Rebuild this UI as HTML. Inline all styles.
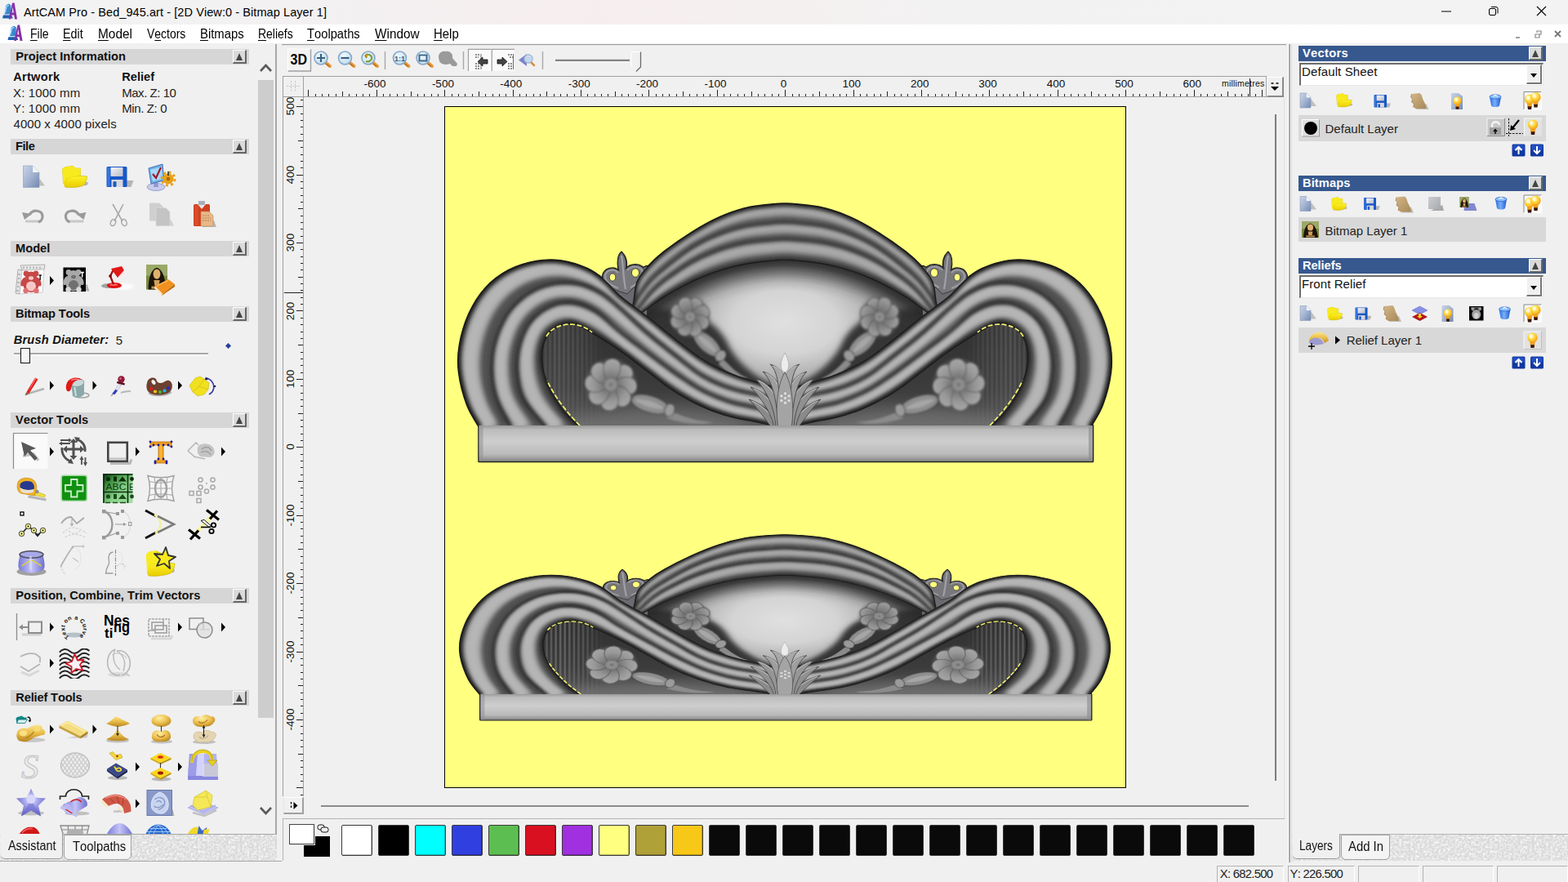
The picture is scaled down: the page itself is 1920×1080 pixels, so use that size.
<!DOCTYPE html>
<html><head><meta charset="utf-8"><title>ArtCAM Pro - Bed_945.art</title>
<style>
*{box-sizing:border-box;margin:0;padding:0}
html,body{width:1920px;height:1080px;overflow:hidden;background:#f0f0f0;font-family:"Liberation Sans",sans-serif;color:#000;font-kerning:none}
.abs{position:absolute}
#title{left:0;top:0;width:1920px;height:30px;background:linear-gradient(90deg,#f3f3f3 0,#f3f1f2 20%,#f6eeee 38%,#f3f2f2 60%,#f3f3f3 100%)}
#title .t{left:29px;top:5px;font-size:15.3px;color:#000;white-space:nowrap;letter-spacing:-0.1px}
#menu{left:0;top:30px;width:1920px;height:23px;background:#fff}
#menu span{position:absolute;top:3px;font-size:15px;white-space:nowrap;color:#000}
#menu u{text-decoration:underline;text-underline-offset:2px;text-decoration-thickness:1px}
.hdr{position:absolute;left:13px;width:292px;height:19px;background:#d6d6d6;font-weight:bold;font-size:14.67px;line-height:19px;padding-left:6px;color:#111;white-space:nowrap}
.hbtn{position:absolute;width:17px;height:17px;background:#dadada;border-top:1px solid #fff;border-left:1px solid #fff;border-right:2px solid #666;border-bottom:2px solid #666}
.hbtn:after{content:"";position:absolute;left:3px;top:3px;border-left:4.5px solid transparent;border-right:4.5px solid transparent;border-bottom:9px solid #444}
.rh{position:absolute;left:1590px;width:303px;height:19px;background:#36588f;color:#fff;font-weight:bold;font-size:14.67px;line-height:19px;padding-left:5px;white-space:nowrap}
.row{position:absolute;left:1590px;width:303px;height:29px;background:#d8d8d8;font-size:15px;color:#222}
.combo{position:absolute;left:1591px;width:299px;height:28px;background:#fff;border-top:2px solid #6d6d6d;border-left:2px solid #6d6d6d;border-bottom:1px solid #e8e8e8;border-right:1px solid #e8e8e8;font-size:15px;color:#111;padding-left:1px;line-height:18px}
.combo i{position:absolute;right:1px;top:0px;width:19px;height:24px;background:#f0f0f0;border-right:2px solid #777;border-bottom:2px solid #777;border-left:1px solid #fff;border-top:1px solid #fff}
.combo i:after{content:"";position:absolute;left:4px;top:10px;border-left:4.5px solid transparent;border-right:4.5px solid transparent;border-top:5px solid #000}
svg{position:absolute;overflow:visible}
.txt{position:absolute;white-space:nowrap}
</style></head>
<body>
<div id="title" class="abs"><div class="txt" style="left:29.0px;top:6.5px;font-size:14.5px;letter-spacing:0.079px;color:#000;">ArtCAM Pro - Bed_945.art - [2D View:0 - Bitmap Layer 1]</div>
<svg style="left:1760px;top:4px" width="150" height="22"><path d="M5 10h12" stroke="#000" stroke-width="1"/><rect x="63.5" y="6.5" width="8" height="8" rx="1.5" fill="none" stroke="#000"/><path d="M66 4.5h6a2 2 0 0 1 2 2v6" fill="none" stroke="#000"/><path d="M122 4l11 11M133 4l-11 11" stroke="#000" stroke-width="1.1"/></svg>
</div>
<div id="menu" class="abs"><span style="left:37.3px;top:2.5px;font-size:15.6px;transform:scaleX(0.9029);transform-origin:0 0"><u>F</u>ile</span><span style="left:77.3px;top:2.5px;font-size:15.6px;transform:scaleX(0.9191);transform-origin:0 0"><u>E</u>dit</span><span style="left:120.3px;top:2.5px;font-size:15.6px;transform:scaleX(0.9886);transform-origin:0 0"><u>M</u>odel</span><span style="left:180px;top:2.5px;font-size:15.6px;transform:scaleX(0.8946);transform-origin:0 0">V<u>e</u>ctors</span><span style="left:245px;top:2.5px;font-size:15.6px;transform:scaleX(0.9531);transform-origin:0 0"><u>B</u>itmaps</span><span style="left:316px;top:2.5px;font-size:15.6px;transform:scaleX(0.8957);transform-origin:0 0"><u>R</u>eliefs</span><span style="left:376px;top:2.5px;font-size:15.6px;transform:scaleX(0.9447);transform-origin:0 0"><u>T</u>oolpaths</span><span style="left:458.7px;top:2.5px;font-size:15.6px;transform:scaleX(0.9843);transform-origin:0 0"><u>W</u>indow</span><span style="left:531.3px;top:2.5px;font-size:15.6px;transform:scaleX(0.9570);transform-origin:0 0"><u>H</u>elp</span><svg style="left:1848px;top:4px" width="70" height="18"><path d="M8 12h5" stroke="#888" stroke-width="1.6"/><path d="M32 8h5v4h-5zM34 6v-2h5v4h-2" fill="none" stroke="#888" stroke-width="1.2"/><path d="M56 4l7 7M63 4l-7 7" stroke="#777" stroke-width="1.8"/></svg></div>
<div class="hdr" style="top:60px;letter-spacing:0.017px;padding-left:6.3px">Project Information</div><div class="hbtn" style="left:285px;top:61px"></div>
<div class="hdr" style="top:170px;letter-spacing:-0.463px;padding-left:6.0px">File</div><div class="hbtn" style="left:285px;top:171px"></div>
<div class="hdr" style="top:295px;letter-spacing:-0.009px;padding-left:6.0px">Model</div><div class="hbtn" style="left:285px;top:296px"></div>
<div class="hdr" style="top:375px;letter-spacing:-0.152px;padding-left:6.0px">Bitmap Tools</div><div class="hbtn" style="left:285px;top:376px"></div>
<div class="hdr" style="top:505px;letter-spacing:0.043px;padding-left:6.0px">Vector Tools</div><div class="hbtn" style="left:285px;top:506px"></div>
<div class="hdr" style="top:720px;letter-spacing:-0.010px;padding-left:6.3px">Position, Combine, Trim Vectors</div><div class="hbtn" style="left:285px;top:721px"></div>
<div class="hdr" style="top:845px;letter-spacing:-0.165px;padding-left:6.3px">Relief Tools</div><div class="hbtn" style="left:285px;top:846px"></div>
<div class="txt" style="left:16.2px;top:86px;font-size:14.67px;letter-spacing:0.244px;color:#111;font-weight:bold;">Artwork</div>
<div class="txt" style="left:149.2px;top:86px;font-size:14.67px;letter-spacing:0.013px;color:#111;font-weight:bold;">Relief</div>
<div class="txt" style="left:16.0px;top:105px;font-size:15px;letter-spacing:0.142px;color:#222;">X: 1000 mm</div>
<div class="txt" style="left:16.0px;top:124px;font-size:15px;letter-spacing:0.142px;color:#222;">Y: 1000 mm</div>
<div class="txt" style="left:16.5px;top:143px;font-size:15px;letter-spacing:0.067px;color:#222;">4000 x 4000 pixels</div>
<div class="txt" style="left:149.2px;top:105px;font-size:15px;letter-spacing:-0.456px;color:#222;">Max. Z: 10</div>
<div class="txt" style="left:149.2px;top:124px;font-size:15px;letter-spacing:-0.373px;color:#222;">Min. Z: 0</div>
<div class="txt" style="left:16.7px;top:407.7px;font-size:14.67px;letter-spacing:0.171px;color:#111;font-weight:bold;font-style:italic;">Brush Diameter:</div>
<div class="txt" style="left:141.7px;top:407.7px;font-size:15px;letter-spacing:-0.344px;color:#222;">5</div>
<div class="abs" style="left:17px;top:432px;width:238px;height:2px;background:#a8a8a8"></div><div class="abs" style="left:17px;top:434px;width:238px;height:2px;background:#fff"></div>
<div class="abs" style="left:25px;top:426px;width:12px;height:19px;background:#f4f4f4;border:1.5px solid #111"></div>
<div class="abs" style="left:277px;top:421px;width:5px;height:5px;background:#2a3f9a;transform:rotate(45deg)"></div>
<div class="abs" style="left:316px;top:98px;width:19px;height:781px;background:#cdcdcd"></div>
<svg style="left:316px;top:74px" width="19" height="16"><path d="M3 13 L9.5 6 L16 13" fill="none" stroke="#5a5a5a" stroke-width="2.6"/></svg>
<svg style="left:316px;top:986px" width="19" height="16"><path d="M3 3 L9.5 10 L16 3" fill="none" stroke="#5a5a5a" stroke-width="2.6"/></svg>
<div class="abs" style="left:337px;top:54px;width:2px;height:968px;background:#a8a8a8"></div>
<div class="abs" style="left:0;top:1022px;width:339px;height:32px;background:#d8d8d8"></div><div class="abs" style="left:0;top:1054px;width:345px;height:1px;background:#a8a8a8"></div><svg style="left:0;top:1022px" width="339" height="32"><filter id="nz" x="0" y="0" width="100%" height="100%"><feTurbulence type="fractalNoise" baseFrequency="0.35" numOctaves="2" seed="3"/><feColorMatrix values="0 0 0 0 1  0 0 0 0 1  0 0 0 0 1  1.6 1.6 0 0 -1.25"/></filter><rect width="339" height="32" filter="url(#nz)" opacity=".8"/></svg>
<div class="abs" style="left:77px;top:1021px;width:262px;height:1px;background:#a8a8a8"></div>
<div class="abs" style="left:1px;top:1021px;width:76px;height:31px;background:#f0f0f0;border-right:1px solid #999;border-bottom:1px solid #999;border-radius:0 0 5px 5px"></div>
<div class="abs" style="left:78px;top:1022px;width:83px;height:31px;background:#f4f4f4;border:1px solid #a0a0a0;border-radius:0 0 6px 6px"></div>
<div class="txt" style="left:10.3px;top:1026.9px;font-size:15.6px;color:#111;transform:scaleX(0.9229);transform-origin:0 0">Assistant</div>
<div class="txt" style="left:88.5px;top:1027.9px;font-size:15.6px;color:#111;transform:scaleX(0.9520);transform-origin:0 0">Toolpaths</div>
<svg style="left:0;top:0" width="1920" height="1080" shape-rendering="crispEdges">
<path d="M345 54.5H1575" stroke="#a0a0a0" stroke-width="1"/><path d="M345 55.5H1575" stroke="#e3e3e3" stroke-width="1"/>
<rect x="346.5" y="93.5" width="1204" height="25" fill="#f0f0f0" stroke="#a0a0a0"/>
<path d="M371.5 93V975M346.5 93V975" stroke="#a0a0a0"/>
<path d="M377.5 110V118M386.5 115V118M394.5 115V118M402.5 115V118M411.5 115V118M419.5 112V118M427.5 115V118M436.5 115V118M444.5 115V118M452.5 115V118M461.5 110V118M469.5 115V118M477.5 115V118M486.5 115V118M494.5 115V118M503.5 112V118M511.5 115V118M519.5 115V118M528.5 115V118M536.5 115V118M544.5 110V118M553.5 115V118M561.5 115V118M569.5 115V118M578.5 115V118M586.5 112V118M594.5 115V118M603.5 115V118M611.5 115V118M619.5 115V118M628.5 110V118M636.5 115V118M644.5 115V118M653.5 115V118M661.5 115V118M669.5 112V118M678.5 115V118M686.5 115V118M694.5 115V118M703.5 115V118M711.5 110V118M719.5 115V118M728.5 115V118M736.5 115V118M744.5 115V118M753.5 112V118M761.5 115V118M769.5 115V118M778.5 115V118M786.5 115V118M794.5 110V118M803.5 115V118M811.5 115V118M819.5 115V118M828.5 115V118M836.5 112V118M844.5 115V118M853.5 115V118M861.5 115V118M869.5 115V118M878.5 110V118M886.5 115V118M894.5 115V118M903.5 115V118M911.5 115V118M920.5 112V118M928.5 115V118M936.5 115V118M945.5 115V118M953.5 115V118M961.5 110V118M970.5 115V118M978.5 115V118M986.5 115V118M995.5 115V118M1003.5 112V118M1011.5 115V118M1020.5 115V118M1028.5 115V118M1036.5 115V118M1045.5 110V118M1053.5 115V118M1061.5 115V118M1070.5 115V118M1078.5 115V118M1086.5 112V118M1095.5 115V118M1103.5 115V118M1111.5 115V118M1120.5 115V118M1128.5 110V118M1136.5 115V118M1145.5 115V118M1153.5 115V118M1161.5 115V118M1170.5 112V118M1178.5 115V118M1186.5 115V118M1195.5 115V118M1203.5 115V118M1211.5 110V118M1220.5 115V118M1228.5 115V118M1236.5 115V118M1245.5 115V118M1253.5 112V118M1261.5 115V118M1270.5 115V118M1278.5 115V118M1286.5 115V118M1295.5 110V118M1303.5 115V118M1311.5 115V118M1320.5 115V118M1328.5 115V118M1336.5 112V118M1345.5 115V118M1353.5 115V118M1362.5 115V118M1370.5 115V118M1378.5 110V118M1387.5 115V118M1395.5 115V118M1403.5 115V118M1412.5 115V118M1420.5 112V118M1428.5 115V118M1437.5 115V118M1445.5 115V118M1453.5 115V118M1462.5 110V118M1470.5 115V118M1478.5 115V118M1487.5 115V118M1495.5 115V118M1503.5 112V118M1512.5 115V118M1520.5 115V118M1528.5 115V118M1537.5 115V118M1545.5 110V118M1530.5 96V118M368 973.5H371M363 964.5H371M368 956.5H371M368 948.5H371M368 939.5H371M368 931.5H371M365 923.5H371M368 914.5H371M368 906.5H371M368 898.5H371M368 889.5H371M363 881.5H371M368 873.5H371M368 864.5H371M368 856.5H371M368 848.5H371M365 839.5H371M368 831.5H371M368 823.5H371M368 814.5H371M368 806.5H371M363 798.5H371M368 789.5H371M368 781.5H371M368 772.5H371M368 764.5H371M365 756.5H371M368 747.5H371M368 739.5H371M368 731.5H371M368 722.5H371M363 714.5H371M368 706.5H371M368 697.5H371M368 689.5H371M368 681.5H371M365 672.5H371M368 664.5H371M368 656.5H371M368 647.5H371M368 639.5H371M363 631.5H371M368 622.5H371M368 614.5H371M368 606.5H371M368 597.5H371M365 589.5H371M368 581.5H371M368 572.5H371M368 564.5H371M368 556.5H371M363 547.5H371M368 539.5H371M368 531.5H371M368 522.5H371M368 514.5H371M365 506.5H371M368 497.5H371M368 489.5H371M368 481.5H371M368 472.5H371M363 464.5H371M368 456.5H371M368 447.5H371M368 439.5H371M368 431.5H371M365 422.5H371M368 414.5H371M368 406.5H371M368 397.5H371M368 389.5H371M363 380.5H371M368 372.5H371M368 364.5H371M368 355.5H371M368 347.5H371M365 339.5H371M368 330.5H371M368 322.5H371M368 314.5H371M368 305.5H371M363 297.5H371M368 289.5H371M368 280.5H371M368 272.5H371M368 264.5H371M365 255.5H371M368 247.5H371M368 239.5H371M368 230.5H371M368 222.5H371M363 214.5H371M368 205.5H371M368 197.5H371M368 189.5H371M368 180.5H371M365 172.5H371M368 164.5H371M368 155.5H371M368 147.5H371M368 139.5H371M363 130.5H371M368 122.5H371M348 358.5H371" stroke="#222" stroke-width="1"/>
</svg>
<div class="txt" style="left:429.0px;top:95px;width:60px;text-align:center;font-size:13.5px;color:#111">-600</div>
<div class="txt" style="left:512.4px;top:95px;width:60px;text-align:center;font-size:13.5px;color:#111">-500</div>
<div class="txt" style="left:595.8px;top:95px;width:60px;text-align:center;font-size:13.5px;color:#111">-400</div>
<div class="txt" style="left:679.2px;top:95px;width:60px;text-align:center;font-size:13.5px;color:#111">-300</div>
<div class="txt" style="left:762.6px;top:95px;width:60px;text-align:center;font-size:13.5px;color:#111">-200</div>
<div class="txt" style="left:846.0px;top:95px;width:60px;text-align:center;font-size:13.5px;color:#111">-100</div>
<div class="txt" style="left:929.4px;top:95px;width:60px;text-align:center;font-size:13.5px;color:#111">0</div>
<div class="txt" style="left:1012.8px;top:95px;width:60px;text-align:center;font-size:13.5px;color:#111">100</div>
<div class="txt" style="left:1096.2px;top:95px;width:60px;text-align:center;font-size:13.5px;color:#111">200</div>
<div class="txt" style="left:1179.6px;top:95px;width:60px;text-align:center;font-size:13.5px;color:#111">300</div>
<div class="txt" style="left:1263.0px;top:95px;width:60px;text-align:center;font-size:13.5px;color:#111">400</div>
<div class="txt" style="left:1346.4px;top:95px;width:60px;text-align:center;font-size:13.5px;color:#111">500</div>
<div class="txt" style="left:1429.8px;top:95px;width:60px;text-align:center;font-size:13.5px;color:#111">600</div>
<div class="txt" style="left:326px;top:872.9px;width:60px;height:16px;line-height:16px;text-align:center;font-size:13.4px;color:#111;transform:rotate(-90deg)">-400</div>
<div class="txt" style="left:326px;top:789.5px;width:60px;height:16px;line-height:16px;text-align:center;font-size:13.4px;color:#111;transform:rotate(-90deg)">-300</div>
<div class="txt" style="left:326px;top:706.1px;width:60px;height:16px;line-height:16px;text-align:center;font-size:13.4px;color:#111;transform:rotate(-90deg)">-200</div>
<div class="txt" style="left:326px;top:622.7px;width:60px;height:16px;line-height:16px;text-align:center;font-size:13.4px;color:#111;transform:rotate(-90deg)">-100</div>
<div class="txt" style="left:326px;top:539.3px;width:60px;height:16px;line-height:16px;text-align:center;font-size:13.4px;color:#111;transform:rotate(-90deg)">0</div>
<div class="txt" style="left:326px;top:455.9px;width:60px;height:16px;line-height:16px;text-align:center;font-size:13.4px;color:#111;transform:rotate(-90deg)">100</div>
<div class="txt" style="left:326px;top:372.5px;width:60px;height:16px;line-height:16px;text-align:center;font-size:13.4px;color:#111;transform:rotate(-90deg)">200</div>
<div class="txt" style="left:326px;top:289.1px;width:60px;height:16px;line-height:16px;text-align:center;font-size:13.4px;color:#111;transform:rotate(-90deg)">300</div>
<div class="txt" style="left:326px;top:205.7px;width:60px;height:16px;line-height:16px;text-align:center;font-size:13.4px;color:#111;transform:rotate(-90deg)">400</div>
<div class="txt" style="left:326px;top:122.3px;width:60px;height:16px;line-height:16px;text-align:center;font-size:13.4px;color:#111;transform:rotate(-90deg)">500</div>
<div class="txt" style="left:1496px;top:96px;font-size:10.5px;color:#111;letter-spacing:0.2px">millimetres</div>
<div class="abs" style="left:1551px;top:94px;width:21px;height:25px;background:#f0f0f0;border-right:2px solid #8a8a8a;border-bottom:2px solid #8a8a8a;border-top:1px solid #fff;border-left:1px solid #fff"></div>
<svg style="left:1551px;top:94px" width="21" height="25"><path d="M5.5 8h3M11.5 8h3" stroke="#000" stroke-width="1.4"/><path d="M5 12h10l-5 5z" fill="#000"/></svg>
<svg style="left:347px;top:94px" width="24" height="24"><path d="M4 11.5h17M9.5 5v13M14.5 5v13" stroke="#c4c4c4" stroke-width="1" stroke-dasharray="2 1.5"/></svg>
<div class="abs" style="left:1561px;top:140px;width:2px;height:816px;background:#7d7d7d"></div>
<div class="abs" style="left:393px;top:986px;width:1136px;height:2px;background:#8a8a8a"></div>
<div class="abs" style="left:346.5px;top:975.5px;width:25.5px;height:21.5px;background:#f0f0f0;border-right:2px solid #a0a0a0;border-bottom:2px solid #a0a0a0;border-top:1px solid #fff;border-left:1px solid #e4e4e4"></div>
<svg style="left:347px;top:976px" width="24" height="21"><path d="M9.5 6v9" stroke="#000" stroke-width="1.3" stroke-dasharray="2.5 2"/><path d="M12.5 6l5 4.5l-5 4.5z" fill="#000"/></svg>
<div class="abs" style="left:346px;top:1002px;width:1227px;height:1px;background:#b4b4b4"></div><div class="abs" style="left:346px;top:1002px;width:1px;height:52px;background:#b4b4b4"></div>
<div class="abs" style="left:1572px;top:118px;width:1px;height:884px;background:#e2e2e2"></div>
<div class="abs" style="left:544px;top:130px;width:835px;height:835px;background:#ffff80;border:1px solid #000"></div>
<svg style="left:0;top:0" width="1920" height="1080" viewBox="0 0 1920 1080"><defs>
<filter id="b1" x="-20%" y="-20%" width="140%" height="140%"><feGaussianBlur stdDeviation="0.8"/></filter>
<filter id="b2" x="-20%" y="-20%" width="140%" height="140%"><feGaussianBlur stdDeviation="2.2"/></filter>
<filter id="b3" x="-20%" y="-20%" width="140%" height="140%"><feGaussianBlur stdDeviation="3"/></filter>
<filter id="b4" x="-20%" y="-20%" width="140%" height="140%"><feGaussianBlur stdDeviation="3.5"/></filter>
<filter id="b5" x="-20%" y="-20%" width="140%" height="140%"><feGaussianBlur stdDeviation="5"/></filter>
<filter id="b6" x="-30%" y="-50%" width="160%" height="200%"><feGaussianBlur stdDeviation="9"/></filter>
<radialGradient id="bowl" gradientUnits="userSpaceOnUse" cx="961" cy="395" r="185" gradientTransform="translate(961 395) scale(1 0.6) translate(-961 -395)">
<stop offset="0" stop-color="#e0e0e0"/><stop offset="0.35" stop-color="#d4d4d4"/><stop offset="0.6" stop-color="#b0b0b0"/><stop offset="0.8" stop-color="#808080"/><stop offset="1" stop-color="#585858"/></radialGradient>
<linearGradient id="lobebg" gradientUnits="userSpaceOnUse" x1="0" y1="400" x2="0" y2="526"><stop offset="0" stop-color="#303030"/><stop offset="0.6" stop-color="#3c3c3c"/><stop offset="1" stop-color="#5a5a5a"/></linearGradient>
<linearGradient id="strfade" gradientUnits="userSpaceOnUse" x1="664" y1="0" x2="738" y2="0"><stop offset="0" stop-color="#6c6c6c" stop-opacity="0.5"/><stop offset="0.25" stop-color="#6c6c6c" stop-opacity="0.8"/><stop offset="0.7" stop-color="#6c6c6c" stop-opacity="0.5"/><stop offset="1" stop-color="#6c6c6c" stop-opacity="0"/></linearGradient>
<linearGradient id="barg" x1="0" y1="0" x2="0" y2="1"><stop offset="0" stop-color="#9a9a9a"/><stop offset="0.12" stop-color="#bcbcbc"/><stop offset="0.45" stop-color="#cecece"/><stop offset="0.8" stop-color="#bababa"/><stop offset="0.93" stop-color="#9a9a9a"/><stop offset="1" stop-color="#7c7c7c"/></linearGradient>
<radialGradient id="pet" gradientUnits="userSpaceOnUse" cx="0" cy="0" r="30"><stop offset="0.2" stop-color="#6e6e6e"/><stop offset="0.7" stop-color="#989898"/><stop offset="1" stop-color="#a4a4a4"/></radialGradient>
</defs><g id="orn"><g fill="#1a1a1a" stroke="#1a1a1a" stroke-width="2.6" stroke-linejoin="round"><path d="M587.0 523.0C584.5 518.4 576.2 506.8 572.0 495.5C567.8 484.2 563.5 467.8 562.0 455.5C560.5 443.2 560.9 433.9 563.0 422.0C565.1 410.1 569.2 395.9 574.4 384.4C579.6 372.9 586.3 361.9 594.4 353.0C602.5 344.1 612.6 336.5 623.0 331.0C633.4 325.5 645.9 321.9 656.7 320.0C667.5 318.1 677.4 318.0 687.8 319.5C698.2 321.0 710.3 325.1 719.0 329.0C727.7 332.9 733.2 337.3 740.0 343.0C746.8 348.7 751.2 355.5 760.0 363.0C768.8 370.5 781.9 379.3 793.0 388.0C804.1 396.7 815.5 406.3 826.7 415.0C837.9 423.7 849.0 433.1 860.0 440.0C871.0 446.9 881.9 452.0 893.0 456.7C904.1 461.4 914.9 464.4 926.7 468.0C938.5 471.6 957.8 476.3 964.0 478.0L964.0 525.0C957.8 523.6 938.5 519.2 926.7 516.7C914.9 514.2 904.1 513.1 893.0 510.0C881.9 506.9 871.0 503.0 860.0 498.0C849.0 493.0 837.9 487.2 826.7 480.0C815.5 472.8 804.1 463.3 793.0 455.0C781.9 446.7 771.7 438.1 760.0 430.0C748.3 421.9 732.8 412.4 723.0 406.7C713.2 401.0 707.7 397.1 701.0 396.0C694.3 394.9 688.3 397.2 683.0 400.0C677.7 402.8 672.2 406.7 669.0 413.0C665.8 419.3 663.3 428.5 663.5 437.8C663.7 447.1 665.9 458.6 670.0 469.0C674.1 479.4 681.3 491.0 688.0 500.0C694.7 509.0 706.3 519.2 710.0 523.0Z"/><path d="M1335.0 523.0C1337.5 518.4 1345.8 506.8 1350.0 495.5C1354.2 484.2 1358.5 467.8 1360.0 455.5C1361.5 443.2 1361.1 433.9 1359.0 422.0C1356.9 410.1 1352.8 395.9 1347.6 384.4C1342.4 372.9 1335.7 361.9 1327.6 353.0C1319.5 344.1 1309.4 336.5 1299.0 331.0C1288.6 325.5 1276.1 321.9 1265.3 320.0C1254.5 318.1 1244.6 318.0 1234.2 319.5C1223.8 321.0 1211.7 325.1 1203.0 329.0C1194.3 332.9 1188.8 337.3 1182.0 343.0C1175.2 348.7 1170.8 355.5 1162.0 363.0C1153.2 370.5 1140.1 379.3 1129.0 388.0C1117.9 396.7 1106.5 406.3 1095.3 415.0C1084.1 423.7 1073.0 433.1 1062.0 440.0C1051.0 446.9 1040.1 452.0 1029.0 456.7C1017.9 461.4 1007.1 464.4 995.3 468.0C983.5 471.6 964.2 476.3 958.0 478.0L958.0 525.0C964.2 523.6 983.5 519.2 995.3 516.7C1007.1 514.2 1017.9 513.1 1029.0 510.0C1040.1 506.9 1051.0 503.0 1062.0 498.0C1073.0 493.0 1084.1 487.2 1095.3 480.0C1106.5 472.8 1117.9 463.3 1129.0 455.0C1140.1 446.7 1150.3 438.1 1162.0 430.0C1173.7 421.9 1189.2 412.4 1199.0 406.7C1208.8 401.0 1214.3 397.1 1221.0 396.0C1227.7 394.9 1233.7 397.2 1239.0 400.0C1244.3 402.8 1249.8 406.7 1253.0 413.0C1256.2 419.3 1258.7 428.5 1258.5 437.8C1258.3 447.1 1256.1 458.6 1252.0 469.0C1247.9 479.4 1240.7 491.0 1234.0 500.0C1227.3 509.0 1215.7 519.2 1212.0 523.0Z"/><path d="M772.2 389.7C772.9 386.1 774.7 375.4 776.0 368.0C777.3 360.6 777.1 351.9 780.0 345.0C782.9 338.1 787.8 332.8 793.3 326.7C798.8 320.6 804.4 315.2 813.3 308.3C822.2 301.4 835.6 291.9 846.7 285.0C857.8 278.1 868.9 271.7 880.0 266.7C891.1 261.7 902.2 257.7 913.3 255.0C924.4 252.3 938.8 251.2 946.7 250.3C954.7 249.4 956.2 249.6 961.0 249.6C965.8 249.6 967.3 249.4 975.3 250.3C983.2 251.2 997.6 252.3 1008.7 255.0C1019.8 257.7 1030.9 261.7 1042.0 266.7C1053.1 271.7 1064.2 278.1 1075.3 285.0C1086.4 291.9 1099.8 301.4 1108.7 308.3C1117.6 315.2 1123.2 320.6 1128.7 326.7C1134.2 332.8 1139.1 338.1 1142.0 345.0C1144.9 351.9 1144.7 360.6 1146.0 368.0C1147.3 375.4 1149.1 386.1 1149.8 389.7L1149.9 392.8C1146.9 390.7 1138.9 384.9 1132.0 380.0C1125.1 375.1 1118.2 369.1 1108.7 363.3C1099.2 357.5 1086.4 350.3 1075.3 345.0C1064.2 339.7 1053.0 335.3 1042.0 331.7C1031.0 328.1 1020.1 325.4 1009.0 323.3C997.9 321.2 983.3 319.8 975.3 319.0C967.3 318.2 965.8 318.4 961.0 318.4C956.2 318.4 954.7 318.2 946.7 319.0C938.7 319.8 924.1 321.2 913.0 323.3C901.9 325.4 891.0 328.1 880.0 331.7C869.0 335.3 857.8 339.7 846.7 345.0C835.6 350.3 822.8 357.5 813.3 363.3C803.8 369.1 796.9 375.1 790.0 380.0C783.1 384.9 775.1 390.7 772.1 392.8Z"/><path d="M772.1 392.8C775.1 390.7 783.1 384.9 790.0 380.0C796.9 375.1 803.8 369.1 813.3 363.3C822.8 357.5 835.6 350.3 846.7 345.0C857.8 339.7 869.0 335.3 880.0 331.7C891.0 328.1 901.9 325.4 913.0 323.3C924.1 321.2 938.7 319.8 946.7 319.0C954.7 318.2 956.2 318.4 961.0 318.4C965.8 318.4 967.3 318.2 975.3 319.0C983.3 319.8 997.9 321.2 1009.0 323.3C1020.1 325.4 1031.0 328.1 1042.0 331.7C1053.0 335.3 1064.2 339.7 1075.3 345.0C1086.4 350.3 1099.2 357.5 1108.7 363.3C1118.2 369.1 1125.1 375.1 1132.0 380.0C1138.9 384.9 1146.9 390.7 1149.9 392.8L1131 400L1131 520L791 520L791 400Z"/><path d="M710.0 523.0C706.3 519.2 694.7 509.0 688.0 500.0C681.3 491.0 674.1 479.4 670.0 469.0C665.9 458.6 663.7 447.1 663.5 437.8C663.3 428.5 665.8 419.3 669.0 413.0C672.2 406.7 677.7 402.8 683.0 400.0C688.3 397.2 694.3 394.9 701.0 396.0C707.7 397.1 713.2 401.0 723.0 406.7C732.8 412.4 748.3 421.9 760.0 430.0C771.7 438.1 781.9 446.7 793.0 455.0C804.1 463.3 815.5 472.8 826.7 480.0C837.9 487.2 849.0 493.0 860.0 498.0C871.0 503.0 881.9 506.9 893.0 510.0C904.1 513.1 914.9 514.2 926.7 516.7C938.5 519.2 957.8 523.6 964.0 525.0L966 526L710 526Z"/><path d="M1212.0 523.0C1215.7 519.2 1227.3 509.0 1234.0 500.0C1240.7 491.0 1247.9 479.4 1252.0 469.0C1256.1 458.6 1258.3 447.1 1258.5 437.8C1258.7 428.5 1256.2 419.3 1253.0 413.0C1249.8 406.7 1244.3 402.8 1239.0 400.0C1233.7 397.2 1227.7 394.9 1221.0 396.0C1214.3 397.1 1208.8 401.0 1199.0 406.7C1189.2 412.4 1173.7 421.9 1162.0 430.0C1150.3 438.1 1140.1 446.7 1129.0 455.0C1117.9 463.3 1106.5 472.8 1095.3 480.0C1084.1 487.2 1073.0 493.0 1062.0 498.0C1051.0 503.0 1040.1 506.9 1029.0 510.0C1017.9 513.1 1007.1 514.2 995.3 516.7C983.5 519.2 964.2 523.6 958.0 525.0L956 526L1212 526Z"/><path d="M586.5 521H1338V565H586.5Z"/><path d="M761 309C766 314 768 322 766 330C772 322 786 322 790 332C792 342 784 350 776 352L768 360L756 356C748 352 738 348 738 338C740 328 752 326 758 332C756 322 756 314 761 309Z"/><path d="M1161 309C1156 314 1154 322 1156 330C1150 322 1136 322 1132 332C1130 342 1138 350 1146 352L1154 360L1166 356C1174 352 1184 348 1184 338C1182 328 1170 326 1164 332C1166 322 1166 314 1161 309Z"/><path d="M738 350L792 326L792 394Z"/><path d="M1184 350L1130 326L1130 394Z"/></g><clipPath id="cc"><path d="M772.1 392.8C775.1 390.7 783.1 384.9 790.0 380.0C796.9 375.1 803.8 369.1 813.3 363.3C822.8 357.5 835.6 350.3 846.7 345.0C857.8 339.7 869.0 335.3 880.0 331.7C891.0 328.1 901.9 325.4 913.0 323.3C924.1 321.2 938.7 319.8 946.7 319.0C954.7 318.2 956.2 318.4 961.0 318.4C965.8 318.4 967.3 318.2 975.3 319.0C983.3 319.8 997.9 321.2 1009.0 323.3C1020.1 325.4 1031.0 328.1 1042.0 331.7C1053.0 335.3 1064.2 339.7 1075.3 345.0C1086.4 350.3 1099.2 357.5 1108.7 363.3C1118.2 369.1 1125.1 375.1 1132.0 380.0C1138.9 384.9 1146.9 390.7 1149.9 392.8L1131 400L1131 520L791 520L791 400Z"/></clipPath><path d="M772.1 392.8C775.1 390.7 783.1 384.9 790.0 380.0C796.9 375.1 803.8 369.1 813.3 363.3C822.8 357.5 835.6 350.3 846.7 345.0C857.8 339.7 869.0 335.3 880.0 331.7C891.0 328.1 901.9 325.4 913.0 323.3C924.1 321.2 938.7 319.8 946.7 319.0C954.7 318.2 956.2 318.4 961.0 318.4C965.8 318.4 967.3 318.2 975.3 319.0C983.3 319.8 997.9 321.2 1009.0 323.3C1020.1 325.4 1031.0 328.1 1042.0 331.7C1053.0 335.3 1064.2 339.7 1075.3 345.0C1086.4 350.3 1099.2 357.5 1108.7 363.3C1118.2 369.1 1125.1 375.1 1132.0 380.0C1138.9 384.9 1146.9 390.7 1149.9 392.8L1131 400L1131 520L791 520L791 400Z" fill="#3a3a3a"/><g clip-path="url(#cc)"><rect x="780" y="300" width="362" height="230" fill="url(#bowl)"/><g transform="translate(961.0 0) scale(1 1) translate(-961.0 0)"><path d="M770 378C830 374 872 384 890 418C902 446 930 466 961 478L961 530L770 530Z" fill="#343434" filter="url(#b4)"/></g><g transform="translate(961.0 0) scale(-1 1) translate(-961.0 0)"><path d="M770 378C830 374 872 384 890 418C902 446 930 466 961 478L961 530L770 530Z" fill="#343434" filter="url(#b4)"/></g><path d="M772.1 392.8C775.1 390.7 783.1 384.9 790.0 380.0C796.9 375.1 803.8 369.1 813.3 363.3C822.8 357.5 835.6 350.3 846.7 345.0C857.8 339.7 869.0 335.3 880.0 331.7C891.0 328.1 901.9 325.4 913.0 323.3C924.1 321.2 938.7 319.8 946.7 319.0C954.7 318.2 956.2 318.4 961.0 318.4C965.8 318.4 967.3 318.2 975.3 319.0C983.3 319.8 997.9 321.2 1009.0 323.3C1020.1 325.4 1031.0 328.1 1042.0 331.7C1053.0 335.3 1064.2 339.7 1075.3 345.0C1086.4 350.3 1099.2 357.5 1108.7 363.3C1118.2 369.1 1125.1 375.1 1132.0 380.0C1138.9 384.9 1146.9 390.7 1149.9 392.8" fill="none" stroke="#2a2a2a" stroke-width="34" opacity="0.8" filter="url(#b6)"/><path d="M772.1 392.8C775.1 390.7 783.1 384.9 790.0 380.0C796.9 375.1 803.8 369.1 813.3 363.3C822.8 357.5 835.6 350.3 846.7 345.0C857.8 339.7 869.0 335.3 880.0 331.7C891.0 328.1 901.9 325.4 913.0 323.3C924.1 321.2 938.7 319.8 946.7 319.0C954.7 318.2 956.2 318.4 961.0 318.4C965.8 318.4 967.3 318.2 975.3 319.0C983.3 319.8 997.9 321.2 1009.0 323.3C1020.1 325.4 1031.0 328.1 1042.0 331.7C1053.0 335.3 1064.2 339.7 1075.3 345.0C1086.4 350.3 1099.2 357.5 1108.7 363.3C1118.2 369.1 1125.1 375.1 1132.0 380.0C1138.9 384.9 1146.9 390.7 1149.9 392.8" fill="none" stroke="#2a2a2a" stroke-width="10" opacity="0.7" filter="url(#b3)"/><g transform="translate(961.0 0) scale(1 1) translate(-961.0 0)"><path d="M884 438C894 448 902 458 916 463C904 464 892 458 880 446Z" fill="#8a8a8a" filter="url(#b1)"/><g transform="translate(866 421) rotate(42)" filter="url(#b1)"><ellipse rx="21" ry="9.5" fill="#8e8e8e" stroke="#444" stroke-width="1"/><path d="M-18 0C-6 -5 6 -5 16 0C6 5 -6 5 -18 0Z" fill="#a6a6a6"/><ellipse cx="22" cy="0" rx="6" ry="7.5" fill="#9a9a9a" stroke="#444" stroke-width="1"/></g><g transform="translate(845 388) rotate(-15)" filter="url(#b1)"><circle r="23.5" fill="#5c5c5c" filter="url(#b2)"/><g transform="rotate(0.0)"><path d="M0 0C-2.4 -14.4 6.0 -24.5 14.9 -19.7C24.0 -13.2 16.8 -2.4 0 0Z" fill="url(#pet)" stroke="#5e5e5e" stroke-width="1.1"/></g><g transform="rotate(45.0)"><path d="M0 0C-2.4 -14.4 6.0 -24.5 14.9 -19.7C24.0 -13.2 16.8 -2.4 0 0Z" fill="url(#pet)" stroke="#5e5e5e" stroke-width="1.1"/></g><g transform="rotate(90.0)"><path d="M0 0C-2.4 -14.4 6.0 -24.5 14.9 -19.7C24.0 -13.2 16.8 -2.4 0 0Z" fill="url(#pet)" stroke="#5e5e5e" stroke-width="1.1"/></g><g transform="rotate(135.0)"><path d="M0 0C-2.4 -14.4 6.0 -24.5 14.9 -19.7C24.0 -13.2 16.8 -2.4 0 0Z" fill="url(#pet)" stroke="#5e5e5e" stroke-width="1.1"/></g><g transform="rotate(180.0)"><path d="M0 0C-2.4 -14.4 6.0 -24.5 14.9 -19.7C24.0 -13.2 16.8 -2.4 0 0Z" fill="url(#pet)" stroke="#5e5e5e" stroke-width="1.1"/></g><g transform="rotate(225.0)"><path d="M0 0C-2.4 -14.4 6.0 -24.5 14.9 -19.7C24.0 -13.2 16.8 -2.4 0 0Z" fill="url(#pet)" stroke="#5e5e5e" stroke-width="1.1"/></g><g transform="rotate(270.0)"><path d="M0 0C-2.4 -14.4 6.0 -24.5 14.9 -19.7C24.0 -13.2 16.8 -2.4 0 0Z" fill="url(#pet)" stroke="#5e5e5e" stroke-width="1.1"/></g><g transform="rotate(315.0)"><path d="M0 0C-2.4 -14.4 6.0 -24.5 14.9 -19.7C24.0 -13.2 16.8 -2.4 0 0Z" fill="url(#pet)" stroke="#5e5e5e" stroke-width="1.1"/></g><circle r="6.5" fill="#8a8a8a" stroke="#6a6a6a" stroke-width="1"/><circle r="2.9" fill="#7a7a7a" stroke="#9c9c9c" stroke-width="1"/></g></g><g transform="translate(961.0 0) scale(-1 1) translate(-961.0 0)"><path d="M884 438C894 448 902 458 916 463C904 464 892 458 880 446Z" fill="#8a8a8a" filter="url(#b1)"/><g transform="translate(866 421) rotate(42)" filter="url(#b1)"><ellipse rx="21" ry="9.5" fill="#8e8e8e" stroke="#444" stroke-width="1"/><path d="M-18 0C-6 -5 6 -5 16 0C6 5 -6 5 -18 0Z" fill="#a6a6a6"/><ellipse cx="22" cy="0" rx="6" ry="7.5" fill="#9a9a9a" stroke="#444" stroke-width="1"/></g><g transform="translate(845 388) rotate(-15)" filter="url(#b1)"><circle r="23.5" fill="#5c5c5c" filter="url(#b2)"/><g transform="rotate(0.0)"><path d="M0 0C-2.4 -14.4 6.0 -24.5 14.9 -19.7C24.0 -13.2 16.8 -2.4 0 0Z" fill="url(#pet)" stroke="#5e5e5e" stroke-width="1.1"/></g><g transform="rotate(45.0)"><path d="M0 0C-2.4 -14.4 6.0 -24.5 14.9 -19.7C24.0 -13.2 16.8 -2.4 0 0Z" fill="url(#pet)" stroke="#5e5e5e" stroke-width="1.1"/></g><g transform="rotate(90.0)"><path d="M0 0C-2.4 -14.4 6.0 -24.5 14.9 -19.7C24.0 -13.2 16.8 -2.4 0 0Z" fill="url(#pet)" stroke="#5e5e5e" stroke-width="1.1"/></g><g transform="rotate(135.0)"><path d="M0 0C-2.4 -14.4 6.0 -24.5 14.9 -19.7C24.0 -13.2 16.8 -2.4 0 0Z" fill="url(#pet)" stroke="#5e5e5e" stroke-width="1.1"/></g><g transform="rotate(180.0)"><path d="M0 0C-2.4 -14.4 6.0 -24.5 14.9 -19.7C24.0 -13.2 16.8 -2.4 0 0Z" fill="url(#pet)" stroke="#5e5e5e" stroke-width="1.1"/></g><g transform="rotate(225.0)"><path d="M0 0C-2.4 -14.4 6.0 -24.5 14.9 -19.7C24.0 -13.2 16.8 -2.4 0 0Z" fill="url(#pet)" stroke="#5e5e5e" stroke-width="1.1"/></g><g transform="rotate(270.0)"><path d="M0 0C-2.4 -14.4 6.0 -24.5 14.9 -19.7C24.0 -13.2 16.8 -2.4 0 0Z" fill="url(#pet)" stroke="#5e5e5e" stroke-width="1.1"/></g><g transform="rotate(315.0)"><path d="M0 0C-2.4 -14.4 6.0 -24.5 14.9 -19.7C24.0 -13.2 16.8 -2.4 0 0Z" fill="url(#pet)" stroke="#5e5e5e" stroke-width="1.1"/></g><circle r="6.5" fill="#8a8a8a" stroke="#6a6a6a" stroke-width="1"/><circle r="2.9" fill="#7a7a7a" stroke="#9c9c9c" stroke-width="1"/></g></g></g><g transform="translate(961.0 0) scale(1 1) translate(-961.0 0)"><path d="M738 350L792 326L792 394Z" fill="#6a6a70"/><path d="M761 309C766 314 768 322 766 330C772 322 786 322 790 332C792 342 784 350 776 352L768 360L756 356C748 352 738 348 738 338C740 328 752 326 758 332C756 322 756 314 761 309Z" fill="#77777c" stroke="#3a3a3a" stroke-width="1"/><path d="M761 313C763 322 763 340 766 354" stroke="#a0a0a6" stroke-width="2.2" fill="none"/><path d="M757 334C752 328 742 330 741 338C741 346 750 350 757 353" stroke="#9c9ca2" stroke-width="2" fill="none"/><path d="M768 331C774 324 786 326 787 334C788 342 780 348 772 352" stroke="#9c9ca2" stroke-width="2" fill="none"/><ellipse cx="750" cy="339.5" rx="3.8" ry="4.6" fill="#ffff80" stroke="#333" stroke-width="0.8"/><ellipse cx="778" cy="334" rx="4.6" ry="5.2" fill="#ffff80" stroke="#333" stroke-width="0.8"/></g><g transform="translate(961.0 0) scale(-1 1) translate(-961.0 0)"><path d="M738 350L792 326L792 394Z" fill="#6a6a70"/><path d="M761 309C766 314 768 322 766 330C772 322 786 322 790 332C792 342 784 350 776 352L768 360L756 356C748 352 738 348 738 338C740 328 752 326 758 332C756 322 756 314 761 309Z" fill="#77777c" stroke="#3a3a3a" stroke-width="1"/><path d="M761 313C763 322 763 340 766 354" stroke="#a0a0a6" stroke-width="2.2" fill="none"/><path d="M757 334C752 328 742 330 741 338C741 346 750 350 757 353" stroke="#9c9ca2" stroke-width="2" fill="none"/><path d="M768 331C774 324 786 326 787 334C788 342 780 348 772 352" stroke="#9c9ca2" stroke-width="2" fill="none"/><ellipse cx="750" cy="339.5" rx="3.8" ry="4.6" fill="#ffff80" stroke="#333" stroke-width="0.8"/><ellipse cx="778" cy="334" rx="4.6" ry="5.2" fill="#ffff80" stroke="#333" stroke-width="0.8"/></g><clipPath id="arc"><path d="M772.2 389.7L773.5 382.3L774.8 375.0L776.1 367.6L777.0 360.2L777.9 352.8L779.8 345.6L783.2 339.0L787.7 333.0L792.7 327.4L797.8 322.0L803.1 316.8L808.8 311.9L814.6 307.3L820.6 302.8L826.7 298.4L832.8 294.1L839.0 290.0L845.2 285.9L851.6 282.0L858.0 278.2L864.5 274.5L871.1 271.0L877.8 267.7L884.6 264.7L891.5 261.9L898.6 259.3L905.7 257.1L912.9 255.1L920.2 253.6L927.6 252.4L935.0 251.5L942.4 250.8L949.8 250.0L957.3 249.6L964.7 249.6L972.2 250.0L979.6 250.8L987.0 251.5L994.4 252.4L1001.8 253.6L1009.1 255.1L1016.3 257.1L1023.4 259.3L1030.5 261.9L1037.4 264.7L1044.2 267.7L1050.9 271.0L1057.5 274.5L1064.0 278.2L1070.4 282.0L1076.8 285.9L1083.0 290.0L1089.2 294.1L1095.3 298.4L1101.4 302.8L1107.4 307.3L1113.2 311.9L1118.9 316.8L1124.2 322.0L1129.3 327.4L1134.3 333.0L1138.8 339.0L1142.2 345.6L1144.1 352.8L1145.0 360.2L1145.9 367.6L1147.2 375.0L1148.5 382.3L1149.8 389.7L1149.9 392.8L1145.0 389.3L1140.1 385.8L1135.2 382.3L1130.4 378.8L1125.6 375.2L1120.8 371.6L1115.9 368.1L1111.0 364.7L1105.9 361.6L1100.7 358.5L1095.5 355.5L1090.2 352.6L1084.9 349.8L1079.6 347.1L1074.2 344.5L1068.7 342.0L1063.2 339.6L1057.6 337.3L1052.0 335.2L1046.4 333.2L1040.7 331.3L1035.0 329.5L1029.2 327.9L1023.4 326.4L1017.5 325.0L1011.7 323.8L1005.8 322.7L999.8 321.8L993.9 321.0L987.9 320.3L981.9 319.7L976.0 319.1L970.0 318.5L964.0 318.4L958.0 318.4L952.0 318.5L946.0 319.1L940.1 319.7L934.1 320.3L928.1 321.0L922.2 321.8L916.2 322.7L910.3 323.8L904.5 325.0L898.6 326.4L892.8 327.9L887.0 329.5L881.3 331.3L875.6 333.2L870.0 335.2L864.4 337.3L858.8 339.6L853.3 342.0L847.8 344.5L842.4 347.1L837.1 349.8L831.8 352.6L826.5 355.5L821.3 358.5L816.1 361.6L811.0 364.7L806.1 368.1L801.2 371.6L796.4 375.2L791.6 378.8L786.8 382.3L781.9 385.8L777.0 389.3L772.1 392.8Z"/></clipPath><path d="M772.2 389.7L773.5 382.3L774.8 375.0L776.1 367.6L777.0 360.2L777.9 352.8L779.8 345.6L783.2 339.0L787.7 333.0L792.7 327.4L797.8 322.0L803.1 316.8L808.8 311.9L814.6 307.3L820.6 302.8L826.7 298.4L832.8 294.1L839.0 290.0L845.2 285.9L851.6 282.0L858.0 278.2L864.5 274.5L871.1 271.0L877.8 267.7L884.6 264.7L891.5 261.9L898.6 259.3L905.7 257.1L912.9 255.1L920.2 253.6L927.6 252.4L935.0 251.5L942.4 250.8L949.8 250.0L957.3 249.6L964.7 249.6L972.2 250.0L979.6 250.8L987.0 251.5L994.4 252.4L1001.8 253.6L1009.1 255.1L1016.3 257.1L1023.4 259.3L1030.5 261.9L1037.4 264.7L1044.2 267.7L1050.9 271.0L1057.5 274.5L1064.0 278.2L1070.4 282.0L1076.8 285.9L1083.0 290.0L1089.2 294.1L1095.3 298.4L1101.4 302.8L1107.4 307.3L1113.2 311.9L1118.9 316.8L1124.2 322.0L1129.3 327.4L1134.3 333.0L1138.8 339.0L1142.2 345.6L1144.1 352.8L1145.0 360.2L1145.9 367.6L1147.2 375.0L1148.5 382.3L1149.8 389.7L1149.9 392.8L1145.0 389.3L1140.1 385.8L1135.2 382.3L1130.4 378.8L1125.6 375.2L1120.8 371.6L1115.9 368.1L1111.0 364.7L1105.9 361.6L1100.7 358.5L1095.5 355.5L1090.2 352.6L1084.9 349.8L1079.6 347.1L1074.2 344.5L1068.7 342.0L1063.2 339.6L1057.6 337.3L1052.0 335.2L1046.4 333.2L1040.7 331.3L1035.0 329.5L1029.2 327.9L1023.4 326.4L1017.5 325.0L1011.7 323.8L1005.8 322.7L999.8 321.8L993.9 321.0L987.9 320.3L981.9 319.7L976.0 319.1L970.0 318.5L964.0 318.4L958.0 318.4L952.0 318.5L946.0 319.1L940.1 319.7L934.1 320.3L928.1 321.0L922.2 321.8L916.2 322.7L910.3 323.8L904.5 325.0L898.6 326.4L892.8 327.9L887.0 329.5L881.3 331.3L875.6 333.2L870.0 335.2L864.4 337.3L858.8 339.6L853.3 342.0L847.8 344.5L842.4 347.1L837.1 349.8L831.8 352.6L826.5 355.5L821.3 358.5L816.1 361.6L811.0 364.7L806.1 368.1L801.2 371.6L796.4 375.2L791.6 378.8L786.8 382.3L781.9 385.8L777.0 389.3L772.1 392.8Z" fill="#8c8c8c"/><g clip-path="url(#arc)"><path d="M767.8 383.9L771.3 378.1L774.9 372.3L778.5 366.6L781.9 360.8L785.3 354.9L788.9 349.1L793.1 343.7L797.8 338.6L802.7 333.8L807.9 329.3L813.2 324.9L818.5 320.5L823.9 316.2L829.4 312.0L835.0 307.9L840.6 304.0L846.4 300.2L852.3 296.7L858.4 293.4L864.5 290.2L870.7 287.2L877.0 284.4L883.4 281.8L889.9 279.4L896.4 277.3L903.0 275.3L909.7 273.6L916.4 272.2L923.2 271.0L930.1 270.2L936.9 269.4L943.8 268.8L950.7 268.1L957.6 267.8L964.4 267.8L971.3 268.1L978.2 268.8L985.1 269.4L991.9 270.2L998.8 271.0L1005.6 272.2L1012.3 273.6L1019.0 275.3L1025.6 277.3L1032.1 279.4L1038.6 281.8L1045.0 284.4L1051.3 287.2L1057.5 290.2L1063.6 293.4L1069.7 296.7L1075.6 300.2L1081.4 304.0L1087.0 307.9L1092.6 312.0L1098.1 316.2L1103.5 320.5L1108.8 324.9L1114.1 329.3L1119.3 333.8L1124.2 338.6L1128.9 343.7L1133.1 349.1L1136.7 354.9L1140.1 360.8L1143.5 366.6L1147.1 372.3L1150.7 378.1L1154.2 383.9" fill="none" stroke="#3a3a3a" stroke-width="6.3" opacity="0.75" filter="url(#b3)"/><path d="M770.3 387.1L772.6 380.5L774.8 373.8L777.1 367.2L779.1 360.4L781.1 353.7L783.8 347.1L787.6 341.0L792.1 335.5L797.1 330.2L802.2 325.2L807.6 320.3L813.1 315.7L818.7 311.2L824.5 306.8L830.3 302.6L836.2 298.5L842.2 294.5L848.4 290.7L854.6 287.0L860.8 283.5L867.2 280.1L873.7 276.9L880.3 273.9L886.9 271.2L893.7 268.6L900.5 266.4L907.4 264.3L914.4 262.6L921.5 261.2L928.7 260.2L935.8 259.4L943.0 258.7L950.2 257.9L957.4 257.6L964.6 257.6L971.8 257.9L979.0 258.7L986.2 259.4L993.3 260.2L1000.5 261.2L1007.6 262.6L1014.6 264.3L1021.5 266.4L1028.3 268.6L1035.1 271.2L1041.7 273.9L1048.3 276.9L1054.8 280.1L1061.2 283.5L1067.4 287.0L1073.6 290.7L1079.8 294.5L1085.8 298.5L1091.7 302.6L1097.5 306.8L1103.3 311.2L1108.9 315.7L1114.4 320.3L1119.8 325.2L1124.9 330.2L1129.9 335.5L1134.4 341.0L1138.2 347.1L1140.9 353.7L1142.9 360.4L1144.9 367.2L1147.2 373.8L1149.4 380.5L1151.7 387.1" fill="none" stroke="#acacac" stroke-width="7.9" filter="url(#b3)"/><path d="M770.5 388.8L774.5 383.7L778.5 378.6L782.6 373.5L786.5 368.4L790.4 363.1L794.5 358.1L798.9 353.3L803.5 348.7L808.4 344.4L813.6 340.4L818.8 336.5L824.0 332.7L829.3 328.9L834.7 325.3L840.1 321.7L845.7 318.3L851.4 315.1L857.1 312.1L863.0 309.3L869.0 306.7L875.0 304.3L881.1 302.0L887.3 299.9L893.5 298.0L899.8 296.3L906.1 294.8L912.5 293.5L918.9 292.4L925.3 291.5L931.8 290.9L938.3 290.3L944.8 289.7L951.2 289.2L957.7 288.9L964.3 288.9L970.8 289.2L977.2 289.7L983.7 290.3L990.2 290.9L996.7 291.5L1003.1 292.4L1009.5 293.5L1015.9 294.8L1022.2 296.3L1028.5 298.0L1034.7 299.9L1040.9 302.0L1047.0 304.3L1053.0 306.7L1059.0 309.3L1064.9 312.1L1070.6 315.1L1076.3 318.3L1081.9 321.7L1087.3 325.3L1092.7 328.9L1098.0 332.7L1103.2 336.5L1108.4 340.4L1113.6 344.4L1118.5 348.7L1123.1 353.3L1127.5 358.1L1131.6 363.1L1135.5 368.4L1139.4 373.5L1143.5 378.6L1147.5 383.7L1151.5 388.8" fill="none" stroke="#3a3a3a" stroke-width="6.2" opacity="0.75" filter="url(#b3)"/><path d="M768.4 385.3L772.5 380.0L776.5 374.8L780.6 369.5L784.6 364.2L788.5 358.8L792.5 353.5L796.9 348.5L801.5 343.7L806.5 339.3L811.6 335.1L816.9 331.0L822.1 326.9L827.5 322.9L832.8 319.0L838.3 315.1L843.8 311.5L849.5 308.0L855.3 304.8L861.2 301.8L867.3 298.9L873.4 296.3L879.5 293.8L885.8 291.5L892.1 289.4L898.5 287.5L904.9 285.8L911.4 284.4L917.9 283.1L924.5 282.2L931.1 281.4L937.8 280.8L944.4 280.2L951.0 279.6L957.7 279.3L964.3 279.3L971.0 279.6L977.6 280.2L984.2 280.8L990.9 281.4L997.5 282.2L1004.1 283.1L1010.6 284.4L1017.1 285.8L1023.5 287.5L1029.9 289.4L1036.2 291.5L1042.5 293.8L1048.6 296.3L1054.7 298.9L1060.8 301.8L1066.7 304.8L1072.5 308.0L1078.2 311.5L1083.7 315.1L1089.2 319.0L1094.5 322.9L1099.9 326.9L1105.1 331.0L1110.4 335.1L1115.5 339.3L1120.5 343.7L1125.1 348.5L1129.5 353.5L1133.5 358.8L1137.4 364.2L1141.4 369.5L1145.5 374.8L1149.5 380.0L1153.6 385.3" fill="none" stroke="#acacac" stroke-width="7.8" filter="url(#b3)"/><path d="M772.0 392.3L776.7 388.6L781.4 384.8L786.1 381.0L790.8 377.2L795.5 373.4L800.1 369.5L804.9 365.8L809.8 362.2L814.9 358.8L820.1 355.6L825.3 352.5L830.5 349.4L835.8 346.5L841.2 343.6L846.6 340.8L852.0 338.2L857.6 335.7L863.2 333.3L868.8 331.1L874.5 329.0L880.3 327.0L886.1 325.1L891.9 323.4L897.8 321.9L903.7 320.5L909.7 319.2L915.6 318.1L921.6 317.2L927.7 316.4L933.7 315.7L939.8 315.1L945.8 314.5L951.9 313.9L958.0 313.7L964.0 313.7L970.1 313.9L976.2 314.5L982.2 315.1L988.3 315.7L994.3 316.4L1000.4 317.2L1006.4 318.1L1012.3 319.2L1018.3 320.5L1024.2 321.9L1030.1 323.4L1035.9 325.1L1041.7 327.0L1047.5 329.0L1053.2 331.1L1058.8 333.3L1064.4 335.7L1070.0 338.2L1075.4 340.8L1080.8 343.6L1086.2 346.5L1091.5 349.4L1096.7 352.5L1101.9 355.6L1107.1 358.8L1112.2 362.2L1117.1 365.8L1121.9 369.5L1126.5 373.4L1131.2 377.2L1135.9 381.0L1140.6 384.8L1145.3 388.6L1150.0 392.3" fill="none" stroke="#3a3a3a" stroke-width="7.9" opacity="0.75" filter="url(#b3)"/><path d="M771.6 391.1L775.9 386.6L780.2 382.2L784.6 377.7L788.9 373.2L793.1 368.6L797.4 364.1L802.0 359.8L806.7 355.7L811.7 351.9L816.8 348.3L822.0 344.8L827.3 341.3L832.6 338.0L838.0 334.7L843.4 331.5L848.9 328.5L854.5 325.7L860.2 323.0L866.0 320.5L871.8 318.2L877.7 316.0L883.6 314.0L889.6 312.1L895.7 310.4L901.8 308.8L907.9 307.5L914.1 306.3L920.3 305.3L926.5 304.5L932.8 303.8L939.0 303.2L945.3 302.7L951.6 302.1L957.9 301.9L964.1 301.9L970.4 302.1L976.7 302.7L983.0 303.2L989.2 303.8L995.5 304.5L1001.7 305.3L1007.9 306.3L1014.1 307.5L1020.2 308.8L1026.3 310.4L1032.4 312.1L1038.4 314.0L1044.3 316.0L1050.2 318.2L1056.0 320.5L1061.8 323.0L1067.5 325.7L1073.1 328.5L1078.6 331.5L1084.0 334.7L1089.4 338.0L1094.7 341.3L1100.0 344.8L1105.2 348.3L1110.3 351.9L1115.3 355.7L1120.0 359.8L1124.6 364.1L1128.9 368.6L1133.1 373.2L1137.4 377.7L1141.8 382.2L1146.1 386.6L1150.4 391.1" fill="none" stroke="#acacac" stroke-width="9.9" filter="url(#b3)"/><path d="M772.2 389.7L773.5 382.3L774.8 375.0L776.1 367.6L777.0 360.2L777.9 352.8L779.8 345.6L783.2 339.0L787.7 333.0L792.7 327.4L797.8 322.0L803.1 316.8L808.8 311.9L814.6 307.3L820.6 302.8L826.7 298.4L832.8 294.1L839.0 290.0L845.2 285.9L851.6 282.0L858.0 278.2L864.5 274.5L871.1 271.0L877.8 267.7L884.6 264.7L891.5 261.9L898.6 259.3L905.7 257.1L912.9 255.1L920.2 253.6L927.6 252.4L935.0 251.5L942.4 250.8L949.8 250.0L957.3 249.6L964.7 249.6L972.2 250.0L979.6 250.8L987.0 251.5L994.4 252.4L1001.8 253.6L1009.1 255.1L1016.3 257.1L1023.4 259.3L1030.5 261.9L1037.4 264.7L1044.2 267.7L1050.9 271.0L1057.5 274.5L1064.0 278.2L1070.4 282.0L1076.8 285.9L1083.0 290.0L1089.2 294.1L1095.3 298.4L1101.4 302.8L1107.4 307.3L1113.2 311.9L1118.9 316.8L1124.2 322.0L1129.3 327.4L1134.3 333.0L1138.8 339.0L1142.2 345.6L1144.1 352.8L1145.0 360.2L1145.9 367.6L1147.2 375.0L1148.5 382.3L1149.8 389.7" fill="none" stroke="#2a2a2a" stroke-width="6.4" filter="url(#b2)"/><path d="M766.8 382.6L770.9 377.2L774.9 371.8L779.0 366.3L783.0 360.9L786.9 355.3L790.9 349.9L795.3 344.7L800.0 339.8L804.9 335.2L810.1 330.9L815.4 326.6L820.7 322.4L826.0 318.2L831.4 314.1L836.8 310.0L842.3 306.1L848.0 302.5L853.9 299.1L859.8 295.8L865.9 292.8L872.1 290.0L878.3 287.4L884.6 284.9L891.0 282.7L897.5 280.6L904.0 278.8L910.6 277.2L917.2 275.9L923.9 274.9L930.6 274.1L937.4 273.4L944.1 272.8L950.9 272.1L957.6 271.8L964.4 271.8L971.1 272.1L977.9 272.8L984.6 273.4L991.4 274.1L998.1 274.9L1004.8 275.9L1011.4 277.2L1018.0 278.8L1024.5 280.6L1031.0 282.7L1037.4 284.9L1043.7 287.4L1049.9 290.0L1056.1 292.8L1062.2 295.8L1068.1 299.1L1074.0 302.5L1079.7 306.1L1085.2 310.0L1090.6 314.1L1096.0 318.2L1101.3 322.4L1106.6 326.6L1111.9 330.9L1117.1 335.2L1122.0 339.8L1126.7 344.7L1131.1 349.9L1135.1 355.3L1139.0 360.9L1143.0 366.3L1147.1 371.8L1151.1 377.2L1155.2 382.6" fill="none" stroke="#2a2a2a" stroke-width="4.0" filter="url(#b2)"/><path d="M771.3 390.2L775.3 385.1L779.3 380.1L783.3 375.1L787.3 370.0L791.2 364.9L795.3 359.9L799.7 355.2L804.3 350.7L809.2 346.5L814.3 342.5L819.5 338.7L824.8 335.0L830.1 331.3L835.4 327.7L840.9 324.2L846.4 321.0L852.1 317.9L857.9 315.0L863.7 312.3L869.7 309.8L875.7 307.4L881.7 305.2L887.8 303.2L894.0 301.4L900.3 299.7L906.6 298.3L912.9 297.0L919.2 296.0L925.6 295.2L932.1 294.5L938.5 294.0L944.9 293.5L951.3 292.9L957.8 292.6L964.2 292.6L970.7 292.9L977.1 293.5L983.5 294.0L989.9 294.5L996.4 295.2L1002.8 296.0L1009.1 297.0L1015.4 298.3L1021.7 299.7L1028.0 301.4L1034.2 303.2L1040.3 305.2L1046.3 307.4L1052.3 309.8L1058.3 312.3L1064.1 315.0L1069.9 317.9L1075.6 321.0L1081.1 324.2L1086.6 327.7L1091.9 331.3L1097.2 335.0L1102.5 338.7L1107.7 342.5L1112.8 346.5L1117.7 350.7L1122.3 355.2L1126.7 359.9L1130.8 364.9L1134.7 370.0L1138.7 375.1L1142.7 380.1L1146.7 385.1L1150.7 390.2" fill="none" stroke="#2a2a2a" stroke-width="4.0" filter="url(#b2)"/><path d="M772.1 392.8L777.0 389.3L781.9 385.8L786.8 382.3L791.6 378.8L796.4 375.2L801.2 371.6L806.1 368.1L811.0 364.7L816.1 361.6L821.3 358.5L826.5 355.5L831.8 352.6L837.1 349.8L842.4 347.1L847.8 344.5L853.3 342.0L858.8 339.6L864.4 337.3L870.0 335.2L875.6 333.2L881.3 331.3L887.0 329.5L892.8 327.9L898.6 326.4L904.5 325.0L910.3 323.8L916.2 322.7L922.2 321.8L928.1 321.0L934.1 320.3L940.1 319.7L946.0 319.1L952.0 318.5L958.0 318.4L964.0 318.4L970.0 318.5L976.0 319.1L981.9 319.7L987.9 320.3L993.9 321.0L999.8 321.8L1005.8 322.7L1011.7 323.8L1017.5 325.0L1023.4 326.4L1029.2 327.9L1035.0 329.5L1040.7 331.3L1046.4 333.2L1052.0 335.2L1057.6 337.3L1063.2 339.6L1068.7 342.0L1074.2 344.5L1079.6 347.1L1084.9 349.8L1090.2 352.6L1095.5 355.5L1100.7 358.5L1105.9 361.6L1111.0 364.7L1115.9 368.1L1120.8 371.6L1125.6 375.2L1130.4 378.8L1135.2 382.3L1140.1 385.8L1145.0 389.3L1149.9 392.8" fill="none" stroke="#2a2a2a" stroke-width="6.4" filter="url(#b2)"/></g><path d="M772.2 389.7L773.5 382.3L774.8 375.0L776.1 367.6L777.0 360.2L777.9 352.8L779.8 345.6L783.2 339.0L787.7 333.0L792.7 327.4L797.8 322.0L803.1 316.8L808.8 311.9L814.6 307.3L820.6 302.8L826.7 298.4L832.8 294.1L839.0 290.0L845.2 285.9L851.6 282.0L858.0 278.2L864.5 274.5L871.1 271.0L877.8 267.7L884.6 264.7L891.5 261.9L898.6 259.3L905.7 257.1L912.9 255.1L920.2 253.6L927.6 252.4L935.0 251.5L942.4 250.8L949.8 250.0L957.3 249.6L964.7 249.6L972.2 250.0L979.6 250.8L987.0 251.5L994.4 252.4L1001.8 253.6L1009.1 255.1L1016.3 257.1L1023.4 259.3L1030.5 261.9L1037.4 264.7L1044.2 267.7L1050.9 271.0L1057.5 274.5L1064.0 278.2L1070.4 282.0L1076.8 285.9L1083.0 290.0L1089.2 294.1L1095.3 298.4L1101.4 302.8L1107.4 307.3L1113.2 311.9L1118.9 316.8L1124.2 322.0L1129.3 327.4L1134.3 333.0L1138.8 339.0L1142.2 345.6L1144.1 352.8L1145.0 360.2L1145.9 367.6L1147.2 375.0L1148.5 382.3L1149.8 389.7" fill="none" stroke="#1c1c1c" stroke-width="1.4"/><path d="M772.1 392.8L777.0 389.3L781.9 385.8L786.8 382.3L791.6 378.8L796.4 375.2L801.2 371.6L806.1 368.1L811.0 364.7L816.1 361.6L821.3 358.5L826.5 355.5L831.8 352.6L837.1 349.8L842.4 347.1L847.8 344.5L853.3 342.0L858.8 339.6L864.4 337.3L870.0 335.2L875.6 333.2L881.3 331.3L887.0 329.5L892.8 327.9L898.6 326.4L904.5 325.0L910.3 323.8L916.2 322.7L922.2 321.8L928.1 321.0L934.1 320.3L940.1 319.7L946.0 319.1L952.0 318.5L958.0 318.4L964.0 318.4L970.0 318.5L976.0 319.1L981.9 319.7L987.9 320.3L993.9 321.0L999.8 321.8L1005.8 322.7L1011.7 323.8L1017.5 325.0L1023.4 326.4L1029.2 327.9L1035.0 329.5L1040.7 331.3L1046.4 333.2L1052.0 335.2L1057.6 337.3L1063.2 339.6L1068.7 342.0L1074.2 344.5L1079.6 347.1L1084.9 349.8L1090.2 352.6L1095.5 355.5L1100.7 358.5L1105.9 361.6L1111.0 364.7L1115.9 368.1L1120.8 371.6L1125.6 375.2L1130.4 378.8L1135.2 382.3L1140.1 385.8L1145.0 389.3L1149.9 392.8" fill="none" stroke="#1c1c1c" stroke-width="1.4"/><g transform="translate(961.0 0) scale(1 1) translate(-961.0 0)"><path d="M710.0 523.0C706.3 519.2 694.7 509.0 688.0 500.0C681.3 491.0 674.1 479.4 670.0 469.0C665.9 458.6 663.7 447.1 663.5 437.8C663.3 428.5 665.8 419.3 669.0 413.0C672.2 406.7 677.7 402.8 683.0 400.0C688.3 397.2 694.3 394.9 701.0 396.0C707.7 397.1 713.2 401.0 723.0 406.7C732.8 412.4 748.3 421.9 760.0 430.0C771.7 438.1 781.9 446.7 793.0 455.0C804.1 463.3 815.5 472.8 826.7 480.0C837.9 487.2 849.0 493.0 860.0 498.0C871.0 503.0 881.9 506.9 893.0 510.0C904.1 513.1 914.9 514.2 926.7 516.7C938.5 519.2 957.8 523.6 964.0 525.0L966 526L710 526Z" fill="url(#lobebg)"/><clipPath id="lcL"><path d="M710.0 523.0C706.3 519.2 694.7 509.0 688.0 500.0C681.3 491.0 674.1 479.4 670.0 469.0C665.9 458.6 663.7 447.1 663.5 437.8C663.3 428.5 665.8 419.3 669.0 413.0C672.2 406.7 677.7 402.8 683.0 400.0C688.3 397.2 694.3 394.9 701.0 396.0C707.7 397.1 713.2 401.0 723.0 406.7C732.8 412.4 748.3 421.9 760.0 430.0C771.7 438.1 781.9 446.7 793.0 455.0C804.1 463.3 815.5 472.8 826.7 480.0C837.9 487.2 849.0 493.0 860.0 498.0C871.0 503.0 881.9 506.9 893.0 510.0C904.1 513.1 914.9 514.2 926.7 516.7C938.5 519.2 957.8 523.6 964.0 525.0L966 526L710 526Z"/></clipPath><g clip-path="url(#lcL)"><path d="M668.0 390V526M673.6 390V526M679.2 390V526M684.8 390V526M690.4 390V526M696.0 390V526M701.6 390V526M707.2 390V526M712.8 390V526M718.4 390V526M724.0 390V526M729.6 390V526M735.2 390V526" stroke="url(#strfade)" stroke-width="2.6" fill="none" filter="url(#b1)"/><ellipse cx="800" cy="530" rx="120" ry="30" fill="#808080" opacity="0.55" filter="url(#b6)"/><path d="M820 503C836 510 852 516 874 517C856 521 836 519 816 512Z" fill="#8a8a8a" filter="url(#b1)"/><g transform="translate(796 495) rotate(17)" filter="url(#b1)"><ellipse rx="24" ry="10" fill="#8e8e8e" stroke="#444" stroke-width="1"/><path d="M-20 0C-8 -5 8 -5 18 0C8 5 -8 5 -20 0Z" fill="#a6a6a6"/><ellipse cx="25" cy="0" rx="6" ry="8" fill="#9a9a9a" stroke="#444" stroke-width="1"/></g><g transform="translate(748 471) rotate(10)" filter="url(#b1)"><circle r="30.4" fill="#5c5c5c" filter="url(#b2)"/><g transform="rotate(0.0)"><path d="M0 0C-3.1 -18.6 7.8 -31.6 19.2 -25.4C31.0 -17.1 21.7 -3.1 0 0Z" fill="url(#pet)" stroke="#5e5e5e" stroke-width="1.1"/></g><g transform="rotate(45.0)"><path d="M0 0C-3.1 -18.6 7.8 -31.6 19.2 -25.4C31.0 -17.1 21.7 -3.1 0 0Z" fill="url(#pet)" stroke="#5e5e5e" stroke-width="1.1"/></g><g transform="rotate(90.0)"><path d="M0 0C-3.1 -18.6 7.8 -31.6 19.2 -25.4C31.0 -17.1 21.7 -3.1 0 0Z" fill="url(#pet)" stroke="#5e5e5e" stroke-width="1.1"/></g><g transform="rotate(135.0)"><path d="M0 0C-3.1 -18.6 7.8 -31.6 19.2 -25.4C31.0 -17.1 21.7 -3.1 0 0Z" fill="url(#pet)" stroke="#5e5e5e" stroke-width="1.1"/></g><g transform="rotate(180.0)"><path d="M0 0C-3.1 -18.6 7.8 -31.6 19.2 -25.4C31.0 -17.1 21.7 -3.1 0 0Z" fill="url(#pet)" stroke="#5e5e5e" stroke-width="1.1"/></g><g transform="rotate(225.0)"><path d="M0 0C-3.1 -18.6 7.8 -31.6 19.2 -25.4C31.0 -17.1 21.7 -3.1 0 0Z" fill="url(#pet)" stroke="#5e5e5e" stroke-width="1.1"/></g><g transform="rotate(270.0)"><path d="M0 0C-3.1 -18.6 7.8 -31.6 19.2 -25.4C31.0 -17.1 21.7 -3.1 0 0Z" fill="url(#pet)" stroke="#5e5e5e" stroke-width="1.1"/></g><g transform="rotate(315.0)"><path d="M0 0C-3.1 -18.6 7.8 -31.6 19.2 -25.4C31.0 -17.1 21.7 -3.1 0 0Z" fill="url(#pet)" stroke="#5e5e5e" stroke-width="1.1"/></g><circle r="8.4" fill="#8a8a8a" stroke="#6a6a6a" stroke-width="1"/><circle r="3.7" fill="#7a7a7a" stroke="#9c9c9c" stroke-width="1"/></g></g><clipPath id="rbLc"><path d="M587.0 523.0L582.4 515.5L577.9 507.9L573.9 500.0L570.7 491.7L568.0 483.3L565.7 474.8L563.8 466.2L562.3 457.4L561.4 448.7L561.1 439.8L561.7 431.0L563.0 422.2L564.7 413.6L566.9 405.0L569.6 396.6L572.7 388.3L576.4 380.3L580.5 372.5L585.1 364.9L590.3 357.8L596.1 351.1L602.6 345.1L609.5 339.5L616.8 334.6L624.5 330.3L632.6 326.7L640.9 323.8L649.4 321.5L658.1 319.8L666.9 318.7L675.7 318.5L684.5 319.1L693.3 320.5L701.8 322.7L710.2 325.4L718.4 328.7L726.3 332.8L733.6 337.8L740.4 343.4L746.7 349.5L752.7 356.1L759.1 362.2L765.9 367.8L773.0 373.1L780.1 378.3L787.2 383.6L794.2 389.0L801.2 394.5L808.0 400.0L814.9 405.6L821.8 411.1L828.7 416.6L835.7 422.1L842.6 427.5L849.7 432.9L856.9 438.0L864.4 442.7L872.1 447.0L880.0 450.9L888.1 454.6L896.2 458.0L904.5 461.1L912.9 463.8L921.4 466.4L929.8 468.9L938.3 471.3L946.9 473.6L955.4 475.8L964.0 478.0L964.0 525.0L957.5 523.5L951.0 522.1L944.4 520.6L937.9 519.1L931.4 517.7L924.9 516.3L918.3 515.1L911.7 514.0L905.1 512.8L898.6 511.4L892.1 509.7L885.7 507.8L879.4 505.7L873.1 503.5L866.9 501.0L860.8 498.3L854.7 495.5L848.7 492.6L842.8 489.5L837.0 486.2L831.2 482.8L825.6 479.2L820.0 475.5L814.6 471.6L809.3 467.5L804.0 463.5L798.7 459.4L793.4 455.3L788.1 451.3L782.8 447.2L777.6 443.1L772.3 439.0L766.9 435.0L761.5 431.1L756.0 427.3L750.4 423.6L744.8 420.0L739.1 416.4L733.5 412.9L727.7 409.5L722.0 406.1L716.2 402.7L710.4 399.4L704.3 396.8L697.7 395.7L691.1 396.6L684.9 399.0L679.1 402.3L673.8 406.5L669.7 411.7L666.9 417.8L665.0 424.2L663.8 430.7L663.5 437.4L663.9 444.1L664.8 450.7L666.2 457.2L668.1 463.6L670.4 469.9L673.1 476.0L676.2 481.9L679.6 487.7L683.3 493.3L687.1 498.8L691.2 504.0L695.7 509.0L700.4 513.7L705.2 518.3L710.0 523.0Z"/></clipPath><path d="M587.0 523.0L582.4 515.5L577.9 507.9L573.9 500.0L570.7 491.7L568.0 483.3L565.7 474.8L563.8 466.2L562.3 457.4L561.4 448.7L561.1 439.8L561.7 431.0L563.0 422.2L564.7 413.6L566.9 405.0L569.6 396.6L572.7 388.3L576.4 380.3L580.5 372.5L585.1 364.9L590.3 357.8L596.1 351.1L602.6 345.1L609.5 339.5L616.8 334.6L624.5 330.3L632.6 326.7L640.9 323.8L649.4 321.5L658.1 319.8L666.9 318.7L675.7 318.5L684.5 319.1L693.3 320.5L701.8 322.7L710.2 325.4L718.4 328.7L726.3 332.8L733.6 337.8L740.4 343.4L746.7 349.5L752.7 356.1L759.1 362.2L765.9 367.8L773.0 373.1L780.1 378.3L787.2 383.6L794.2 389.0L801.2 394.5L808.0 400.0L814.9 405.6L821.8 411.1L828.7 416.6L835.7 422.1L842.6 427.5L849.7 432.9L856.9 438.0L864.4 442.7L872.1 447.0L880.0 450.9L888.1 454.6L896.2 458.0L904.5 461.1L912.9 463.8L921.4 466.4L929.8 468.9L938.3 471.3L946.9 473.6L955.4 475.8L964.0 478.0L964.0 525.0L957.5 523.5L951.0 522.1L944.4 520.6L937.9 519.1L931.4 517.7L924.9 516.3L918.3 515.1L911.7 514.0L905.1 512.8L898.6 511.4L892.1 509.7L885.7 507.8L879.4 505.7L873.1 503.5L866.9 501.0L860.8 498.3L854.7 495.5L848.7 492.6L842.8 489.5L837.0 486.2L831.2 482.8L825.6 479.2L820.0 475.5L814.6 471.6L809.3 467.5L804.0 463.5L798.7 459.4L793.4 455.3L788.1 451.3L782.8 447.2L777.6 443.1L772.3 439.0L766.9 435.0L761.5 431.1L756.0 427.3L750.4 423.6L744.8 420.0L739.1 416.4L733.5 412.9L727.7 409.5L722.0 406.1L716.2 402.7L710.4 399.4L704.3 396.8L697.7 395.7L691.1 396.6L684.9 399.0L679.1 402.3L673.8 406.5L669.7 411.7L666.9 417.8L665.0 424.2L663.8 430.7L663.5 437.4L663.9 444.1L664.8 450.7L666.2 457.2L668.1 463.6L670.4 469.9L673.1 476.0L676.2 481.9L679.6 487.7L683.3 493.3L687.1 498.8L691.2 504.0L695.7 509.0L700.4 513.7L705.2 518.3L710.0 523.0Z" fill="#929292"/><g clip-path="url(#rbLc)"><path d="M618.6 523.0L614.6 516.0L610.6 508.9L606.7 501.8L603.3 494.5L600.4 486.9L598.2 479.1L596.5 471.2L595.4 463.2L594.7 455.1L594.6 447.0L594.9 439.0L595.8 430.9L597.2 422.9L599.2 415.1L601.7 407.4L604.6 399.8L607.9 392.5L611.8 385.4L616.2 378.6L621.2 372.2L626.8 366.4L632.8 361.0L639.3 356.1L646.2 351.9L653.5 348.4L661.0 345.5L668.8 343.4L676.8 341.9L684.8 341.1L692.9 341.0L700.9 341.8L708.8 343.4L716.5 345.9L724.0 349.0L731.2 352.6L738.1 356.8L744.6 361.6L750.7 366.8L756.9 372.1L762.9 377.6L768.7 383.1L774.6 388.7L780.6 394.1L786.7 399.4L792.9 404.6L799.2 409.7L805.6 414.7L811.9 419.8L818.3 424.8L824.6 429.8L831.0 434.8L837.3 439.8L843.7 444.8L850.1 449.7L856.8 454.3L863.7 458.5L870.9 462.3L878.2 465.7L885.6 468.9L893.2 471.7L900.9 474.1L908.8 476.1L916.6 478.0L924.5 479.7L932.4 481.6L940.3 483.4L948.2 485.2L956.1 486.9L964.0 488.7" fill="none" stroke="#3a3a3a" stroke-width="14.0" opacity="0.75" filter="url(#b3)"/><path d="M600.9 523.0L596.5 515.7L592.2 508.3L588.3 500.8L585.0 492.9L582.3 484.9L580.0 476.7L578.1 468.4L576.8 460.0L576.0 451.5L575.8 443.0L576.3 434.5L577.4 426.1L579.0 417.7L581.1 409.5L583.7 401.3L586.7 393.4L590.2 385.6L594.2 378.1L598.8 370.9L603.9 364.1L609.6 357.8L615.8 352.1L622.6 346.8L629.7 342.2L637.2 338.2L645.1 335.0L653.2 332.4L661.4 330.5L669.8 329.1L678.3 328.5L686.8 328.7L695.2 329.8L703.5 331.6L711.6 334.2L719.4 337.3L727.1 341.1L734.3 345.4L741.1 350.5L747.6 356.0L753.8 361.8L759.7 367.9L765.9 373.8L772.4 379.3L779.0 384.6L785.7 389.9L792.5 395.0L799.2 400.3L805.9 405.6L812.5 410.9L819.2 416.2L825.8 421.5L832.5 426.8L839.2 432.1L845.9 437.3L852.8 442.3L859.9 447.0L867.2 451.3L874.8 455.2L882.5 458.8L890.3 462.1L898.3 465.1L906.4 467.7L914.5 470.0L922.7 472.3L931.0 474.5L939.2 476.6L947.5 478.7L955.7 480.7L964.0 482.7" fill="none" stroke="#b6b6b6" stroke-width="17.5" filter="url(#b3)"/><path d="M660.4 523.0L655.7 517.2L651.1 511.5L646.5 505.7L642.1 499.7L638.0 493.6L634.4 487.1L631.8 480.2L629.8 473.1L628.6 465.8L627.8 458.4L627.3 451.0L627.3 443.6L627.9 436.2L629.0 428.8L630.7 421.6L632.9 414.5L635.5 407.6L638.7 400.9L642.5 394.5L647.0 388.6L652.2 383.3L657.9 378.6L664.1 374.5L670.7 371.1L677.6 368.4L684.8 366.6L692.2 366.0L699.5 366.4L706.8 367.6L713.9 369.6L720.7 372.3L727.3 375.6L733.5 379.6L739.4 384.1L745.1 388.8L750.7 393.6L756.4 398.4L762.1 403.1L768.0 407.7L773.8 412.3L779.6 416.9L785.5 421.4L791.4 426.0L797.2 430.5L803.1 435.1L808.9 439.6L814.9 444.1L820.8 448.5L826.9 452.8L832.9 457.1L839.0 461.4L845.2 465.5L851.4 469.6L857.8 473.4L864.3 476.9L871.0 480.1L877.8 483.0L884.7 485.7L891.7 488.2L898.8 490.4L906.0 492.1L913.3 493.6L920.5 495.2L927.8 496.8L935.0 498.4L942.3 500.1L949.5 501.7L956.8 503.3L964.0 504.9" fill="none" stroke="#3a3a3a" stroke-width="12.0" opacity="0.75" filter="url(#b3)"/><path d="M640.8 523.0L636.6 516.6L632.4 510.2L628.2 503.7L624.3 497.1L620.9 490.3L618.1 483.2L616.0 475.8L614.6 468.2L613.7 460.6L613.3 452.9L613.2 445.2L613.7 437.5L614.7 429.9L616.3 422.4L618.4 415.0L620.9 407.7L623.9 400.6L627.4 393.8L631.5 387.2L636.3 381.2L641.7 375.7L647.6 370.7L653.9 366.2L660.6 362.4L667.6 359.4L675.0 357.1L682.5 355.7L690.1 355.2L697.8 355.4L705.3 356.3L712.7 358.0L720.0 360.6L726.9 363.8L733.5 367.6L739.9 371.8L746.1 376.4L752.0 381.3L757.9 386.3L763.8 391.3L769.6 396.3L775.5 401.3L781.3 406.3L787.1 411.3L793.0 416.3L799.0 421.2L805.0 426.0L811.0 430.8L817.1 435.5L823.3 440.1L829.5 444.7L835.6 449.4L841.8 454.0L848.0 458.5L854.4 462.8L861.0 466.8L867.7 470.5L874.7 473.8L881.8 476.8L889.0 479.6L896.3 482.0L903.7 484.0L911.3 485.7L918.8 487.3L926.3 488.9L933.9 490.6L941.4 492.2L948.9 493.9L956.5 495.5L964.0 497.1" fill="none" stroke="#b6b6b6" stroke-width="15.0" filter="url(#b3)"/><path d="M702.4 523.0L697.7 518.2L692.8 513.4L688.1 508.5L683.6 503.4L679.4 498.1L675.6 492.4L672.1 486.6L669.0 480.7L666.2 474.5L663.7 468.2L661.7 461.8L660.2 455.2L659.1 448.5L658.5 441.8L658.5 435.0L659.1 428.3L660.5 421.7L662.6 415.2L665.6 409.1L669.8 403.8L675.0 399.4L680.8 395.9L687.0 393.2L693.5 391.9L700.2 392.3L706.5 394.2L712.6 396.8L718.6 399.7L724.6 402.8L730.5 406.1L736.4 409.5L742.2 413.1L747.8 416.8L753.4 420.7L758.9 424.6L764.3 428.7L769.7 432.9L775.1 437.0L780.4 441.2L785.8 445.4L791.2 449.5L796.6 453.6L802.0 457.7L807.4 461.9L812.8 466.0L818.3 470.0L823.9 473.9L829.6 477.6L835.4 481.1L841.3 484.5L847.2 487.8L853.2 490.9L859.3 493.9L865.5 496.8L871.8 499.4L878.1 501.8L884.5 504.0L891.0 506.1L897.5 507.9L904.2 509.3L910.8 510.6L917.5 511.8L924.2 513.1L930.8 514.5L937.5 516.0L944.1 517.5L950.7 518.9L957.4 520.4L964.0 521.9" fill="none" stroke="#3a3a3a" stroke-width="12.7" opacity="0.75" filter="url(#b3)"/><path d="M683.1 523.0L678.3 517.8L673.5 512.6L668.8 507.3L664.2 501.9L659.9 496.3L656.1 490.3L652.9 484.0L650.4 477.5L648.3 470.7L646.8 463.9L645.5 457.0L644.8 450.0L644.5 443.0L644.8 436.0L645.6 429.0L647.0 422.1L649.0 415.3L651.7 408.7L655.0 402.5L659.3 396.9L664.5 392.1L670.2 387.9L676.4 384.5L682.9 382.1L689.7 380.9L696.5 380.8L703.2 381.8L709.9 383.5L716.6 385.8L723.1 388.5L729.4 391.7L735.5 395.4L741.3 399.4L746.8 403.8L752.3 408.3L757.7 412.8L763.2 417.3L768.8 421.7L774.4 426.0L780.0 430.3L785.6 434.6L791.3 438.9L797.0 443.1L802.6 447.4L808.3 451.7L813.9 455.9L819.7 460.1L825.5 464.1L831.4 468.0L837.4 471.9L843.4 475.6L849.4 479.2L855.6 482.7L861.9 485.9L868.3 489.0L874.8 491.7L881.4 494.3L888.1 496.6L894.9 498.7L901.7 500.6L908.6 502.0L915.6 503.3L922.5 504.8L929.4 506.3L936.4 507.9L943.3 509.4L950.2 511.0L957.1 512.6L964.0 514.1" fill="none" stroke="#b6b6b6" stroke-width="15.8" filter="url(#b3)"/><path d="M587.0 523.0L582.4 515.5L577.9 507.9L573.9 500.0L570.7 491.7L568.0 483.3L565.7 474.8L563.8 466.2L562.3 457.4L561.4 448.7L561.1 439.8L561.7 431.0L563.0 422.2L564.7 413.6L566.9 405.0L569.6 396.6L572.7 388.3L576.4 380.3L580.5 372.5L585.1 364.9L590.3 357.8L596.1 351.1L602.6 345.1L609.5 339.5L616.8 334.6L624.5 330.3L632.6 326.7L640.9 323.8L649.4 321.5L658.1 319.8L666.9 318.7L675.7 318.5L684.5 319.1L693.3 320.5L701.8 322.7L710.2 325.4L718.4 328.7L726.3 332.8L733.6 337.8L740.4 343.4L746.7 349.5L752.7 356.1L759.1 362.2L765.9 367.8L773.0 373.1L780.1 378.3L787.2 383.6L794.2 389.0L801.2 394.5L808.0 400.0L814.9 405.6L821.8 411.1L828.7 416.6L835.7 422.1L842.6 427.5L849.7 432.9L856.9 438.0L864.4 442.7L872.1 447.0L880.0 450.9L888.1 454.6L896.2 458.0L904.5 461.1L912.9 463.8L921.4 466.4L929.8 468.9L938.3 471.3L946.9 473.6L955.4 475.8L964.0 478.0" fill="none" stroke="#222222" stroke-width="7.2" filter="url(#b2)"/><path d="M625.5 523.0L621.6 516.1L617.7 509.2L614.0 502.2L610.5 495.1L607.6 487.7L605.3 480.1L603.7 472.3L602.6 464.5L602.0 456.6L601.9 448.6L602.2 440.7L603.0 432.8L604.3 425.0L606.3 417.3L608.7 409.8L611.6 402.4L614.9 395.2L618.6 388.2L623.0 381.6L628.0 375.4L633.5 369.7L639.5 364.5L645.8 359.8L652.6 355.7L659.8 352.3L667.3 349.7L675.0 347.7L682.8 346.4L690.7 345.8L698.6 345.9L706.5 346.9L714.2 348.8L721.6 351.4L728.9 354.7L735.8 358.5L742.4 362.9L748.6 367.9L754.5 373.2L760.5 378.4L766.4 383.7L772.2 389.1L778.0 394.5L783.9 399.9L789.7 405.2L795.8 410.3L801.9 415.4L808.0 420.4L814.3 425.3L820.5 430.2L826.8 435.1L833.0 440.0L839.2 444.9L845.4 449.8L851.8 454.6L858.4 459.0L865.2 463.0L872.3 466.6L879.5 469.9L886.9 472.8L894.4 475.4L902.0 477.7L909.7 479.5L917.5 481.1L925.2 482.7L933.0 484.4L940.7 486.1L948.5 487.7L956.2 489.4L964.0 491.0" fill="none" stroke="#222222" stroke-width="4.5" filter="url(#b2)"/><path d="M668.0 523.0L663.2 517.5L658.4 512.0L653.6 506.4L649.0 500.8L644.6 494.9L640.8 488.7L637.9 481.9L635.8 475.0L634.4 467.8L633.5 460.5L632.8 453.2L632.7 445.9L633.1 438.6L634.0 431.4L635.5 424.2L637.6 417.2L640.1 410.3L643.1 403.7L646.7 397.3L651.2 391.5L656.3 386.3L662.0 381.7L668.1 377.7L674.6 374.5L681.5 371.9L688.6 370.4L695.9 370.0L703.2 370.8L710.3 372.4L717.2 374.8L723.9 377.9L730.2 381.5L736.1 385.8L741.7 390.5L747.1 395.4L752.5 400.4L758.1 405.1L763.8 409.7L769.6 414.1L775.4 418.6L781.3 422.9L787.1 427.3L793.0 431.7L798.8 436.1L804.7 440.5L810.5 444.9L816.4 449.3L822.3 453.6L828.3 457.8L834.3 461.9L840.4 466.0L846.5 470.0L852.7 473.9L859.1 477.5L865.6 480.8L872.2 483.8L879.0 486.6L885.8 489.2L892.7 491.6L899.8 493.7L906.9 495.3L914.1 496.7L921.2 498.3L928.3 499.9L935.5 501.5L942.6 503.1L949.7 504.8L956.9 506.4L964.0 508.0" fill="none" stroke="#222222" stroke-width="4.5" filter="url(#b2)"/><path d="M710.0 523.0L705.2 518.3L700.4 513.7L695.7 509.0L691.2 504.0L687.1 498.8L683.3 493.3L679.6 487.7L676.2 481.9L673.1 476.0L670.4 469.9L668.1 463.6L666.2 457.2L664.8 450.7L663.9 444.1L663.5 437.4L663.8 430.7L665.0 424.2L666.9 417.8L669.7 411.7L673.8 406.5L679.1 402.3L684.9 399.0L691.1 396.6L697.7 395.7L704.3 396.8L710.4 399.4L716.2 402.7L722.0 406.1L727.7 409.5L733.5 412.9L739.1 416.4L744.8 420.0L750.4 423.6L756.0 427.3L761.5 431.1L766.9 435.0L772.3 439.0L777.6 443.1L782.8 447.2L788.1 451.3L793.4 455.3L798.7 459.4L804.0 463.5L809.3 467.5L814.6 471.6L820.0 475.5L825.6 479.2L831.2 482.8L837.0 486.2L842.8 489.5L848.7 492.6L854.7 495.5L860.8 498.3L866.9 501.0L873.1 503.5L879.4 505.7L885.7 507.8L892.1 509.7L898.6 511.4L905.1 512.8L911.7 514.0L918.3 515.1L924.9 516.3L931.4 517.7L937.9 519.1L944.4 520.6L951.0 522.1L957.5 523.5L964.0 525.0" fill="none" stroke="#222222" stroke-width="7.2" filter="url(#b2)"/></g><path d="M587.0 523.0L582.4 515.5L577.9 507.9L573.9 500.0L570.7 491.7L568.0 483.3L565.7 474.8L563.8 466.2L562.3 457.4L561.4 448.7L561.1 439.8L561.7 431.0L563.0 422.2L564.7 413.6L566.9 405.0L569.6 396.6L572.7 388.3L576.4 380.3L580.5 372.5L585.1 364.9L590.3 357.8L596.1 351.1L602.6 345.1L609.5 339.5L616.8 334.6L624.5 330.3L632.6 326.7L640.9 323.8L649.4 321.5L658.1 319.8L666.9 318.7L675.7 318.5L684.5 319.1L693.3 320.5L701.8 322.7L710.2 325.4L718.4 328.7L726.3 332.8L733.6 337.8L740.4 343.4L746.7 349.5L752.7 356.1L759.1 362.2L765.9 367.8L773.0 373.1L780.1 378.3L787.2 383.6L794.2 389.0L801.2 394.5L808.0 400.0L814.9 405.6L821.8 411.1L828.7 416.6L835.7 422.1L842.6 427.5L849.7 432.9L856.9 438.0L864.4 442.7L872.1 447.0L880.0 450.9L888.1 454.6L896.2 458.0L904.5 461.1L912.9 463.8L921.4 466.4L929.8 468.9L938.3 471.3L946.9 473.6L955.4 475.8L964.0 478.0" fill="none" stroke="#1c1c1c" stroke-width="1.4"/><path d="M710.0 523.0L705.2 518.3L700.4 513.7L695.7 509.0L691.2 504.0L687.1 498.8L683.3 493.3L679.6 487.7L676.2 481.9L673.1 476.0L670.4 469.9L668.1 463.6L666.2 457.2L664.8 450.7L663.9 444.1L663.5 437.4L663.8 430.7L665.0 424.2L666.9 417.8L669.7 411.7L673.8 406.5L679.1 402.3L684.9 399.0L691.1 396.6L697.7 395.7L704.3 396.8L710.4 399.4L716.2 402.7L722.0 406.1L727.7 409.5L733.5 412.9L739.1 416.4L744.8 420.0L750.4 423.6L756.0 427.3L761.5 431.1L766.9 435.0L772.3 439.0L777.6 443.1L782.8 447.2L788.1 451.3L793.4 455.3L798.7 459.4L804.0 463.5L809.3 467.5L814.6 471.6L820.0 475.5L825.6 479.2L831.2 482.8L837.0 486.2L842.8 489.5L848.7 492.6L854.7 495.5L860.8 498.3L866.9 501.0L873.1 503.5L879.4 505.7L885.7 507.8L892.1 509.7L898.6 511.4L905.1 512.8L911.7 514.0L918.3 515.1L924.9 516.3L931.4 517.7L937.9 519.1L944.4 520.6L951.0 522.1L957.5 523.5L964.0 525.0" fill="none" stroke="#1c1c1c" stroke-width="1.4"/><path d="M710 521C695 506 679 486 670 466M669 412C675 401 688 397 700 397C712 398 719 402 725 407" fill="none" stroke="#f4f470" stroke-width="1.7" stroke-dasharray="6 2.5"/></g><g transform="translate(961.0 0) scale(-1 1) translate(-961.0 0)"><path d="M710.0 523.0C706.3 519.2 694.7 509.0 688.0 500.0C681.3 491.0 674.1 479.4 670.0 469.0C665.9 458.6 663.7 447.1 663.5 437.8C663.3 428.5 665.8 419.3 669.0 413.0C672.2 406.7 677.7 402.8 683.0 400.0C688.3 397.2 694.3 394.9 701.0 396.0C707.7 397.1 713.2 401.0 723.0 406.7C732.8 412.4 748.3 421.9 760.0 430.0C771.7 438.1 781.9 446.7 793.0 455.0C804.1 463.3 815.5 472.8 826.7 480.0C837.9 487.2 849.0 493.0 860.0 498.0C871.0 503.0 881.9 506.9 893.0 510.0C904.1 513.1 914.9 514.2 926.7 516.7C938.5 519.2 957.8 523.6 964.0 525.0L966 526L710 526Z" fill="url(#lobebg)"/><clipPath id="lcR"><path d="M710.0 523.0C706.3 519.2 694.7 509.0 688.0 500.0C681.3 491.0 674.1 479.4 670.0 469.0C665.9 458.6 663.7 447.1 663.5 437.8C663.3 428.5 665.8 419.3 669.0 413.0C672.2 406.7 677.7 402.8 683.0 400.0C688.3 397.2 694.3 394.9 701.0 396.0C707.7 397.1 713.2 401.0 723.0 406.7C732.8 412.4 748.3 421.9 760.0 430.0C771.7 438.1 781.9 446.7 793.0 455.0C804.1 463.3 815.5 472.8 826.7 480.0C837.9 487.2 849.0 493.0 860.0 498.0C871.0 503.0 881.9 506.9 893.0 510.0C904.1 513.1 914.9 514.2 926.7 516.7C938.5 519.2 957.8 523.6 964.0 525.0L966 526L710 526Z"/></clipPath><g clip-path="url(#lcR)"><path d="M668.0 390V526M673.6 390V526M679.2 390V526M684.8 390V526M690.4 390V526M696.0 390V526M701.6 390V526M707.2 390V526M712.8 390V526M718.4 390V526M724.0 390V526M729.6 390V526M735.2 390V526" stroke="url(#strfade)" stroke-width="2.6" fill="none" filter="url(#b1)"/><ellipse cx="800" cy="530" rx="120" ry="30" fill="#808080" opacity="0.55" filter="url(#b6)"/><path d="M820 503C836 510 852 516 874 517C856 521 836 519 816 512Z" fill="#8a8a8a" filter="url(#b1)"/><g transform="translate(796 495) rotate(17)" filter="url(#b1)"><ellipse rx="24" ry="10" fill="#8e8e8e" stroke="#444" stroke-width="1"/><path d="M-20 0C-8 -5 8 -5 18 0C8 5 -8 5 -20 0Z" fill="#a6a6a6"/><ellipse cx="25" cy="0" rx="6" ry="8" fill="#9a9a9a" stroke="#444" stroke-width="1"/></g><g transform="translate(748 471) rotate(10)" filter="url(#b1)"><circle r="30.4" fill="#5c5c5c" filter="url(#b2)"/><g transform="rotate(0.0)"><path d="M0 0C-3.1 -18.6 7.8 -31.6 19.2 -25.4C31.0 -17.1 21.7 -3.1 0 0Z" fill="url(#pet)" stroke="#5e5e5e" stroke-width="1.1"/></g><g transform="rotate(45.0)"><path d="M0 0C-3.1 -18.6 7.8 -31.6 19.2 -25.4C31.0 -17.1 21.7 -3.1 0 0Z" fill="url(#pet)" stroke="#5e5e5e" stroke-width="1.1"/></g><g transform="rotate(90.0)"><path d="M0 0C-3.1 -18.6 7.8 -31.6 19.2 -25.4C31.0 -17.1 21.7 -3.1 0 0Z" fill="url(#pet)" stroke="#5e5e5e" stroke-width="1.1"/></g><g transform="rotate(135.0)"><path d="M0 0C-3.1 -18.6 7.8 -31.6 19.2 -25.4C31.0 -17.1 21.7 -3.1 0 0Z" fill="url(#pet)" stroke="#5e5e5e" stroke-width="1.1"/></g><g transform="rotate(180.0)"><path d="M0 0C-3.1 -18.6 7.8 -31.6 19.2 -25.4C31.0 -17.1 21.7 -3.1 0 0Z" fill="url(#pet)" stroke="#5e5e5e" stroke-width="1.1"/></g><g transform="rotate(225.0)"><path d="M0 0C-3.1 -18.6 7.8 -31.6 19.2 -25.4C31.0 -17.1 21.7 -3.1 0 0Z" fill="url(#pet)" stroke="#5e5e5e" stroke-width="1.1"/></g><g transform="rotate(270.0)"><path d="M0 0C-3.1 -18.6 7.8 -31.6 19.2 -25.4C31.0 -17.1 21.7 -3.1 0 0Z" fill="url(#pet)" stroke="#5e5e5e" stroke-width="1.1"/></g><g transform="rotate(315.0)"><path d="M0 0C-3.1 -18.6 7.8 -31.6 19.2 -25.4C31.0 -17.1 21.7 -3.1 0 0Z" fill="url(#pet)" stroke="#5e5e5e" stroke-width="1.1"/></g><circle r="8.4" fill="#8a8a8a" stroke="#6a6a6a" stroke-width="1"/><circle r="3.7" fill="#7a7a7a" stroke="#9c9c9c" stroke-width="1"/></g></g><clipPath id="rbRc"><path d="M587.0 523.0L582.4 515.5L577.9 507.9L573.9 500.0L570.7 491.7L568.0 483.3L565.7 474.8L563.8 466.2L562.3 457.4L561.4 448.7L561.1 439.8L561.7 431.0L563.0 422.2L564.7 413.6L566.9 405.0L569.6 396.6L572.7 388.3L576.4 380.3L580.5 372.5L585.1 364.9L590.3 357.8L596.1 351.1L602.6 345.1L609.5 339.5L616.8 334.6L624.5 330.3L632.6 326.7L640.9 323.8L649.4 321.5L658.1 319.8L666.9 318.7L675.7 318.5L684.5 319.1L693.3 320.5L701.8 322.7L710.2 325.4L718.4 328.7L726.3 332.8L733.6 337.8L740.4 343.4L746.7 349.5L752.7 356.1L759.1 362.2L765.9 367.8L773.0 373.1L780.1 378.3L787.2 383.6L794.2 389.0L801.2 394.5L808.0 400.0L814.9 405.6L821.8 411.1L828.7 416.6L835.7 422.1L842.6 427.5L849.7 432.9L856.9 438.0L864.4 442.7L872.1 447.0L880.0 450.9L888.1 454.6L896.2 458.0L904.5 461.1L912.9 463.8L921.4 466.4L929.8 468.9L938.3 471.3L946.9 473.6L955.4 475.8L964.0 478.0L964.0 525.0L957.5 523.5L951.0 522.1L944.4 520.6L937.9 519.1L931.4 517.7L924.9 516.3L918.3 515.1L911.7 514.0L905.1 512.8L898.6 511.4L892.1 509.7L885.7 507.8L879.4 505.7L873.1 503.5L866.9 501.0L860.8 498.3L854.7 495.5L848.7 492.6L842.8 489.5L837.0 486.2L831.2 482.8L825.6 479.2L820.0 475.5L814.6 471.6L809.3 467.5L804.0 463.5L798.7 459.4L793.4 455.3L788.1 451.3L782.8 447.2L777.6 443.1L772.3 439.0L766.9 435.0L761.5 431.1L756.0 427.3L750.4 423.6L744.8 420.0L739.1 416.4L733.5 412.9L727.7 409.5L722.0 406.1L716.2 402.7L710.4 399.4L704.3 396.8L697.7 395.7L691.1 396.6L684.9 399.0L679.1 402.3L673.8 406.5L669.7 411.7L666.9 417.8L665.0 424.2L663.8 430.7L663.5 437.4L663.9 444.1L664.8 450.7L666.2 457.2L668.1 463.6L670.4 469.9L673.1 476.0L676.2 481.9L679.6 487.7L683.3 493.3L687.1 498.8L691.2 504.0L695.7 509.0L700.4 513.7L705.2 518.3L710.0 523.0Z"/></clipPath><path d="M587.0 523.0L582.4 515.5L577.9 507.9L573.9 500.0L570.7 491.7L568.0 483.3L565.7 474.8L563.8 466.2L562.3 457.4L561.4 448.7L561.1 439.8L561.7 431.0L563.0 422.2L564.7 413.6L566.9 405.0L569.6 396.6L572.7 388.3L576.4 380.3L580.5 372.5L585.1 364.9L590.3 357.8L596.1 351.1L602.6 345.1L609.5 339.5L616.8 334.6L624.5 330.3L632.6 326.7L640.9 323.8L649.4 321.5L658.1 319.8L666.9 318.7L675.7 318.5L684.5 319.1L693.3 320.5L701.8 322.7L710.2 325.4L718.4 328.7L726.3 332.8L733.6 337.8L740.4 343.4L746.7 349.5L752.7 356.1L759.1 362.2L765.9 367.8L773.0 373.1L780.1 378.3L787.2 383.6L794.2 389.0L801.2 394.5L808.0 400.0L814.9 405.6L821.8 411.1L828.7 416.6L835.7 422.1L842.6 427.5L849.7 432.9L856.9 438.0L864.4 442.7L872.1 447.0L880.0 450.9L888.1 454.6L896.2 458.0L904.5 461.1L912.9 463.8L921.4 466.4L929.8 468.9L938.3 471.3L946.9 473.6L955.4 475.8L964.0 478.0L964.0 525.0L957.5 523.5L951.0 522.1L944.4 520.6L937.9 519.1L931.4 517.7L924.9 516.3L918.3 515.1L911.7 514.0L905.1 512.8L898.6 511.4L892.1 509.7L885.7 507.8L879.4 505.7L873.1 503.5L866.9 501.0L860.8 498.3L854.7 495.5L848.7 492.6L842.8 489.5L837.0 486.2L831.2 482.8L825.6 479.2L820.0 475.5L814.6 471.6L809.3 467.5L804.0 463.5L798.7 459.4L793.4 455.3L788.1 451.3L782.8 447.2L777.6 443.1L772.3 439.0L766.9 435.0L761.5 431.1L756.0 427.3L750.4 423.6L744.8 420.0L739.1 416.4L733.5 412.9L727.7 409.5L722.0 406.1L716.2 402.7L710.4 399.4L704.3 396.8L697.7 395.7L691.1 396.6L684.9 399.0L679.1 402.3L673.8 406.5L669.7 411.7L666.9 417.8L665.0 424.2L663.8 430.7L663.5 437.4L663.9 444.1L664.8 450.7L666.2 457.2L668.1 463.6L670.4 469.9L673.1 476.0L676.2 481.9L679.6 487.7L683.3 493.3L687.1 498.8L691.2 504.0L695.7 509.0L700.4 513.7L705.2 518.3L710.0 523.0Z" fill="#929292"/><g clip-path="url(#rbRc)"><path d="M618.6 523.0L614.6 516.0L610.6 508.9L606.7 501.8L603.3 494.5L600.4 486.9L598.2 479.1L596.5 471.2L595.4 463.2L594.7 455.1L594.6 447.0L594.9 439.0L595.8 430.9L597.2 422.9L599.2 415.1L601.7 407.4L604.6 399.8L607.9 392.5L611.8 385.4L616.2 378.6L621.2 372.2L626.8 366.4L632.8 361.0L639.3 356.1L646.2 351.9L653.5 348.4L661.0 345.5L668.8 343.4L676.8 341.9L684.8 341.1L692.9 341.0L700.9 341.8L708.8 343.4L716.5 345.9L724.0 349.0L731.2 352.6L738.1 356.8L744.6 361.6L750.7 366.8L756.9 372.1L762.9 377.6L768.7 383.1L774.6 388.7L780.6 394.1L786.7 399.4L792.9 404.6L799.2 409.7L805.6 414.7L811.9 419.8L818.3 424.8L824.6 429.8L831.0 434.8L837.3 439.8L843.7 444.8L850.1 449.7L856.8 454.3L863.7 458.5L870.9 462.3L878.2 465.7L885.6 468.9L893.2 471.7L900.9 474.1L908.8 476.1L916.6 478.0L924.5 479.7L932.4 481.6L940.3 483.4L948.2 485.2L956.1 486.9L964.0 488.7" fill="none" stroke="#3a3a3a" stroke-width="14.0" opacity="0.75" filter="url(#b3)"/><path d="M600.9 523.0L596.5 515.7L592.2 508.3L588.3 500.8L585.0 492.9L582.3 484.9L580.0 476.7L578.1 468.4L576.8 460.0L576.0 451.5L575.8 443.0L576.3 434.5L577.4 426.1L579.0 417.7L581.1 409.5L583.7 401.3L586.7 393.4L590.2 385.6L594.2 378.1L598.8 370.9L603.9 364.1L609.6 357.8L615.8 352.1L622.6 346.8L629.7 342.2L637.2 338.2L645.1 335.0L653.2 332.4L661.4 330.5L669.8 329.1L678.3 328.5L686.8 328.7L695.2 329.8L703.5 331.6L711.6 334.2L719.4 337.3L727.1 341.1L734.3 345.4L741.1 350.5L747.6 356.0L753.8 361.8L759.7 367.9L765.9 373.8L772.4 379.3L779.0 384.6L785.7 389.9L792.5 395.0L799.2 400.3L805.9 405.6L812.5 410.9L819.2 416.2L825.8 421.5L832.5 426.8L839.2 432.1L845.9 437.3L852.8 442.3L859.9 447.0L867.2 451.3L874.8 455.2L882.5 458.8L890.3 462.1L898.3 465.1L906.4 467.7L914.5 470.0L922.7 472.3L931.0 474.5L939.2 476.6L947.5 478.7L955.7 480.7L964.0 482.7" fill="none" stroke="#b6b6b6" stroke-width="17.5" filter="url(#b3)"/><path d="M660.4 523.0L655.7 517.2L651.1 511.5L646.5 505.7L642.1 499.7L638.0 493.6L634.4 487.1L631.8 480.2L629.8 473.1L628.6 465.8L627.8 458.4L627.3 451.0L627.3 443.6L627.9 436.2L629.0 428.8L630.7 421.6L632.9 414.5L635.5 407.6L638.7 400.9L642.5 394.5L647.0 388.6L652.2 383.3L657.9 378.6L664.1 374.5L670.7 371.1L677.6 368.4L684.8 366.6L692.2 366.0L699.5 366.4L706.8 367.6L713.9 369.6L720.7 372.3L727.3 375.6L733.5 379.6L739.4 384.1L745.1 388.8L750.7 393.6L756.4 398.4L762.1 403.1L768.0 407.7L773.8 412.3L779.6 416.9L785.5 421.4L791.4 426.0L797.2 430.5L803.1 435.1L808.9 439.6L814.9 444.1L820.8 448.5L826.9 452.8L832.9 457.1L839.0 461.4L845.2 465.5L851.4 469.6L857.8 473.4L864.3 476.9L871.0 480.1L877.8 483.0L884.7 485.7L891.7 488.2L898.8 490.4L906.0 492.1L913.3 493.6L920.5 495.2L927.8 496.8L935.0 498.4L942.3 500.1L949.5 501.7L956.8 503.3L964.0 504.9" fill="none" stroke="#3a3a3a" stroke-width="12.0" opacity="0.75" filter="url(#b3)"/><path d="M640.8 523.0L636.6 516.6L632.4 510.2L628.2 503.7L624.3 497.1L620.9 490.3L618.1 483.2L616.0 475.8L614.6 468.2L613.7 460.6L613.3 452.9L613.2 445.2L613.7 437.5L614.7 429.9L616.3 422.4L618.4 415.0L620.9 407.7L623.9 400.6L627.4 393.8L631.5 387.2L636.3 381.2L641.7 375.7L647.6 370.7L653.9 366.2L660.6 362.4L667.6 359.4L675.0 357.1L682.5 355.7L690.1 355.2L697.8 355.4L705.3 356.3L712.7 358.0L720.0 360.6L726.9 363.8L733.5 367.6L739.9 371.8L746.1 376.4L752.0 381.3L757.9 386.3L763.8 391.3L769.6 396.3L775.5 401.3L781.3 406.3L787.1 411.3L793.0 416.3L799.0 421.2L805.0 426.0L811.0 430.8L817.1 435.5L823.3 440.1L829.5 444.7L835.6 449.4L841.8 454.0L848.0 458.5L854.4 462.8L861.0 466.8L867.7 470.5L874.7 473.8L881.8 476.8L889.0 479.6L896.3 482.0L903.7 484.0L911.3 485.7L918.8 487.3L926.3 488.9L933.9 490.6L941.4 492.2L948.9 493.9L956.5 495.5L964.0 497.1" fill="none" stroke="#b6b6b6" stroke-width="15.0" filter="url(#b3)"/><path d="M702.4 523.0L697.7 518.2L692.8 513.4L688.1 508.5L683.6 503.4L679.4 498.1L675.6 492.4L672.1 486.6L669.0 480.7L666.2 474.5L663.7 468.2L661.7 461.8L660.2 455.2L659.1 448.5L658.5 441.8L658.5 435.0L659.1 428.3L660.5 421.7L662.6 415.2L665.6 409.1L669.8 403.8L675.0 399.4L680.8 395.9L687.0 393.2L693.5 391.9L700.2 392.3L706.5 394.2L712.6 396.8L718.6 399.7L724.6 402.8L730.5 406.1L736.4 409.5L742.2 413.1L747.8 416.8L753.4 420.7L758.9 424.6L764.3 428.7L769.7 432.9L775.1 437.0L780.4 441.2L785.8 445.4L791.2 449.5L796.6 453.6L802.0 457.7L807.4 461.9L812.8 466.0L818.3 470.0L823.9 473.9L829.6 477.6L835.4 481.1L841.3 484.5L847.2 487.8L853.2 490.9L859.3 493.9L865.5 496.8L871.8 499.4L878.1 501.8L884.5 504.0L891.0 506.1L897.5 507.9L904.2 509.3L910.8 510.6L917.5 511.8L924.2 513.1L930.8 514.5L937.5 516.0L944.1 517.5L950.7 518.9L957.4 520.4L964.0 521.9" fill="none" stroke="#3a3a3a" stroke-width="12.7" opacity="0.75" filter="url(#b3)"/><path d="M683.1 523.0L678.3 517.8L673.5 512.6L668.8 507.3L664.2 501.9L659.9 496.3L656.1 490.3L652.9 484.0L650.4 477.5L648.3 470.7L646.8 463.9L645.5 457.0L644.8 450.0L644.5 443.0L644.8 436.0L645.6 429.0L647.0 422.1L649.0 415.3L651.7 408.7L655.0 402.5L659.3 396.9L664.5 392.1L670.2 387.9L676.4 384.5L682.9 382.1L689.7 380.9L696.5 380.8L703.2 381.8L709.9 383.5L716.6 385.8L723.1 388.5L729.4 391.7L735.5 395.4L741.3 399.4L746.8 403.8L752.3 408.3L757.7 412.8L763.2 417.3L768.8 421.7L774.4 426.0L780.0 430.3L785.6 434.6L791.3 438.9L797.0 443.1L802.6 447.4L808.3 451.7L813.9 455.9L819.7 460.1L825.5 464.1L831.4 468.0L837.4 471.9L843.4 475.6L849.4 479.2L855.6 482.7L861.9 485.9L868.3 489.0L874.8 491.7L881.4 494.3L888.1 496.6L894.9 498.7L901.7 500.6L908.6 502.0L915.6 503.3L922.5 504.8L929.4 506.3L936.4 507.9L943.3 509.4L950.2 511.0L957.1 512.6L964.0 514.1" fill="none" stroke="#b6b6b6" stroke-width="15.8" filter="url(#b3)"/><path d="M587.0 523.0L582.4 515.5L577.9 507.9L573.9 500.0L570.7 491.7L568.0 483.3L565.7 474.8L563.8 466.2L562.3 457.4L561.4 448.7L561.1 439.8L561.7 431.0L563.0 422.2L564.7 413.6L566.9 405.0L569.6 396.6L572.7 388.3L576.4 380.3L580.5 372.5L585.1 364.9L590.3 357.8L596.1 351.1L602.6 345.1L609.5 339.5L616.8 334.6L624.5 330.3L632.6 326.7L640.9 323.8L649.4 321.5L658.1 319.8L666.9 318.7L675.7 318.5L684.5 319.1L693.3 320.5L701.8 322.7L710.2 325.4L718.4 328.7L726.3 332.8L733.6 337.8L740.4 343.4L746.7 349.5L752.7 356.1L759.1 362.2L765.9 367.8L773.0 373.1L780.1 378.3L787.2 383.6L794.2 389.0L801.2 394.5L808.0 400.0L814.9 405.6L821.8 411.1L828.7 416.6L835.7 422.1L842.6 427.5L849.7 432.9L856.9 438.0L864.4 442.7L872.1 447.0L880.0 450.9L888.1 454.6L896.2 458.0L904.5 461.1L912.9 463.8L921.4 466.4L929.8 468.9L938.3 471.3L946.9 473.6L955.4 475.8L964.0 478.0" fill="none" stroke="#222222" stroke-width="7.2" filter="url(#b2)"/><path d="M625.5 523.0L621.6 516.1L617.7 509.2L614.0 502.2L610.5 495.1L607.6 487.7L605.3 480.1L603.7 472.3L602.6 464.5L602.0 456.6L601.9 448.6L602.2 440.7L603.0 432.8L604.3 425.0L606.3 417.3L608.7 409.8L611.6 402.4L614.9 395.2L618.6 388.2L623.0 381.6L628.0 375.4L633.5 369.7L639.5 364.5L645.8 359.8L652.6 355.7L659.8 352.3L667.3 349.7L675.0 347.7L682.8 346.4L690.7 345.8L698.6 345.9L706.5 346.9L714.2 348.8L721.6 351.4L728.9 354.7L735.8 358.5L742.4 362.9L748.6 367.9L754.5 373.2L760.5 378.4L766.4 383.7L772.2 389.1L778.0 394.5L783.9 399.9L789.7 405.2L795.8 410.3L801.9 415.4L808.0 420.4L814.3 425.3L820.5 430.2L826.8 435.1L833.0 440.0L839.2 444.9L845.4 449.8L851.8 454.6L858.4 459.0L865.2 463.0L872.3 466.6L879.5 469.9L886.9 472.8L894.4 475.4L902.0 477.7L909.7 479.5L917.5 481.1L925.2 482.7L933.0 484.4L940.7 486.1L948.5 487.7L956.2 489.4L964.0 491.0" fill="none" stroke="#222222" stroke-width="4.5" filter="url(#b2)"/><path d="M668.0 523.0L663.2 517.5L658.4 512.0L653.6 506.4L649.0 500.8L644.6 494.9L640.8 488.7L637.9 481.9L635.8 475.0L634.4 467.8L633.5 460.5L632.8 453.2L632.7 445.9L633.1 438.6L634.0 431.4L635.5 424.2L637.6 417.2L640.1 410.3L643.1 403.7L646.7 397.3L651.2 391.5L656.3 386.3L662.0 381.7L668.1 377.7L674.6 374.5L681.5 371.9L688.6 370.4L695.9 370.0L703.2 370.8L710.3 372.4L717.2 374.8L723.9 377.9L730.2 381.5L736.1 385.8L741.7 390.5L747.1 395.4L752.5 400.4L758.1 405.1L763.8 409.7L769.6 414.1L775.4 418.6L781.3 422.9L787.1 427.3L793.0 431.7L798.8 436.1L804.7 440.5L810.5 444.9L816.4 449.3L822.3 453.6L828.3 457.8L834.3 461.9L840.4 466.0L846.5 470.0L852.7 473.9L859.1 477.5L865.6 480.8L872.2 483.8L879.0 486.6L885.8 489.2L892.7 491.6L899.8 493.7L906.9 495.3L914.1 496.7L921.2 498.3L928.3 499.9L935.5 501.5L942.6 503.1L949.7 504.8L956.9 506.4L964.0 508.0" fill="none" stroke="#222222" stroke-width="4.5" filter="url(#b2)"/><path d="M710.0 523.0L705.2 518.3L700.4 513.7L695.7 509.0L691.2 504.0L687.1 498.8L683.3 493.3L679.6 487.7L676.2 481.9L673.1 476.0L670.4 469.9L668.1 463.6L666.2 457.2L664.8 450.7L663.9 444.1L663.5 437.4L663.8 430.7L665.0 424.2L666.9 417.8L669.7 411.7L673.8 406.5L679.1 402.3L684.9 399.0L691.1 396.6L697.7 395.7L704.3 396.8L710.4 399.4L716.2 402.7L722.0 406.1L727.7 409.5L733.5 412.9L739.1 416.4L744.8 420.0L750.4 423.6L756.0 427.3L761.5 431.1L766.9 435.0L772.3 439.0L777.6 443.1L782.8 447.2L788.1 451.3L793.4 455.3L798.7 459.4L804.0 463.5L809.3 467.5L814.6 471.6L820.0 475.5L825.6 479.2L831.2 482.8L837.0 486.2L842.8 489.5L848.7 492.6L854.7 495.5L860.8 498.3L866.9 501.0L873.1 503.5L879.4 505.7L885.7 507.8L892.1 509.7L898.6 511.4L905.1 512.8L911.7 514.0L918.3 515.1L924.9 516.3L931.4 517.7L937.9 519.1L944.4 520.6L951.0 522.1L957.5 523.5L964.0 525.0" fill="none" stroke="#222222" stroke-width="7.2" filter="url(#b2)"/></g><path d="M587.0 523.0L582.4 515.5L577.9 507.9L573.9 500.0L570.7 491.7L568.0 483.3L565.7 474.8L563.8 466.2L562.3 457.4L561.4 448.7L561.1 439.8L561.7 431.0L563.0 422.2L564.7 413.6L566.9 405.0L569.6 396.6L572.7 388.3L576.4 380.3L580.5 372.5L585.1 364.9L590.3 357.8L596.1 351.1L602.6 345.1L609.5 339.5L616.8 334.6L624.5 330.3L632.6 326.7L640.9 323.8L649.4 321.5L658.1 319.8L666.9 318.7L675.7 318.5L684.5 319.1L693.3 320.5L701.8 322.7L710.2 325.4L718.4 328.7L726.3 332.8L733.6 337.8L740.4 343.4L746.7 349.5L752.7 356.1L759.1 362.2L765.9 367.8L773.0 373.1L780.1 378.3L787.2 383.6L794.2 389.0L801.2 394.5L808.0 400.0L814.9 405.6L821.8 411.1L828.7 416.6L835.7 422.1L842.6 427.5L849.7 432.9L856.9 438.0L864.4 442.7L872.1 447.0L880.0 450.9L888.1 454.6L896.2 458.0L904.5 461.1L912.9 463.8L921.4 466.4L929.8 468.9L938.3 471.3L946.9 473.6L955.4 475.8L964.0 478.0" fill="none" stroke="#1c1c1c" stroke-width="1.4"/><path d="M710.0 523.0L705.2 518.3L700.4 513.7L695.7 509.0L691.2 504.0L687.1 498.8L683.3 493.3L679.6 487.7L676.2 481.9L673.1 476.0L670.4 469.9L668.1 463.6L666.2 457.2L664.8 450.7L663.9 444.1L663.5 437.4L663.8 430.7L665.0 424.2L666.9 417.8L669.7 411.7L673.8 406.5L679.1 402.3L684.9 399.0L691.1 396.6L697.7 395.7L704.3 396.8L710.4 399.4L716.2 402.7L722.0 406.1L727.7 409.5L733.5 412.9L739.1 416.4L744.8 420.0L750.4 423.6L756.0 427.3L761.5 431.1L766.9 435.0L772.3 439.0L777.6 443.1L782.8 447.2L788.1 451.3L793.4 455.3L798.7 459.4L804.0 463.5L809.3 467.5L814.6 471.6L820.0 475.5L825.6 479.2L831.2 482.8L837.0 486.2L842.8 489.5L848.7 492.6L854.7 495.5L860.8 498.3L866.9 501.0L873.1 503.5L879.4 505.7L885.7 507.8L892.1 509.7L898.6 511.4L905.1 512.8L911.7 514.0L918.3 515.1L924.9 516.3L931.4 517.7L937.9 519.1L944.4 520.6L951.0 522.1L957.5 523.5L964.0 525.0" fill="none" stroke="#1c1c1c" stroke-width="1.4"/><path d="M710 521C695 506 679 486 670 466M669 412C675 401 688 397 700 397C712 398 719 402 725 407" fill="none" stroke="#f4f470" stroke-width="1.7" stroke-dasharray="6 2.5"/></g><g transform="translate(961.0 0) scale(1 1) translate(-961.0 0)"><path d="M956.0 524C954.0 519 939 495 917 489C929 501 944.0 523 945.0 524Z" fill="#8a8a8a" stroke="#444" stroke-width="0.9"/><path d="M954.0 518C953.0 519 937 497 921 491" fill="none" stroke="#c4c4c4" stroke-width="1.3" opacity=".8"/><path d="M958.5 524C956.5 504 941 480 919 474C931 486 946.5 508 947.5 524Z" fill="#909090" stroke="#444" stroke-width="0.9"/><path d="M956.5 518C955.5 504 939 482 923 476" fill="none" stroke="#c4c4c4" stroke-width="1.3" opacity=".8"/><path d="M961.0 524C959.0 494 947 470 925 464C937 476 949.0 498 950.0 524Z" fill="#969696" stroke="#444" stroke-width="0.9"/><path d="M959.0 518C958.0 494 945 472 929 466" fill="none" stroke="#c4c4c4" stroke-width="1.3" opacity=".8"/><path d="M963.5 524C961.5 485 956 461 934 455C946 467 951.5 489 952.5 524Z" fill="#9e9e9e" stroke="#444" stroke-width="0.9"/><path d="M961.5 518C960.5 485 954 463 938 457" fill="none" stroke="#c4c4c4" stroke-width="1.3" opacity=".8"/><path d="M966.0 524C964.0 476 965 452 943 446C955 458 954.0 480 955.0 524Z" fill="#a6a6a6" stroke="#444" stroke-width="0.9"/><path d="M964.0 518C963.0 476 963 454 947 448" fill="none" stroke="#c4c4c4" stroke-width="1.3" opacity=".8"/></g><g transform="translate(961.0 0) scale(-1 1) translate(-961.0 0)"><path d="M956.0 524C954.0 519 939 495 917 489C929 501 944.0 523 945.0 524Z" fill="#8a8a8a" stroke="#444" stroke-width="0.9"/><path d="M954.0 518C953.0 519 937 497 921 491" fill="none" stroke="#c4c4c4" stroke-width="1.3" opacity=".8"/><path d="M958.5 524C956.5 504 941 480 919 474C931 486 946.5 508 947.5 524Z" fill="#909090" stroke="#444" stroke-width="0.9"/><path d="M956.5 518C955.5 504 939 482 923 476" fill="none" stroke="#c4c4c4" stroke-width="1.3" opacity=".8"/><path d="M961.0 524C959.0 494 947 470 925 464C937 476 949.0 498 950.0 524Z" fill="#969696" stroke="#444" stroke-width="0.9"/><path d="M959.0 518C958.0 494 945 472 929 466" fill="none" stroke="#c4c4c4" stroke-width="1.3" opacity=".8"/><path d="M963.5 524C961.5 485 956 461 934 455C946 467 951.5 489 952.5 524Z" fill="#9e9e9e" stroke="#444" stroke-width="0.9"/><path d="M961.5 518C960.5 485 954 463 938 457" fill="none" stroke="#c4c4c4" stroke-width="1.3" opacity=".8"/><path d="M966.0 524C964.0 476 965 452 943 446C955 458 954.0 480 955.0 524Z" fill="#a6a6a6" stroke="#444" stroke-width="0.9"/><path d="M964.0 518C963.0 476 963 454 947 448" fill="none" stroke="#c4c4c4" stroke-width="1.3" opacity=".8"/></g><path d="M961 456C952 470 949 500 953 524L969 524C973 500 970 470 961 456Z" fill="#a4a4a4" stroke="#505050" stroke-width=".8"/><path d="M961 432C956 441 955 449 958 454C960 456 962 456 964 454C967 449 966 441 961 432Z" fill="#ececec" stroke="#9a9a9a" stroke-width=".6"/><circle cx="961.5" cy="487.5" r="2.2" fill="#dadada" stroke="#8a8a8a" stroke-width=".5"/><circle cx="956.9" cy="484.9" r="2.2" fill="#dadada" stroke="#8a8a8a" stroke-width=".5"/><circle cx="966.1" cy="484.9" r="2.2" fill="#dadada" stroke="#8a8a8a" stroke-width=".5"/><circle cx="956.9" cy="490.5" r="2.2" fill="#dadada" stroke="#8a8a8a" stroke-width=".5"/><circle cx="966.1" cy="490.5" r="2.2" fill="#dadada" stroke="#8a8a8a" stroke-width=".5"/><circle cx="961.5" cy="481.9" r="2.2" fill="#dadada" stroke="#8a8a8a" stroke-width=".5"/><circle cx="961.5" cy="493.3" r="2.2" fill="#dadada" stroke="#8a8a8a" stroke-width=".5"/><rect x="586.5" y="521" width="751.5" height="44" fill="url(#barg)"/><rect x="586.5" y="521" width="5" height="44" fill="#8e8e8e" opacity="0.5"/><rect x="1333" y="521" width="5" height="44" fill="#8a8a8a" opacity="0.6"/></g><g transform="translate(961.0 654) scale(0.995 0.718) translate(-961.0 -248)"><use href="#orn"/></g></svg>
<div class="abs" style="left:417.5px;top:1010px;width:38px;height:38px;background:#ffffff;border:1px solid #3a3a3a;border-radius:2px;box-shadow:inset -1px -1px 0 rgba(0,0,0,.25)"></div>
<div class="abs" style="left:462.5px;top:1010px;width:38px;height:38px;background:#000000;border:1px solid #3a3a3a;border-radius:2px;box-shadow:inset -1px -1px 0 rgba(0,0,0,.25)"></div>
<div class="abs" style="left:507.5px;top:1010px;width:38px;height:38px;background:#00ffff;border:1px solid #3a3a3a;border-radius:2px;box-shadow:inset -1px -1px 0 rgba(0,0,0,.25)"></div>
<div class="abs" style="left:552.5px;top:1010px;width:38px;height:38px;background:#3040e0;border:1px solid #3a3a3a;border-radius:2px;box-shadow:inset -1px -1px 0 rgba(0,0,0,.25)"></div>
<div class="abs" style="left:597.5px;top:1010px;width:38px;height:38px;background:#5cbe50;border:1px solid #3a3a3a;border-radius:2px;box-shadow:inset -1px -1px 0 rgba(0,0,0,.25)"></div>
<div class="abs" style="left:642.5px;top:1010px;width:38px;height:38px;background:#d81020;border:1px solid #3a3a3a;border-radius:2px;box-shadow:inset -1px -1px 0 rgba(0,0,0,.25)"></div>
<div class="abs" style="left:687.5px;top:1010px;width:38px;height:38px;background:#a030e0;border:1px solid #3a3a3a;border-radius:2px;box-shadow:inset -1px -1px 0 rgba(0,0,0,.25)"></div>
<div class="abs" style="left:732.5px;top:1010px;width:38px;height:38px;background:#ffff80;border:1px solid #3a3a3a;border-radius:2px;box-shadow:inset -1px -1px 0 rgba(0,0,0,.25)"></div>
<div class="abs" style="left:777.5px;top:1010px;width:38px;height:38px;background:#b0a038;border:1px solid #3a3a3a;border-radius:2px;box-shadow:inset -1px -1px 0 rgba(0,0,0,.25)"></div>
<div class="abs" style="left:822.5px;top:1010px;width:38px;height:38px;background:#f8c818;border:1px solid #3a3a3a;border-radius:2px;box-shadow:inset -1px -1px 0 rgba(0,0,0,.25)"></div>
<div class="abs" style="left:867.5px;top:1010px;width:38px;height:38px;background:#0a0a0a;border:1px solid #3a3a3a;border-radius:2px;box-shadow:inset -1px -1px 0 rgba(0,0,0,.25)"></div>
<div class="abs" style="left:912.5px;top:1010px;width:38px;height:38px;background:#0a0a0a;border:1px solid #3a3a3a;border-radius:2px;box-shadow:inset -1px -1px 0 rgba(0,0,0,.25)"></div>
<div class="abs" style="left:957.5px;top:1010px;width:38px;height:38px;background:#0a0a0a;border:1px solid #3a3a3a;border-radius:2px;box-shadow:inset -1px -1px 0 rgba(0,0,0,.25)"></div>
<div class="abs" style="left:1002.5px;top:1010px;width:38px;height:38px;background:#0a0a0a;border:1px solid #3a3a3a;border-radius:2px;box-shadow:inset -1px -1px 0 rgba(0,0,0,.25)"></div>
<div class="abs" style="left:1047.5px;top:1010px;width:38px;height:38px;background:#0a0a0a;border:1px solid #3a3a3a;border-radius:2px;box-shadow:inset -1px -1px 0 rgba(0,0,0,.25)"></div>
<div class="abs" style="left:1092.5px;top:1010px;width:38px;height:38px;background:#0a0a0a;border:1px solid #3a3a3a;border-radius:2px;box-shadow:inset -1px -1px 0 rgba(0,0,0,.25)"></div>
<div class="abs" style="left:1137.5px;top:1010px;width:38px;height:38px;background:#0a0a0a;border:1px solid #3a3a3a;border-radius:2px;box-shadow:inset -1px -1px 0 rgba(0,0,0,.25)"></div>
<div class="abs" style="left:1182.5px;top:1010px;width:38px;height:38px;background:#0a0a0a;border:1px solid #3a3a3a;border-radius:2px;box-shadow:inset -1px -1px 0 rgba(0,0,0,.25)"></div>
<div class="abs" style="left:1227.5px;top:1010px;width:38px;height:38px;background:#0a0a0a;border:1px solid #3a3a3a;border-radius:2px;box-shadow:inset -1px -1px 0 rgba(0,0,0,.25)"></div>
<div class="abs" style="left:1272.5px;top:1010px;width:38px;height:38px;background:#0a0a0a;border:1px solid #3a3a3a;border-radius:2px;box-shadow:inset -1px -1px 0 rgba(0,0,0,.25)"></div>
<div class="abs" style="left:1317.5px;top:1010px;width:38px;height:38px;background:#0a0a0a;border:1px solid #3a3a3a;border-radius:2px;box-shadow:inset -1px -1px 0 rgba(0,0,0,.25)"></div>
<div class="abs" style="left:1362.5px;top:1010px;width:38px;height:38px;background:#0a0a0a;border:1px solid #3a3a3a;border-radius:2px;box-shadow:inset -1px -1px 0 rgba(0,0,0,.25)"></div>
<div class="abs" style="left:1407.5px;top:1010px;width:38px;height:38px;background:#0a0a0a;border:1px solid #3a3a3a;border-radius:2px;box-shadow:inset -1px -1px 0 rgba(0,0,0,.25)"></div>
<div class="abs" style="left:1452.5px;top:1010px;width:38px;height:38px;background:#0a0a0a;border:1px solid #3a3a3a;border-radius:2px;box-shadow:inset -1px -1px 0 rgba(0,0,0,.25)"></div>
<div class="abs" style="left:1497.5px;top:1010px;width:38px;height:38px;background:#0a0a0a;border:1px solid #3a3a3a;border-radius:2px;box-shadow:inset -1px -1px 0 rgba(0,0,0,.25)"></div>
<div class="abs" style="left:372px;top:1024px;width:32px;height:25px;background:#000"></div>
<div class="abs" style="left:354px;top:1009px;width:31px;height:25px;background:#fff;border:1px solid #444;box-shadow:1px 1px 0 #ddd"></div>
<svg style="left:388px;top:1009px" width="16" height="12"><rect x="1" y="1" width="8" height="6" rx="2.5" fill="none" stroke="#111"/><rect x="5" y="4" width="9" height="6" rx="2.5" fill="#f0f0f0" stroke="#111"/></svg>
<div class="abs" style="left:1577px;top:54px;width:1px;height:1002px;background:#fff"></div><div class="abs" style="left:1578px;top:54px;width:2px;height:1002px;background:#a8a8a8"></div><div class="abs" style="left:1581px;top:54px;width:1px;height:1002px;background:#dcdcdc"></div>
<div class="rh" style="top:56px;letter-spacing:0.317px">Vectors</div><div class="hbtn" style="left:1872px;top:57px"></div>
<div class="combo" style="top:77px;letter-spacing:0.123px">Default Sheet<i></i></div>
<div class="row" style="top:140.5px;height:32px"><span class="txt" style="left:32.5px;top:8.2px;letter-spacing:0.022px">Default Layer</span></div>
<div class="rh" style="top:215px;letter-spacing:0.096px">Bitmaps</div><div class="hbtn" style="left:1872px;top:216px"></div>
<div class="row" style="top:266px;height:30px"><span class="txt" style="left:32.5px;top:7.8px;letter-spacing:-0.006px">Bitmap Layer 1</span></div>
<div class="rh" style="top:316px;letter-spacing:-0.080px">Reliefs</div><div class="hbtn" style="left:1872px;top:317px"></div>
<div class="combo" style="top:337px;letter-spacing:0.081px">Front Relief<i></i></div>
<div class="row" style="top:401px;height:31px"><span class="txt" style="left:58.7px;top:7px;letter-spacing:-0.019px">Relief Layer 1</span></div>
<div class="abs" style="left:1582px;top:1022px;width:338px;height:32px;background:#d8d8d8"></div><svg style="left:1582px;top:1022px" width="338" height="32"><rect width="338" height="32" filter="url(#nz)" opacity=".8"/></svg>
<div class="abs" style="left:1641px;top:1021px;width:279px;height:1px;background:#b4b4b4"></div>
<div class="abs" style="left:1583px;top:1021px;width:58px;height:31px;background:#f0f0f0;border-right:1px solid #999;border-bottom:1px solid #999;border-radius:0 0 5px 5px"></div>
<div class="abs" style="left:1642px;top:1022px;width:60px;height:31px;background:#f4f4f4;border:1px solid #a0a0a0;border-radius:0 0 6px 6px"></div>
<div class="txt" style="left:1590.8px;top:1026.9px;font-size:15.6px;color:#111;transform:scaleX(0.8737);transform-origin:0 0">Layers</div>
<div class="txt" style="left:1651.0px;top:1027.9px;font-size:15.6px;color:#111;transform:scaleX(0.9536);transform-origin:0 0">Add In</div>
<div class="abs" style="left:0;top:1056px;width:1920px;height:24px;background:#f0f0f0"></div>
<div class="abs" style="left:1490px;top:1060px;width:82px;height:20px;border-left:1px solid #b4b4b4;border-top:1px solid #b4b4b4;border-right:1px solid #fff;font-size:14.8px;line-height:19px;padding-left:2.8px;letter-spacing:-0.704px;color:#222;white-space:nowrap">X: 682.500</div>
<div class="abs" style="left:1577px;top:1060px;width:82px;height:20px;border-left:1px solid #b4b4b4;border-top:1px solid #b4b4b4;border-right:1px solid #fff;font-size:14.8px;line-height:19px;padding-left:1.6px;letter-spacing:-0.719px;color:#222;white-space:nowrap">Y: 226.500</div>
<div class="abs" style="left:1663px;top:1060px;width:75px;height:20px;border-left:1px solid #b4b4b4;border-top:1px solid #b4b4b4;border-right:1px solid #fff;font-size:14.8px;line-height:19px;padding-left:0.0px;letter-spacing:0.000px;color:#222;white-space:nowrap"></div>
<div class="abs" style="left:1742px;top:1060px;width:87px;height:20px;border-left:1px solid #b4b4b4;border-top:1px solid #b4b4b4;border-right:1px solid #fff;font-size:14.8px;line-height:19px;padding-left:0.0px;letter-spacing:0.000px;color:#222;white-space:nowrap"></div>
<div class="abs" style="left:1833px;top:1060px;width:87px;height:20px;border-left:1px solid #b4b4b4;border-top:1px solid #b4b4b4;border-right:1px solid #fff;font-size:14.8px;line-height:19px;padding-left:0.0px;letter-spacing:0.000px;color:#222;white-space:nowrap"></div>
<svg style="left:0;top:0" width="1920" height="1080" viewBox="0 0 1920 1080"><defs>
<linearGradient id="gdoc" x1="0" y1="0" x2="1" y2="1"><stop offset="0" stop-color="#c8d4e8"/><stop offset=".5" stop-color="#a4b4d0"/><stop offset="1" stop-color="#7088b0"/></linearGradient>
<linearGradient id="gfold" x1="0" y1="0" x2="0" y2="1"><stop offset="0" stop-color="#fff428"/><stop offset="1" stop-color="#e8cc00"/></linearGradient>
<linearGradient id="gslab" x1="0" y1="0" x2="1" y2="1"><stop offset="0" stop-color="#f4f4f8"/><stop offset="1" stop-color="#b8bcc8"/></linearGradient>
<radialGradient id="gbulb" cx=".4" cy=".35" r=".7"><stop offset="0" stop-color="#fff8c0"/><stop offset=".45" stop-color="#ffd840"/><stop offset="1" stop-color="#f09810"/></radialGradient>
<linearGradient id="gbuck" x1="0" y1="0" x2="1" y2="0"><stop offset="0" stop-color="#2a6ae0"/><stop offset=".45" stop-color="#78b0f8"/><stop offset="1" stop-color="#2058d0"/></linearGradient>
<linearGradient id="gimp" x1="0" y1="0" x2="1" y2="1"><stop offset="0" stop-color="#d4b888"/><stop offset="1" stop-color="#a88858"/></linearGradient>
<radialGradient id="glens" cx=".4" cy=".35" r=".8"><stop offset="0" stop-color="#f4fbff"/><stop offset=".7" stop-color="#c4e0f0"/><stop offset="1" stop-color="#98c0dc"/></radialGradient>
<linearGradient id="ggold" x1="0" y1="0" x2="0" y2="1"><stop offset="0" stop-color="#fce488"/><stop offset=".5" stop-color="#e8bc48"/><stop offset="1" stop-color="#b88420"/></linearGradient>
<radialGradient id="ggoldr" cx=".4" cy=".3" r=".8"><stop offset="0" stop-color="#fff0a0"/><stop offset=".5" stop-color="#ecc050"/><stop offset="1" stop-color="#b07c18"/></radialGradient>
<linearGradient id="gblue" x1="0" y1="0" x2="1" y2="0"><stop offset="0" stop-color="#7878d8"/><stop offset=".5" stop-color="#c4c4f8"/><stop offset="1" stop-color="#7070d0"/></linearGradient>
<radialGradient id="gbluer" cx=".5" cy=".4" r=".7"><stop offset="0" stop-color="#dcdcff"/><stop offset=".5" stop-color="#9090e0"/><stop offset="1" stop-color="#5858b8"/></radialGradient>
<linearGradient id="gabc" x1="0" y1="0" x2="1" y2="1"><stop offset="0" stop-color="#082808"/><stop offset=".25" stop-color="#3c8c3c"/><stop offset=".6" stop-color="#88d088"/><stop offset="1" stop-color="#a8e0a8"/></linearGradient>
<filter id="ib" x="-30%" y="-30%" width="160%" height="160%"><feGaussianBlur stdDeviation="0.7"/></filter>
<filter id="ib2" x="-30%" y="-30%" width="160%" height="160%"><feGaussianBlur stdDeviation="1.4"/></filter>
</defs><g transform="translate(3 3.5) scale(0.86 1)"><path d="M3 14L5 3L9 1L12 3L12 14Z" fill="#3888d0"/><path d="M1 15H13L15 19H0Z" fill="#2060b0"/><path d="M4 12L6 4L9 3" stroke="#a8d8f8" stroke-width="1.5" fill="none"/><path d="M9 20L14 0L17 0L21 20H17.5L16.5 15H13L12 20Z" fill="#8830a8"/><path d="M13.6 12H16L14.8 5Z" fill="#f0f0f0"/></g><g transform="translate(9.5 30.5) scale(0.86 0.98)"><path d="M3 14L5 3L9 1L12 3L12 14Z" fill="#3888d0"/><path d="M1 15H13L15 19H0Z" fill="#2060b0"/><path d="M4 12L6 4L9 3" stroke="#a8d8f8" stroke-width="1.5" fill="none"/><path d="M9 20L14 0L17 0L21 20H17.5L16.5 15H13L12 20Z" fill="#8830a8"/><path d="M13.6 12H16L14.8 5Z" fill="#f0f0f0"/></g><rect x="352.5" y="60" width="28" height="27" fill="#f2f2f2"/><path d="M380.5 60V87H352.5" stroke="#a0a0a0" stroke-width="1.4" fill="none"/><path d="M352.5 87V60H380.5" stroke="#fff" fill="none"/><text x="365.8" y="79" text-anchor="middle" font-family="Liberation Sans,sans-serif" font-weight="bold" font-size="18.5" textLength="20.5" lengthAdjust="spacingAndGlyphs" fill="#000">3D</text><g transform="translate(393 71)"><path d="M5 5L11 10" stroke="#e89838" stroke-width="4" stroke-linecap="round"/><path d="M5 6L10 10.5" stroke="#b06818" stroke-width="1.2"/><circle r="8" fill="url(#glens)" stroke="#88a8c8" stroke-width="1.6"/><path d="M-5 0H5M0 -5V5" stroke="#386080" stroke-width="2.2"/></g><g transform="translate(422.5 71)"><path d="M5 5L11 10" stroke="#e89838" stroke-width="4" stroke-linecap="round"/><path d="M5 6L10 10.5" stroke="#b06818" stroke-width="1.2"/><circle r="8" fill="url(#glens)" stroke="#88a8c8" stroke-width="1.6"/><path d="M-5 0H5" stroke="#386080" stroke-width="2.2"/></g><g transform="translate(451 71)"><path d="M5 5L11 10" stroke="#e89838" stroke-width="4" stroke-linecap="round"/><path d="M5 6L10 10.5" stroke="#b06818" stroke-width="1.2"/><circle r="8" fill="url(#glens)" stroke="#88a8c8" stroke-width="1.6"/><path d="M-4 -3L-1 -5M-4 -3L-2 0M-4 -3C0 -6 5 -3 4 1C3 4 0 5 -3 4" stroke="#7c9c28" stroke-width="2" fill="none"/><path d="M-4.5 -2.5L-0.5 -5.5L-1.5 -0.5Z" fill="#d08820"/></g><path d="M471.5 63V85M567.5 63V85M664.5 63V85" stroke="#a8a8a8" stroke-width="1.4"/><g transform="translate(489.5 71)"><path d="M5 5L11 10" stroke="#e89838" stroke-width="4" stroke-linecap="round"/><path d="M5 6L10 10.5" stroke="#b06818" stroke-width="1.2"/><circle r="8" fill="url(#glens)" stroke="#88a8c8" stroke-width="1.6"/><text x="0" y="3.5" text-anchor="middle" font-family="Liberation Sans,sans-serif" font-weight="bold" font-size="9" fill="#386080">1:1</text></g><g transform="translate(518 71)"><path d="M5 5L11 10" stroke="#e89838" stroke-width="4" stroke-linecap="round"/><path d="M5 6L10 10.5" stroke="#b06818" stroke-width="1.2"/><circle r="8" fill="url(#glens)" stroke="#88a8c8" stroke-width="1.6"/><rect x="-4.5" y="-3.5" width="9" height="7" fill="none" stroke="#386080" stroke-width="1.8"/></g><g transform="translate(546 71)"><path d="M-9 -1C-9 -7 -4 -9 0 -8C5 -9 9 -5 8 0C10 2 12 5 14 7L13 10L8 10L5 7C0 9 -6 8 -8 4Z" fill="#9a9a9a"/></g><rect x="573.5" y="60.3" width="27.8" height="26.7" fill="#fafafa"/><path d="M573.5 87V60.3H601.3" stroke="#a0a0a0" stroke-width="1.2" fill="none"/><rect x="602.3" y="60.3" width="27.8" height="26.7" fill="#fafafa"/><path d="M602.3 87V60.3H630.0999999999999" stroke="#a0a0a0" stroke-width="1.2" fill="none"/><g transform="translate(582 66)"><path d="M0 1H6M0 4H4M0 12H6M0 15H6M0 18H6" stroke="#222" stroke-width="1.2" stroke-dasharray="2 1"/><path d="M7 0V19" stroke="#666"/><path d="M3 9.5L9 4V7H15V12H9V15Z" fill="#444" stroke="#111" stroke-width=".8"/></g><g transform="translate(608 66)"><path d="M14 1H20M16 4H20M14 12H20M14 15H20M14 18H20" stroke="#222" stroke-width="1.2" stroke-dasharray="2 1"/><path d="M20.5 0V19" stroke="#666"/><path d="M13 9.5L7 4V7H1V12H7V15Z" fill="#444" stroke="#111" stroke-width=".8"/></g><g transform="translate(635 66)"><path d="M0 7.5L10 0V4H16V11H10V15Z" fill="#7c84c8"/><path d="M15 10L19 14" stroke="#d89048" stroke-width="2.6" stroke-linecap="round"/><circle cx="12" cy="6" r="5.2" fill="#c8dcf0" stroke="#98b0d0" stroke-width="1.2" opacity=".95"/></g><path d="M680 74H771" stroke="#848484" stroke-width="2.6"/><path d="M680 75.8H771" stroke="#fff" stroke-width="1"/><path d="M773 63.5H784.5V82L779 87.5L773 82Z" fill="#f0f0f0"/><path d="M784.5 63.5V82L779 87.5" stroke="#6a6a6a" stroke-width="1.3" fill="none"/><path d="M773 82V63.5H784" stroke="#fff" fill="none"/><g transform="translate(1592 114)"><path d="M3 16L20 16L14 8L3 8Z" fill="#b4b4b4" opacity=".8"/><path d="M0 0H7.8L13 5.4V18H0Z" fill="url(#gdoc)" stroke="#8a9cb8" stroke-width=".6"/><path d="M7.8 0L13 5.4H7.8Z" fill="#f4f6fa"/></g><g transform="translate(1636 114.5)"><g transform="translate(0 0) scale(0.62)"><path d="M5 25L31 24L33 20L12 21Z" fill="#a8a8a8" opacity=".8"/><path d="M1 4C2 2 6 1 9 1L13 0L17 3L23 3V12L2 22Z" fill="#e8d800" stroke="#c8b400" stroke-width=".5"/><path d="M4 26C3 22 4 17 8 15C16 12 25 12 31 13C31 17 29 22 27 24C20 27 10 27 4 26Z" fill="url(#gfold)" stroke="#c4ac00" stroke-width=".6"/><path d="M1 4L2 22L4 26C3 21 4 17 8 15L23 12V3L17 3L13 0L9 1C6 1 2 2 1 4Z" fill="#f8ec20" opacity=".9"/></g></g><g transform="translate(1682.5 116)"><g transform="translate(0 0) scale(0.62)"><path d="M6 25L30 25L33 17L24 17Z" fill="#a8a8a8" opacity=".8"/><rect x="0" y="0" width="25" height="25" rx="1.5" fill="#1858c8"/><rect x="1" y="1" width="3" height="23" fill="#3878e0"/><rect x="5" y="1" width="15" height="11" fill="url(#gslab)"/><rect x="6" y="16" width="14" height="9" fill="#d8d8dc"/><rect x="8" y="18" width="4" height="7" rx="1.5" fill="#1858c8"/></g></g><g transform="translate(1727.5 114)"><path d="M6 20L22 20L19 13Z" fill="#b0b0b0" opacity=".8"/><path d="M1 1L11 0L13 2L15 8L18 14L19 19L6 19L3 17L4 13L1 11L2 7L0 5Z" fill="url(#gimp)"/><path d="M1 1L0 5L2 7L1 11L4 13L3 17" stroke="#8a6a3a" stroke-width=".6" fill="none"/></g><g transform="translate(1777 114)"><path d="M0 0H9L14 4V20H0Z" fill="url(#gdoc)"/><g transform="translate(7.5 11) scale(0.8)"><circle cx="0" cy="-2" r="6.5" fill="url(#gbulb)"/><path d="M-3.4 3.2L3.4 3.2L2.6 8.5L-2.6 8.5Z" fill="#f0a020"/><path d="M-2.6 7L2.6 7L2.2 11L-2.2 11Z" fill="#3a1808"/><ellipse cx="-2" cy="-4" rx="2.2" ry="2.8" fill="#fffbe0" opacity=".9"/></g></g><g transform="translate(1824 115.5)"><path d="M0 3L2 14C4 16 10 16 12 14L14 3Z" fill="url(#gbuck)"/><ellipse cx="7" cy="3" rx="7" ry="2.6" fill="#8cc0f8" stroke="#2a6ad8" stroke-width=".8"/><path d="M4.5 2.5L7 1L9.5 2.5" stroke="#fff" stroke-width="1.2" fill="none"/></g><g transform="translate(1866 112.5)"><rect x="0" y="0" width="21.5" height="21.5" fill="#f8f8f8"/><path d="M0 21.5V0H21.5" stroke="#8a8a8a" fill="none"/><path d="M21.5 0V21.5H0" stroke="#fff" fill="none"/><g transform="translate(7 11) scale(0.95)"><circle cx="0" cy="-2" r="6.5" fill="url(#gbulb)"/><path d="M-3.4 3.2L3.4 3.2L2.6 8.5L-2.6 8.5Z" fill="#f0a020"/><path d="M-2.6 7L2.6 7L2.2 11L-2.2 11Z" fill="#3a1808"/><ellipse cx="-2" cy="-4" rx="2.2" ry="2.8" fill="#fffbe0" opacity=".9"/></g><g transform="translate(14.5 8.5) scale(0.95)"><circle cx="0" cy="-2" r="6.5" fill="url(#gbulb)"/><path d="M-3.4 3.2L3.4 3.2L2.6 8.5L-2.6 8.5Z" fill="#f0a020"/><path d="M-2.6 7L2.6 7L2.2 11L-2.2 11Z" fill="#3a1808"/><ellipse cx="-2" cy="-4" rx="2.2" ry="2.8" fill="#fffbe0" opacity=".9"/></g></g><g transform="translate(1594.5 146.5)"><rect width="21" height="20.5" fill="#dedede"/><path d="M0 20.5V0H21" stroke="#fff" fill="none"/><path d="M21 0V20.5H0" stroke="#9a9a9a" fill="none"/><circle cx="10.5" cy="10.5" r="8" fill="#000"/></g><g transform="translate(1821 145)"><rect width="21.5" height="21.5" fill="#c8c8c8"/><path d="M0 21.5V0H21.5" stroke="#f4f4f4" fill="none"/><path d="M21.5 0V21.5H0" stroke="#8a8a8a" fill="none"/><path d="M6 11V8C6 3 15 3 15 8" stroke="#f4f4f4" stroke-width="2.4" fill="none"/><rect x="3" y="11" width="14" height="9" fill="#a0a0a0"/><path d="M10 19V14M8 16L10 13.5L12 16" stroke="#000" stroke-width="1.4" fill="none"/></g><g transform="translate(1844 145)"><path d="M3.5 0V22M0 18.5H21" stroke="#111" stroke-width="1" stroke-dasharray="2.5 1.5"/><path d="M16 2L7 13" stroke="#000" stroke-width="2.2"/><path d="M5 15L6 8L12 13Z" fill="#000"/></g><g transform="translate(1866.5 145)"><rect width="21.5" height="21.5" fill="#e2e2e2"/><path d="M0 21.5V0H21.5" stroke="#f8f8f8" fill="none"/><g transform="translate(10.5 9.5) scale(0.95)"><circle cx="0" cy="-2" r="6.5" fill="url(#gbulb)"/><path d="M-3.4 3.2L3.4 3.2L2.6 8.5L-2.6 8.5Z" fill="#f0a020"/><path d="M-2.6 7L2.6 7L2.2 11L-2.2 11Z" fill="#3a1808"/><ellipse cx="-2" cy="-4" rx="2.2" ry="2.8" fill="#fffbe0" opacity=".9"/></g></g><g transform="translate(1851.5 176.5)"><rect width="16" height="15" rx="1.5" fill="#1038a0"/><rect x="1" y="1" width="14" height="6" rx="1" fill="#2a5ad0" opacity=".7"/><path d="M8 12.5V3.5M4 7.5L8 3.5L12 7.5" stroke="#fff" stroke-width="2" fill="none"/></g><g transform="translate(1874.0 176.5)"><rect width="16" height="15" rx="1.5" fill="#1038a0"/><rect x="1" y="1" width="14" height="6" rx="1" fill="#2a5ad0" opacity=".7"/><path d="M8 2.5V11.5M4 7.5L8 11.5L12 7.5" stroke="#fff" stroke-width="2" fill="none"/></g><g transform="translate(1592 240.5)"><path d="M3 16L20 16L14 8L3 8Z" fill="#b4b4b4" opacity=".8"/><path d="M0 0H7.8L13 5.4V18H0Z" fill="url(#gdoc)" stroke="#8a9cb8" stroke-width=".6"/><path d="M7.8 0L13 5.4H7.8Z" fill="#f4f6fa"/></g><g transform="translate(1630 241.5)"><g transform="translate(0 0) scale(0.6)"><path d="M5 25L31 24L33 20L12 21Z" fill="#a8a8a8" opacity=".8"/><path d="M1 4C2 2 6 1 9 1L13 0L17 3L23 3V12L2 22Z" fill="#e8d800" stroke="#c8b400" stroke-width=".5"/><path d="M4 26C3 22 4 17 8 15C16 12 25 12 31 13C31 17 29 22 27 24C20 27 10 27 4 26Z" fill="url(#gfold)" stroke="#c4ac00" stroke-width=".6"/><path d="M1 4L2 22L4 26C3 21 4 17 8 15L23 12V3L17 3L13 0L9 1C6 1 2 2 1 4Z" fill="#f8ec20" opacity=".9"/></g></g><g transform="translate(1670 242)"><g transform="translate(0 0) scale(0.6)"><path d="M6 25L30 25L33 17L24 17Z" fill="#a8a8a8" opacity=".8"/><rect x="0" y="0" width="25" height="25" rx="1.5" fill="#1858c8"/><rect x="1" y="1" width="3" height="23" fill="#3878e0"/><rect x="5" y="1" width="15" height="11" fill="url(#gslab)"/><rect x="6" y="16" width="14" height="9" fill="#d8d8dc"/><rect x="8" y="18" width="4" height="7" rx="1.5" fill="#1858c8"/></g></g><g transform="translate(1709 240.5)"><path d="M6 20L22 20L19 13Z" fill="#b0b0b0" opacity=".8"/><path d="M1 1L11 0L13 2L15 8L18 14L19 19L6 19L3 17L4 13L1 11L2 7L0 5Z" fill="url(#gimp)"/><path d="M1 1L0 5L2 7L1 11L4 13L3 17" stroke="#8a6a3a" stroke-width=".6" fill="none"/></g><g transform="translate(1749 241)"><path d="M3 17L19 17L17 10Z" fill="#a8a8a8"/><rect width="15" height="15" fill="url(#gslab)"/><rect width="15" height="15" fill="#888" opacity=".35"/></g><g transform="translate(1787.5 241)"><path d="M6 8H18L21 17H5Z" fill="#8088d0"/><g transform="translate(0 0)"><rect width="11" height="13" fill="#7a8a40"/><rect width="11" height="5.9" fill="#9aa868"/><path d="M1.1 13C1.1 7.8 2.2 2.6 5.5 1.6C8.8 2.6 9.9 7.8 10.4 13Z" fill="#1c1408"/><ellipse cx="5.5" cy="4.9" rx="1.9" ry="2.6" fill="#e0b070"/><path d="M4.0 8.1L7.0 8.1L6.6 11.0L4.4 11.0Z" fill="#d0a060"/><path d="M2.8 12.0L8.2 12.0" stroke="#c09050" stroke-width="1.3"/></g></g><g transform="translate(1831 241)"><path d="M0 3L2 14C4 16 10 16 12 14L14 3Z" fill="url(#gbuck)"/><ellipse cx="7" cy="3" rx="7" ry="2.6" fill="#8cc0f8" stroke="#2a6ad8" stroke-width=".8"/><path d="M4.5 2.5L7 1L9.5 2.5" stroke="#fff" stroke-width="1.2" fill="none"/></g><g transform="translate(1866 239)"><rect x="0" y="0" width="21.5" height="21.5" fill="#f8f8f8"/><path d="M0 21.5V0H21.5" stroke="#8a8a8a" fill="none"/><path d="M21.5 0V21.5H0" stroke="#fff" fill="none"/><g transform="translate(7 11) scale(0.95)"><circle cx="0" cy="-2" r="6.5" fill="url(#gbulb)"/><path d="M-3.4 3.2L3.4 3.2L2.6 8.5L-2.6 8.5Z" fill="#f0a020"/><path d="M-2.6 7L2.6 7L2.2 11L-2.2 11Z" fill="#3a1808"/><ellipse cx="-2" cy="-4" rx="2.2" ry="2.8" fill="#fffbe0" opacity=".9"/></g><g transform="translate(14.5 8.5) scale(0.95)"><circle cx="0" cy="-2" r="6.5" fill="url(#gbulb)"/><path d="M-3.4 3.2L3.4 3.2L2.6 8.5L-2.6 8.5Z" fill="#f0a020"/><path d="M-2.6 7L2.6 7L2.2 11L-2.2 11Z" fill="#3a1808"/><ellipse cx="-2" cy="-4" rx="2.2" ry="2.8" fill="#fffbe0" opacity=".9"/></g></g><g transform="translate(1594 271)"><rect width="21" height="20" fill="#7a8a40"/><rect width="21" height="9.0" fill="#9aa868"/><path d="M2.1 20C2.1 12.0 4.2 4.0 10.5 2.4C16.8 4.0 18.9 12.0 19.9 20Z" fill="#1c1408"/><ellipse cx="10.5" cy="7.6" rx="3.6" ry="4.0" fill="#e0b070"/><path d="M7.6 12.4L13.4 12.4L12.6 17.0L8.4 17.0Z" fill="#d0a060"/><path d="M5.2 18.4L15.8 18.4" stroke="#c09050" stroke-width="2.0"/></g><g transform="translate(1592 374.5)"><path d="M3 16L20 16L14 8L3 8Z" fill="#b4b4b4" opacity=".8"/><path d="M0 0H7.8L13 5.4V18H0Z" fill="url(#gdoc)" stroke="#8a9cb8" stroke-width=".6"/><path d="M7.8 0L13 5.4H7.8Z" fill="#f4f6fa"/></g><g transform="translate(1625 376)"><g transform="translate(0 0) scale(0.6)"><path d="M5 25L31 24L33 20L12 21Z" fill="#a8a8a8" opacity=".8"/><path d="M1 4C2 2 6 1 9 1L13 0L17 3L23 3V12L2 22Z" fill="#e8d800" stroke="#c8b400" stroke-width=".5"/><path d="M4 26C3 22 4 17 8 15C16 12 25 12 31 13C31 17 29 22 27 24C20 27 10 27 4 26Z" fill="url(#gfold)" stroke="#c4ac00" stroke-width=".6"/><path d="M1 4L2 22L4 26C3 21 4 17 8 15L23 12V3L17 3L13 0L9 1C6 1 2 2 1 4Z" fill="#f8ec20" opacity=".9"/></g></g><g transform="translate(1659.5 376.5)"><g transform="translate(0 0) scale(0.6)"><path d="M6 25L30 25L33 17L24 17Z" fill="#a8a8a8" opacity=".8"/><rect x="0" y="0" width="25" height="25" rx="1.5" fill="#1858c8"/><rect x="1" y="1" width="3" height="23" fill="#3878e0"/><rect x="5" y="1" width="15" height="11" fill="url(#gslab)"/><rect x="6" y="16" width="14" height="9" fill="#d8d8dc"/><rect x="8" y="18" width="4" height="7" rx="1.5" fill="#1858c8"/></g></g><g transform="translate(1694 374)"><path d="M6 20L22 20L19 13Z" fill="#b0b0b0" opacity=".8"/><path d="M1 1L11 0L13 2L15 8L18 14L19 19L6 19L3 17L4 13L1 11L2 7L0 5Z" fill="url(#gimp)"/><path d="M1 1L0 5L2 7L1 11L4 13L3 17" stroke="#8a6a3a" stroke-width=".6" fill="none"/></g><g transform="translate(1729 374)"><path d="M0 6L9.5 1L19 6L9.5 11Z" fill="#8890e8" stroke="#6068c0" stroke-width=".5"/><path d="M0 14L9.5 9L19 14L9.5 19Z" fill="#b01818"/><path d="M6 13L9.5 16L13 13L11 13L11 10L8 10L8 13Z" fill="#f8d020"/></g><g transform="translate(1765.5 374)"><path d="M0 0H9L14 4V20H0Z" fill="url(#gdoc)"/><g transform="translate(7.5 11) scale(0.8)"><circle cx="0" cy="-2" r="6.5" fill="url(#gbulb)"/><path d="M-3.4 3.2L3.4 3.2L2.6 8.5L-2.6 8.5Z" fill="#f0a020"/><path d="M-2.6 7L2.6 7L2.2 11L-2.2 11Z" fill="#3a1808"/><ellipse cx="-2" cy="-4" rx="2.2" ry="2.8" fill="#fffbe0" opacity=".9"/></g></g><g transform="translate(1799 375)"><rect width="17.5" height="17.5" fill="#000"/><ellipse cx="8.7" cy="10" rx="5.5" ry="6" fill="#a0a0a0"/><ellipse cx="8.7" cy="11.5" rx="3" ry="3.4" fill="#d0d0d0"/><circle cx="4.5" cy="3.5" r="2" fill="#909090"/><circle cx="13" cy="3.5" r="2" fill="#909090"/><path d="M2 2H15" stroke="#ccc" stroke-width=".8"/></g><g transform="translate(1835.5 375.5)"><path d="M0 3L2 14C4 16 10 16 12 14L14 3Z" fill="url(#gbuck)"/><ellipse cx="7" cy="3" rx="7" ry="2.6" fill="#8cc0f8" stroke="#2a6ad8" stroke-width=".8"/><path d="M4.5 2.5L7 1L9.5 2.5" stroke="#fff" stroke-width="1.2" fill="none"/></g><g transform="translate(1866 373)"><rect x="0" y="0" width="21.5" height="21.5" fill="#f8f8f8"/><path d="M0 21.5V0H21.5" stroke="#8a8a8a" fill="none"/><path d="M21.5 0V21.5H0" stroke="#fff" fill="none"/><g transform="translate(7 11) scale(0.95)"><circle cx="0" cy="-2" r="6.5" fill="url(#gbulb)"/><path d="M-3.4 3.2L3.4 3.2L2.6 8.5L-2.6 8.5Z" fill="#f0a020"/><path d="M-2.6 7L2.6 7L2.2 11L-2.2 11Z" fill="#3a1808"/><ellipse cx="-2" cy="-4" rx="2.2" ry="2.8" fill="#fffbe0" opacity=".9"/></g><g transform="translate(14.5 8.5) scale(0.95)"><circle cx="0" cy="-2" r="6.5" fill="url(#gbulb)"/><path d="M-3.4 3.2L3.4 3.2L2.6 8.5L-2.6 8.5Z" fill="#f0a020"/><path d="M-2.6 7L2.6 7L2.2 11L-2.2 11Z" fill="#3a1808"/><ellipse cx="-2" cy="-4" rx="2.2" ry="2.8" fill="#fffbe0" opacity=".9"/></g></g><g transform="translate(1600 405)"><path d="M3 14C3 6 10 1 18 2C24 3 26 8 27 12L22 15C20 10 16 8 12 9C8 10 6 13 6 16Z" fill="url(#ggold)"/><path d="M3 15C4 9 10 8 14 9C18 10 20 13 21 16C14 18 8 18 3 15Z" fill="#9c9cd0"/><path d="M2 19H10M6 15V23" stroke="#000" stroke-width="1.3"/></g><path d="M1635 411.5L1641 416.5L1635 421.5Z" fill="#000"/><g transform="translate(1866 406)"><rect width="21.5" height="21.5" fill="#e2e2e2"/><path d="M0 21.5V0H21.5" stroke="#f8f8f8" fill="none"/><path d="M21.5 0V21.5H0" stroke="#c0c0c0" fill="none"/><g transform="translate(10.5 9.5) scale(0.95)"><circle cx="0" cy="-2" r="6.5" fill="url(#gbulb)"/><path d="M-3.4 3.2L3.4 3.2L2.6 8.5L-2.6 8.5Z" fill="#f0a020"/><path d="M-2.6 7L2.6 7L2.2 11L-2.2 11Z" fill="#3a1808"/><ellipse cx="-2" cy="-4" rx="2.2" ry="2.8" fill="#fffbe0" opacity=".9"/></g></g><g transform="translate(1851.5 436.5)"><rect width="16" height="15" rx="1.5" fill="#1038a0"/><rect x="1" y="1" width="14" height="6" rx="1" fill="#2a5ad0" opacity=".7"/><path d="M8 12.5V3.5M4 7.5L8 3.5L12 7.5" stroke="#fff" stroke-width="2" fill="none"/></g><g transform="translate(1874.0 436.5)"><rect width="16" height="15" rx="1.5" fill="#1038a0"/><rect x="1" y="1" width="14" height="6" rx="1" fill="#2a5ad0" opacity=".7"/><path d="M8 2.5V11.5M4 7.5L8 11.5L12 7.5" stroke="#fff" stroke-width="2" fill="none"/></g><g transform="translate(28.5 203)"><path d="M3 24.5L26.5 24.5L20.5 16.5L3 16.5Z" fill="#b4b4b4" opacity=".8"/><path d="M0 0H11.7L19.5 7.9V26.5H0Z" fill="url(#gdoc)" stroke="#8a9cb8" stroke-width=".6"/><path d="M11.7 0L19.5 7.9H11.7Z" fill="#f4f6fa"/></g><g transform="translate(75.5 203)"><g transform="translate(0 0) scale(1.0)"><path d="M5 25L31 24L33 20L12 21Z" fill="#a8a8a8" opacity=".8"/><path d="M1 4C2 2 6 1 9 1L13 0L17 3L23 3V12L2 22Z" fill="#e8d800" stroke="#c8b400" stroke-width=".5"/><path d="M4 26C3 22 4 17 8 15C16 12 25 12 31 13C31 17 29 22 27 24C20 27 10 27 4 26Z" fill="url(#gfold)" stroke="#c4ac00" stroke-width=".6"/><path d="M1 4L2 22L4 26C3 21 4 17 8 15L23 12V3L17 3L13 0L9 1C6 1 2 2 1 4Z" fill="#f8ec20" opacity=".9"/></g></g><g transform="translate(130.5 204)"><g transform="translate(0 0) scale(1.0)"><path d="M6 25L30 25L33 17L24 17Z" fill="#a8a8a8" opacity=".8"/><rect x="0" y="0" width="25" height="25" rx="1.5" fill="#1858c8"/><rect x="1" y="1" width="3" height="23" fill="#3878e0"/><rect x="5" y="1" width="15" height="11" fill="url(#gslab)"/><rect x="6" y="16" width="14" height="9" fill="#d8d8dc"/><rect x="8" y="18" width="4" height="7" rx="1.5" fill="#1858c8"/></g></g><g transform="translate(179 200)"><ellipse cx="12" cy="29" rx="11" ry="4.5" fill="#c8ccec" stroke="#8890c8" stroke-width=".8"/><path d="M10 22L14 22L15 29L9 29Z" fill="#9098d0"/><path d="M3 6L20 1L22 21L6 25Z" fill="#68b0e8" stroke="#5070b8" stroke-width="1"/><path d="M5 8L19 4L20 19L8 22Z" fill="#a8d8f8"/><path d="M8 13L12 18L18 5" stroke="#a01828" stroke-width="2.2" fill="none"/><circle cx="27" cy="19" r="6.5" fill="#e8a018"/><circle cx="27" cy="19" r="8" fill="none" stroke="#e8a018" stroke-width="3" stroke-dasharray="3 3.3"/><circle cx="27" cy="19" r="2.2" fill="#a86808"/><path d="M27 10V15" stroke="#333" stroke-width="1.6"/></g><g transform="translate(27 254)"><path d="M4 17H24" stroke="#c8c8c8" stroke-width="3"/><path d="M9 9C13 2 24 3 25 10C25.5 14 23 17 20 18" stroke="#9a9a9a" stroke-width="3.2" fill="none"/><path d="M0 6L12 8L3 15Z" fill="#9a9a9a"/></g><g transform="translate(78.5 254)"><path d="M4 17H24" stroke="#c8c8c8" stroke-width="3"/><path d="M18 9C14 2 3 3 2 10C1.5 14 4 17 7 18" stroke="#9a9a9a" stroke-width="3.2" fill="none"/><path d="M27 6L15 8L24 15Z" fill="#9a9a9a"/></g><g transform="translate(134 249)"><path d="M4 1L16 22M17 1L6 22" stroke="#a8a8a8" stroke-width="1.6"/><ellipse cx="4.5" cy="23.5" rx="3" ry="4.2" transform="rotate(25 4.5 23.5)" fill="none" stroke="#a8a8a8" stroke-width="1.5"/><ellipse cx="18" cy="23.5" rx="3" ry="4.2" transform="rotate(-25 18 23.5)" fill="none" stroke="#a8a8a8" stroke-width="1.5"/></g><g transform="translate(183 248.5)"><path d="M8 28L30 28L26 20Z" fill="#d0d0d0"/><path d="M0 0H12L17 5V22H0Z" fill="#cfcfcf"/><path d="M8 6H20L25 11V28H8Z" fill="#c4c4c4" stroke="#d8d8d8" stroke-width=".7"/></g><g transform="translate(237 246)"><path d="M10 32L28 32L25 24Z" fill="#b8b8b8"/><rect x="0" y="4" width="20" height="27" rx="1.5" fill="#d04020"/><rect x="1" y="5" width="5" height="25" fill="#e05030" opacity=".7"/><path d="M5 4L10 10L15 4Z" fill="#e8e8e8"/><rect x="6" y="0" width="8" height="5" rx="1" fill="#a8b0b8"/><path d="M9 13H19L24 18V31H9Z" fill="#e8b888" stroke="#b88858" stroke-width=".6"/><path d="M11 18H20M11 21H21M11 24H21" stroke="#b08050" stroke-width="1" stroke-dasharray="2 1"/></g><g transform="translate(19 324)"><path d="M6 1L36 0L35 6L8 7Z" fill="#e8e8e8" stroke="#a0a0a0" stroke-width=".8"/><path d="M3 6L9 7L5 36L0 35Z" fill="#e4e4e4" stroke="#a0a0a0" stroke-width=".8"/><path d="M10 2.5V5M14 2.5V5M18 2.5V5M22 2.5V5M26 2.5V5M30 2.5V5M3 12H6M3 17H5.5M2 22H5M2 27H4.5M1 32H4" stroke="#777" stroke-width=".8"/><path d="M8 7L35 6L33 34L5 36Z" fill="#fff" stroke="#b0b0b0" stroke-width=".6"/><g transform="translate(19 20)"><circle cx="-6" cy="-9" r="3.4" fill="#c84848"/><circle cx="6" cy="-9" r="3.4" fill="#c84848"/><ellipse cx="0" cy="-5.5" rx="7" ry="6" fill="#c84848"/><ellipse cx="0" cy="5" rx="9.5" ry="9" fill="#c84848"/><ellipse cx="-9" cy="1" rx="3" ry="6" fill="#c84848" transform="rotate(25 -9 1)"/><ellipse cx="9" cy="1" rx="3" ry="6" fill="#c84848" transform="rotate(-25 9 1)"/><ellipse cx="0" cy="6.5" rx="6" ry="6" fill="#f8c8c8"/><ellipse cx="0" cy="-3.5" rx="3" ry="2.3" fill="#f8c8c8"/><circle cx="-6.5" cy="12" r="3.2" fill="#e07070"/><circle cx="6.5" cy="12" r="3.2" fill="#e07070"/></g><path d="M28.5 13H32M30.2 13V19" stroke="#222" stroke-width="1.5"/></g><g transform="translate(61 338.0)"><path d="M0 0L5 5.5L0 11Z" fill="#000"/></g><g transform="translate(77.5 327.5)"><path d="M22 29L32 29L29 20Z" fill="#b0b0b0"/><rect width="27.5" height="29.5" fill="#000"/><g transform="translate(12.5 15)"><circle cx="-6" cy="-9" r="3.4" fill="#a8a8a8"/><circle cx="6" cy="-9" r="3.4" fill="#a8a8a8"/><ellipse cx="0" cy="-5.5" rx="7" ry="6" fill="#a8a8a8"/><ellipse cx="0" cy="5" rx="9.5" ry="9" fill="#a8a8a8"/><ellipse cx="-9" cy="1" rx="3" ry="6" fill="#a8a8a8" transform="rotate(25 -9 1)"/><ellipse cx="9" cy="1" rx="3" ry="6" fill="#a8a8a8" transform="rotate(-25 9 1)"/><ellipse cx="0" cy="6.5" rx="6" ry="6" fill="#707070"/><ellipse cx="0" cy="-3.5" rx="3" ry="2.3" fill="#707070"/><circle cx="-6.5" cy="12" r="3.2" fill="#d8d8d8"/><circle cx="6.5" cy="12" r="3.2" fill="#d8d8d8"/></g><path d="M21 6H25.5M23.2 6V12" stroke="#fff" stroke-width="1.5"/></g><g transform="translate(125 325)"><ellipse cx="26" cy="26" rx="13" ry="3.5" fill="#fff" opacity=".9" filter="url(#ib2)"/><ellipse cx="8" cy="25" rx="9" ry="3" fill="#a0a0a0" filter="url(#ib)"/><ellipse cx="15" cy="24.5" rx="9" ry="3.6" fill="#e01010"/><ellipse cx="14" cy="23.5" rx="5" ry="1.6" fill="#ff6060"/><path d="M14 23L10 13L14 5" stroke="#a00808" stroke-width="2.2" fill="none"/><path d="M11 4L24 1L27 6L19 15Z" fill="#e01818"/><path d="M19 15L27 6L26 10Z" fill="#ffd0d0"/><circle cx="10" cy="13" r="1.8" fill="#700"/></g><g transform="translate(179 324)"><rect width="26" height="30.5" fill="#7a8a40"/><rect width="26" height="13.7" fill="#9aa868"/><path d="M2.6 30.5C2.6 18.3 5.2 6.1 13.0 3.7C20.8 6.1 23.4 18.3 24.7 30.5Z" fill="#1c1408"/><ellipse cx="13.0" cy="11.6" rx="4.4" ry="6.1" fill="#e0b070"/><path d="M9.4 18.9L16.6 18.9L15.6 25.9L10.4 25.9Z" fill="#d0a060"/><path d="M6.5 28.1L19.5 28.1" stroke="#c09050" stroke-width="3.1"/><path d="M11 26L27 18L35 24L20 36Z" fill="#f09020"/><path d="M11 26L20 36L19 38L10 29Z" fill="#f8e8c8"/><path d="M20 36L35 24L35 27L19 38Z" fill="#c06808"/><path d="M13 26L27 19.5" stroke="#ffc060" stroke-width="1.2"/></g><g transform="translate(30 461)"><path d="M1 22L24 15" stroke="#b4b4b4" stroke-width="2.4" filter="url(#ib)"/><path d="M2.5 19L13 1.5L16.5 3.5L5.5 21Z" fill="#e02020"/><path d="M13 1.5L14.5 2.3L4 20Z" fill="#ff7070"/><path d="M2.5 19L5.5 21L0.5 23.5Z" fill="#806040"/></g><g transform="translate(61 466.5)"><path d="M0 0L5 5.5L0 11Z" fill="#000"/></g><g transform="translate(79 461)"><ellipse cx="21" cy="23" rx="9" ry="3" fill="none" stroke="#a8a8a8" stroke-width="1.6"/><path d="M8 8L10 24C14 27 21 26 24 22L24 8Z" fill="#8aa8a8"/><path d="M12 10L14 24" stroke="#c8e0e0" stroke-width="2"/><ellipse cx="16" cy="8" rx="8" ry="4.5" fill="#c8d8d8" stroke="#809898" stroke-width=".8" transform="rotate(-10 16 8)"/><path d="M4 6C8 1 16 0 22 4C18 3 12 5 10 9C8 12 9 16 6 18C2 20 0 12 4 6Z" fill="#e01818"/><path d="M8 5C11 3 15 3 18 4" stroke="#ff8080" stroke-width="1.4" fill="none"/></g><g transform="translate(113.5 466.5)"><path d="M0 0L5 5.5L0 11Z" fill="#000"/></g><g transform="translate(134 460)"><path d="M14 21C18 19 22 19 26 19" stroke="#b8b8b8" stroke-width="2.2" filter="url(#ib)"/><circle cx="14.5" cy="4.5" r="4.2" fill="#901838"/><circle cx="13.5" cy="3.5" r="1.4" fill="#d06080"/><rect x="9" y="8" width="10" height="2.6" rx="1" transform="rotate(15 14 9)" fill="#601020"/><path d="M11.5 10.5L14.5 11.5L6.5 23L3.5 22Z" fill="#e8e8f4" stroke="#a0a0b8" stroke-width=".6"/><path d="M7.5 17L10 18L6.5 23L3.5 22Z" fill="#2838c0"/><path d="M3.5 22L5 23L1 26Z" fill="#888"/></g><g transform="translate(179 461)"><path d="M3 20C8 25 25 24 31 19" stroke="#b0b0b0" stroke-width="2" fill="none" filter="url(#ib)"/><path d="M1 8C2 2 8 0 12 3C13 6 14 8 18 8C22 8 24 4 28 5C33 7 33 15 29 19C22 24 8 24 3 19C0 16 0 11 1 8Z" fill="#6c4030"/><ellipse cx="9" cy="7" rx="2.2" ry="3.2" fill="#f0f0f0" transform="rotate(-30 9 7)"/><circle cx="6" cy="15" r="2.2" fill="#e01818"/><circle cx="11" cy="18.5" r="2.1" fill="#f8c010"/><circle cx="17" cy="19" r="2.1" fill="#40c028"/><circle cx="22.5" cy="17.5" r="2.1" fill="#20b8e0"/><circle cx="27" cy="14" r="2.1" fill="#2828c8"/></g><g transform="translate(218 466.5)"><path d="M0 0L5 5.5L0 11Z" fill="#000"/></g><g transform="translate(231 460)"><path d="M4 22H36" stroke="#b8b8b8" stroke-width="3" filter="url(#ib)"/><path d="M22 3C32 6 34 18 25 23" stroke="#3838b0" stroke-width="1.6" fill="none"/><path d="M21 1.5L24 5L19.5 5.5Z" fill="#181860"/><circle cx="32" cy="13" r="1.3" fill="#181860"/><path d="M1 12L8 3L14 1L19 4L25 9L24 17L19 23L11 25L5 20Z" fill="#f0e020" stroke="#c8b810" stroke-width=".6"/><path d="M13 13L19 4M13 13L24 17M13 13L5 20" stroke="#d0c010" stroke-width=".8"/></g><rect x="16.5" y="530.5" width="42" height="43.5" fill="#fafafa"/><path d="M16.5 574V530.5H58.5" stroke="#8a8a8a" stroke-width="1.2" fill="none"/><g transform="translate(25 540)"><path d="M3 18L16 16L22 24" stroke="#c0c0c0" stroke-width="3.5" fill="none" filter="url(#ib)"/><path d="M1 1L19 9L12 11.5L21 21L17.5 24L9 14L5 19Z" fill="#585858"/></g><g transform="translate(61 547.5)"><path d="M0 0L5 5.5L0 11Z" fill="#000"/></g><g transform="translate(72 534)"><path d="M9 16H27M18 7V25" stroke="#505050" stroke-width="3"/><path d="M5 16L10 11.5V20.5ZM31 16L26 11.5V20.5ZM18 3L13.5 8H22.5ZM18 29L13.5 24H22.5Z" fill="#505050"/><path d="M22 4C29 6 33 12 32 19" stroke="#505050" stroke-width="2.8" fill="none"/><path d="M19 1L26 2L22 8Z" fill="#505050"/><path d="M4 14C3 22 8 29 15 31" stroke="#505050" stroke-width="2.8" fill="none"/><path d="M18 34L11 33L15 27Z" fill="#505050"/><path d="M2 5H12M4 9H14" stroke="#505050" stroke-width="1.8"/><path d="M12 2.5L16 5L12 7.5ZM4 6.5L0 9L4 11.5Z" fill="#505050"/><path d="M28 26V35M32.5 26V35" stroke="#505050" stroke-width="1.8"/><path d="M25.5 29L28 24L30.5 29ZM30 32L32.5 37L35 32Z" fill="#505050"/></g><g transform="translate(131 540.5)"><path d="M4 27H28L30 22" stroke="#b8b8b8" stroke-width="3" fill="none" filter="url(#ib)"/><rect x="1.3" y="1.3" width="23.5" height="23" fill="none" stroke="#444" stroke-width="2.6"/><path d="M3 21H23" stroke="#c0c0c0" stroke-width="2"/></g><g transform="translate(166 547.5)"><path d="M0 0L5 5.5L0 11Z" fill="#000"/></g><g transform="translate(182 539)"><path d="M6 22H30" stroke="#b8b8b8" stroke-width="2.5" filter="url(#ib)"/><path d="M2 2H28V8H26L24 6H18V23L22 26V28H8V26L12 23V6H6L4 8H2Z" fill="#f0a020" stroke="#b87010" stroke-width=".8"/><path d="M13 6H17V24H13Z" fill="#ffc040" opacity=".6"/><circle cx="2" cy="2" r="1.4" fill="#1818a0"/><circle cx="28" cy="2" r="1.4" fill="#1818a0"/><circle cx="2" cy="8" r="1.4" fill="#1818a0"/><circle cx="28" cy="8" r="1.4" fill="#1818a0"/><circle cx="6" cy="6" r="1.4" fill="#1818a0"/><circle cx="24" cy="6" r="1.4" fill="#1818a0"/><circle cx="12" cy="6" r="1.4" fill="#1818a0"/><circle cx="18" cy="6" r="1.4" fill="#1818a0"/><circle cx="8" cy="28" r="1.4" fill="#1818a0"/><circle cx="22" cy="28" r="1.4" fill="#1818a0"/><circle cx="12" cy="23" r="1.4" fill="#1818a0"/><circle cx="18" cy="23" r="1.4" fill="#1818a0"/><circle cx="8" cy="26" r="1.4" fill="#1818a0"/><circle cx="22" cy="26" r="1.4" fill="#1818a0"/></g><g transform="translate(229 541)"><path d="M6 20H34" stroke="#d0d0d0" stroke-width="3" filter="url(#ib)"/><path d="M1 11L11 1L14 4" stroke="#b0b0b0" stroke-width="1.3" fill="none"/><path d="M1 11L10 19" stroke="#b0b0b0" stroke-width="1.3"/><path d="M14 5C20 0 30 2 33 9C35 14 32 18 28 19L16 18C12 14 12 9 14 5Z" fill="#c4c4c4"/><path d="M18 9C22 5 28 6 30 11M17 13C22 10 27 12 29 16" stroke="#9c9c9c" stroke-width="1.3" fill="none"/><path d="M8 18L22 21" stroke="#b8b8b8" stroke-width="1.4"/></g><g transform="translate(271 547.5)"><path d="M0 0L5 5.5L0 11Z" fill="#000"/></g><g transform="translate(20.5 584)"><path d="M14 24L36 28" stroke="#b4b4b4" stroke-width="3" filter="url(#ib)"/><path d="M22 17L35 22L34 25L20 22Z" fill="#f0e040" stroke="#b0a020" stroke-width=".5"/><path d="M1 8C2 2 10 0 17 2C23 4 25 9 24 16L22 23L5 20C1 18 0 13 1 8Z" fill="#f0b020" stroke="#b88010" stroke-width=".6"/><path d="M4 9C6 5 13 4 18 6C21 8 22 12 21 15C15 17 7 16 4 13Z" fill="#283890"/><path d="M4 13C8 16 15 17 21 15L20 19C14 21 8 20 5 18Z" fill="#e8e0d8"/><circle cx="25" cy="18" r="2.2" fill="#909090"/></g><g transform="translate(74.5 581.5)"><rect width="32.5" height="32.5" rx="3" fill="#a0d8a0"/><rect x="1.5" y="1.5" width="29.5" height="29.5" rx="2" fill="#109010"/><path d="M12.5 5.5H20V12.5H27V20H20V27H12.5V20H5.5V12.5H12.5Z" fill="none" stroke="#c8f0c8" stroke-width="1.8"/></g><g transform="translate(126 580)"><rect width="36.5" height="36" fill="url(#gabc)"/><path d="M0 1H36.5M0 22.5H36.5M1 0V36M30.5 0V36" stroke="#0c2c0c" stroke-width="1.6"/><circle cx="6.5" cy="6.5" r="2.6" fill="#0c2c0c"/><rect x="13" y="3.5" width="4" height="6" fill="#0c2c0c"/><path d="M19 9.5L24 3.5L29 9.5Z" fill="#0c2c0c"/><circle cx="35.5" cy="6.5" r="2.4" fill="#0c2c0c"/><text x="3.5" y="20" font-family="Liberation Sans,sans-serif" font-size="10.5" fill="#0c3c0c" textLength="25" lengthAdjust="spacingAndGlyphs">ABC</text><clipPath id="abcc"><rect x="30" y="8" width="6.5" height="14"/></clipPath><text x="32" y="20" font-family="Liberation Sans,sans-serif" font-size="10.5" fill="#0c3c0c" clip-path="url(#abcc)">E</text><circle cx="6.5" cy="28" r="2.6" fill="#1c4c1c"/><rect x="13" y="25" width="4" height="6" fill="#1c4c1c"/><path d="M19 31L24 25L29 31Z" fill="#1c4c1c"/><circle cx="35.5" cy="28" r="2.4" fill="#1c4c1c"/><path d="M3 35.5H9M12 35.5H18M21 35.5H28" stroke="#1c4c1c" stroke-width="1.4"/></g><g transform="translate(180 581.5)"><path d="M1 1C10 4 24 4 33 1C30 10 30 22 33 32C24 29 10 29 1 32C4 22 4 10 1 1Z" fill="#f4f4f4" stroke="#a0a0a0" stroke-width="1.4"/><path d="M2.5 8C11 10 23 10 31.5 8M3 16.5H31M2.5 25C11 23 23 23 31.5 25M9 3C11 12 11 21 9 30M17 3.5V29.5M25 3C23 12 23 21 25 30" stroke="#a8a8a8" stroke-width="1.1" fill="none"/><ellipse cx="17" cy="16.5" rx="7" ry="10.5" fill="none" stroke="#a0a0a0" stroke-width="2.4"/></g><g transform="translate(236 584)"><circle cx="9.5" cy="3.5" r="2.6" fill="none" stroke="#a8a8a8" stroke-width="1.5"/><circle cx="24.5" cy="3.5" r="2.6" fill="none" stroke="#a8a8a8" stroke-width="1.5"/><circle cx="9.5" cy="12.5" r="2.6" fill="none" stroke="#a8a8a8" stroke-width="1.5"/><circle cx="24.5" cy="12.5" r="2.6" fill="none" stroke="#a8a8a8" stroke-width="1.5"/><circle cx="17" cy="17.5" r="2.6" fill="none" stroke="#a8a8a8" stroke-width="1.5"/><circle cx="17" cy="8" r="1" fill="#a8a8a8"/><rect x="-4" y="17.5" width="5" height="5" fill="none" stroke="#a8a8a8" stroke-width="1.5"/><rect x="5" y="17.5" width="5" height="5" fill="none" stroke="#a8a8a8" stroke-width="1.5"/><rect x="5" y="26.5" width="5" height="5" fill="none" stroke="#a8a8a8" stroke-width="1.5"/></g><g transform="translate(20.5 626.5)"><rect x="4.5" y="0.5" width="4" height="4" fill="#fff" stroke="#000" stroke-width="1.3"/><path d="M6 27L14 18L21 23L25 29L32 23" stroke="#222" stroke-width="1.6" fill="none"/><circle cx="6" cy="27" r="3.2" fill="#f4f490" stroke="#222" stroke-width=".9"/><circle cx="6" cy="27" r=".9" fill="#000"/><circle cx="14" cy="18" r="3.2" fill="#f4f490" stroke="#222" stroke-width=".9"/><circle cx="14" cy="18" r=".9" fill="#000"/><circle cx="21" cy="23" r="3.2" fill="#f4f490" stroke="#222" stroke-width=".9"/><circle cx="21" cy="23" r=".9" fill="#000"/><circle cx="32" cy="23" r="3.2" fill="#f4f490" stroke="#222" stroke-width=".9"/><circle cx="32" cy="23" r=".9" fill="#000"/><path d="M22 27L25.5 31L29 27Z" fill="#222"/></g><g transform="translate(74 631)"><path d="M1 10C5 4 9 2 13 2L20 10L29 3" stroke="#a8a8a8" stroke-width="1.8" fill="none"/><path d="M14 4V12M12 10L14 13L16 10" stroke="#b0b0b0" stroke-width="1.2" fill="none"/><path d="M3 22C8 16 14 14 20 16C25 17 29 20 32 22M6 27C12 22 22 22 30 27M10 19C14 23 20 23 24 19" stroke="#cfcfcf" stroke-width="1.1" fill="none" stroke-dasharray="3 1.5"/></g><g transform="translate(125 624)"><path d="M2 2C16 6 16 30 2 34" stroke="#9a9a9a" stroke-width="2.4" fill="none"/><path d="M25 1C38 8 38 28 25 35" stroke="#dcdcdc" stroke-width="1.2" fill="none"/><rect x="0" y="0" width="4.5" height="4.5" fill="#9a9a9a"/><rect x="0" y="32" width="4.5" height="4.5" fill="#9a9a9a"/><rect x="17" y="3" width="4" height="4" fill="#9a9a9a"/><rect x="23" y="0" width="4" height="4" fill="#9a9a9a"/><rect x="17" y="27" width="4" height="4" fill="#9a9a9a"/><rect x="23" y="32" width="4" height="4" fill="#9a9a9a"/><rect x="32.5" y="15.5" width="3.5" height="4" fill="none" stroke="#9a9a9a"/><path d="M6 3L17 5M6 33L17 29M16 18H28" stroke="#9a9a9a" stroke-width="1.2"/><path d="M26 16L30 18L26 20Z" fill="#9a9a9a"/></g><g transform="translate(177 624)"><path d="M1 1L14 8" stroke="#111" stroke-width="3"/><path d="M1 35L14 28" stroke="#111" stroke-width="3"/><path d="M12 6C22 12 22 24 12 30" stroke="#f0f090" stroke-width="3" fill="none" stroke-dasharray="3 1.2"/><path d="M16 8L36 18L16 28" stroke="#7c7c7c" stroke-width="2.6" fill="none"/></g><g transform="translate(230 623.5)"><path d="M9 30L29 9" stroke="#f4f4a0" stroke-width="4.5"/><path d="M23 1L38 13M36 2L27 12" stroke="#000" stroke-width="3.2"/><path d="M1 25L15 36M13 26L3 37" stroke="#000" stroke-width="3.2"/><path d="M16 14L20 13L28 20L26 22Z" fill="#fff" stroke="#000" stroke-width=".9"/><path d="M16 22H28" stroke="#000" stroke-width="1.6"/><circle cx="31.5" cy="19.5" r="2.7" fill="none" stroke="#000" stroke-width="1.8"/><circle cx="29" cy="27" r="2.7" fill="none" stroke="#000" stroke-width="1.8"/></g><g transform="translate(20.5 672)"><ellipse cx="18" cy="28" rx="18" ry="5" fill="#a0a0a0" filter="url(#ib)"/><path d="M4 7C2 16 1 22 3 25C10 31 26 31 33 25C35 22 34 16 32 7Z" fill="url(#gblue)"/><ellipse cx="18" cy="7" rx="14.5" ry="4.2" fill="#a8a8e8" stroke="#505058" stroke-width="1.6"/><path d="M6 21C12 17 15 15 18 14C21 15 24 17 30 21" stroke="#d8d040" stroke-width="1.6" fill="none"/><path d="M17 9V26" stroke="#e0e0ff" stroke-width="2.5" opacity=".7"/></g><g transform="translate(72 668)"><path d="M17 2C12 8 8 16 3 24" stroke="#b4b4b4" stroke-width="1.8" fill="none"/><path d="M18 1H30" stroke="#c0c0c0" stroke-width="1.4"/><path d="M29 -1L32 1L29 3Z" fill="#c0c0c0"/><path d="M17 15L24 20" stroke="#c4c4c4" stroke-width="1.4"/><path d="M2 25C4 30 6 33 8 36" stroke="#d0d0d0" stroke-width="1.3" fill="none" stroke-dasharray="2.5 1.5"/><path d="M22 4C30 10 28 24 20 30" stroke="#e4e4e4" stroke-width="1.2" fill="none"/><circle cx="17" cy="2" r="1.4" fill="#b4b4b4"/><circle cx="3" cy="25" r="1.4" fill="#c4c4c4"/></g><g transform="translate(129.5 673)"><path d="M12 0V32" stroke="#8c8c8c" stroke-width="1.1" stroke-dasharray="5 1.5 1.5 1.5"/><path d="M9 3C3 4 3 10 4 14C5 18 2 20 1 24L0 29H9" stroke="#9c9c9c" stroke-width="1.3" fill="none"/><path d="M15 3C21 4 21 10 20 14C19 18 22 20 23 24" stroke="#e4e4e4" stroke-width="1.1" fill="none"/><path d="M14 20C18 16 23 17 24 21" stroke="#c4c4c4" stroke-width="1.2" fill="none" stroke-dasharray="2 1.5"/></g><g transform="translate(177 669)"><path d="M6 35L36 32L37 28Z" fill="#b8b8b8" filter="url(#ib)"/><path d="M2 12C2 8 6 6 10 6L14 5L20 8L30 9V22L4 30Z" fill="#e8d800"/><path d="M5 36C2 30 3 24 8 22C18 19 30 20 37 21C37 26 35 31 32 33C24 36 12 37 5 36Z" fill="url(#gfold)" stroke="#c4ac00" stroke-width=".6"/><path d="M2 12L3 30L5 36C3 29 4 25 8 22L20 20L14 5L10 6C6 6 2 8 2 12Z" fill="#f8ec20"/><path d="M26 1L29 11L38 13L30 18L31 27L24 21L15 24L19 16L12 9L22 10Z" fill="#f8e820" stroke="#333" stroke-width="1.8" stroke-linejoin="round"/></g><g transform="translate(19 751)"><path d="M8 26H30L32 22" stroke="#d0d0d0" stroke-width="3" fill="none" filter="url(#ib)"/><path d="M1.5 0V33" stroke="#8c8c8c" stroke-width="1.3"/><rect x="16" y="10.5" width="16" height="13.5" fill="none" stroke="#8c8c8c" stroke-width="2"/><path d="M6 17H15" stroke="#8c8c8c" stroke-width="2"/><path d="M4 17L9 13.5V20.5Z" fill="#8c8c8c"/></g><g transform="translate(61 762.5)"><path d="M0 0L5 5.5L0 11Z" fill="#000"/></g><g transform="translate(74.5 752.5)"><ellipse cx="16" cy="25" rx="12" ry="3" fill="#b8c0c8" filter="url(#ib)"/><path id="tcirc" d="M10.5 27A11.3 11.3 0 1 1 21.5 27" fill="none"/><text font-family="Liberation Sans,sans-serif" font-weight="bold" font-size="7.2" fill="#111"><textPath href="#tcirc" startOffset="0" textLength="58" lengthAdjust="spacing">Text on a Curve</textPath></text></g><g transform="translate(127 752.5)"><text x="0" y="13.5" font-family="Liberation Sans,sans-serif" font-weight="bold" font-size="19" fill="#000" textLength="32" lengthAdjust="spacingAndGlyphs">Nes</text><text x="12" y="21.5" font-family="Liberation Sans,sans-serif" font-weight="bold" font-size="19" fill="#000" textLength="20" lengthAdjust="spacingAndGlyphs">ng</text><text x="1" y="28" font-family="Liberation Sans,sans-serif" font-weight="bold" font-size="17" fill="#000">ti</text></g><g transform="translate(181 757)"><path d="M4 25H28L30 21" stroke="#d8d8d8" stroke-width="3" fill="none" filter="url(#ib)"/><rect x="1" y="1" width="25" height="21" fill="none" stroke="#a8a8a8" stroke-width="1.6" stroke-dasharray="3 1"/><rect x="5" y="5" width="14" height="9" fill="none" stroke="#a8a8a8" stroke-width="1.8"/><rect x="9" y="9" width="14" height="9" fill="none" stroke="#a8a8a8" stroke-width="1.8"/><path d="M19 1V9M1 15H9" stroke="#a8a8a8" stroke-width="1.4"/></g><g transform="translate(218 762.5)"><path d="M0 0L5 5.5L0 11Z" fill="#000"/></g><g transform="translate(231 756)"><path d="M4 22H30" stroke="#d8d8d8" stroke-width="3" filter="url(#ib)"/><rect x="1" y="1" width="17" height="13.5" fill="#f0f0f0" stroke="#8c8c8c" stroke-width="1.5"/><circle cx="19.5" cy="15.5" r="9.5" fill="#e4e4e4" stroke="#8c8c8c" stroke-width="1.5"/><path d="M11 8H18V14" stroke="#c8c8c8" stroke-width="1.2" fill="none"/><path d="M18 8V15M14 15H26" stroke="#c8c8c8" stroke-width="1"/></g><g transform="translate(271 762.5)"><path d="M0 0L5 5.5L0 11Z" fill="#000"/></g><g transform="translate(24 799)"><path d="M2 24L12 28L24 22" stroke="#d8d8d8" stroke-width="3" fill="none" filter="url(#ib)"/><path d="M1 5C8 1 14 0 20 2L25 6V12" stroke="#b4b4b4" stroke-width="1.8" fill="none"/><path d="M1 17L11 23L25 14" stroke="#b4b4b4" stroke-width="1.8" fill="none"/></g><g transform="translate(61 806.5)"><path d="M0 0L5 5.5L0 11Z" fill="#000"/></g><clipPath id="wvc"><rect x="72.5" y="794" width="37.5" height="37"/></clipPath><g clip-path="url(#wvc)"><g transform="translate(72.5 794)"><path d="M0 5.0C4 0.0 9 0.0 13 3.5C17 7.0 21 7.0 25 3.0C29 -1.0 33 0.0 37 3.0" stroke="#222" stroke-width="2" fill="none"/><path d="M0 10.3C4 5.3 9 5.3 13 8.8C17 12.3 21 12.3 25 8.3C29 4.3 33 5.3 37 8.3" stroke="#222" stroke-width="2" fill="none"/><path d="M0 15.6C4 10.6 9 10.6 13 14.1C17 17.6 21 17.6 25 13.6C29 9.6 33 10.6 37 13.6" stroke="#222" stroke-width="2" fill="none"/><path d="M0 20.9C4 15.9 9 15.9 13 19.4C17 22.9 21 22.9 25 18.9C29 14.9 33 15.9 37 18.9" stroke="#222" stroke-width="2" fill="none"/><path d="M0 26.2C4 21.2 9 21.2 13 24.7C17 28.2 21 28.2 25 24.2C29 20.2 33 21.2 37 24.2" stroke="#222" stroke-width="2" fill="none"/><path d="M0 31.5C4 26.5 9 26.5 13 30.0C17 33.5 21 33.5 25 29.5C29 25.5 33 26.5 37 29.5" stroke="#222" stroke-width="2" fill="none"/><path d="M0 36.8C4 31.8 9 31.8 13 35.3C17 38.8 21 38.8 25 34.8C29 30.8 33 31.8 37 34.8" stroke="#222" stroke-width="2" fill="none"/><path d="M19 7L22.5 14.5L30 14L25.5 20L29 27L21 25L15 30L15 22L8 18.5L15.5 16Z" fill="#f4f4f4" stroke="#d01828" stroke-width="1.8" stroke-linejoin="round"/></g></g><g transform="translate(129 794)"><ellipse cx="16" cy="32" rx="13" ry="3" fill="#dcdcdc" filter="url(#ib)"/><path d="M12 1C2 5 0 20 6 28C10 33 16 34 18 32" stroke="#b8b8b8" stroke-width="1.6" fill="none"/><path d="M12 1C8 10 10 20 18 26" stroke="#b8b8b8" stroke-width="1.4" fill="none"/><path d="M14 3C24 1 32 10 30 22C29 28 24 32 20 33" stroke="#b8b8b8" stroke-width="1.6" fill="none"/><path d="M14 3C22 8 26 16 22 28" stroke="#b8b8b8" stroke-width="1.4" fill="none"/><path d="M8 8C14 4 22 6 26 12" stroke="#c8c8c8" stroke-width="1.2" fill="none"/><path d="M24 30L30 34" stroke="#c0c0c0" stroke-width="1.4"/></g><g transform="translate(18.5 876.5)"><path d="M1 4C1 2 3 1 5 1L8 0L11 2H14V5L12 9H2Z" fill="#108888"/><path d="M2 9L4 4.5H15L12 9Z" fill="#d0f0f0" stroke="#086868" stroke-width=".7"/><path d="M15 2C18 1 19 4 18 6" stroke="#000" stroke-width="1.3" fill="none"/><path d="M16 5.5L18.2 8L19.8 5Z" fill="#000"/></g><g transform="translate(19.5 887)"><ellipse cx="19" cy="19" rx="17" ry="3" fill="#c8c8c8" filter="url(#ib)"/><path d="M1 12C1 6 8 3 14 5C18 3 22 0 27 1C30 0 33 2 32 5C36 7 37 11 34 13C30 13 27 15 22 16C18 20 12 22 8 21C2 20 0 16 1 12Z" fill="url(#ggold)"/><ellipse cx="9" cy="11" rx="5" ry="3.5" fill="#fce890" opacity=".8"/><ellipse cx="26" cy="6" rx="4" ry="3" fill="#f8dc78" opacity=".8"/><path d="M12 17C16 15 20 12 22 9" stroke="#a87818" stroke-width="1.2" fill="none"/></g><g transform="translate(61 887.5)"><path d="M0 0L5 5.5L0 11Z" fill="#000"/></g><g transform="translate(72.5 881.5)"><path d="M8 22L34 22L35 18Z" fill="#c8c8c8" filter="url(#ib)"/><path d="M0 7L10 1L35 14L26 20Z" fill="#f4dc80"/><path d="M0 7L26 20L26 23L0 10Z" fill="#c8a040"/><path d="M26 20L35 14V17L26 23Z" fill="#a88020"/><path d="M3 7L10 3L31 14" stroke="#fff0b0" stroke-width="1.2" fill="none"/></g><g transform="translate(113.5 887.5)"><path d="M0 0L5 5.5L0 11Z" fill="#000"/></g><g transform="translate(129 876)"><ellipse cx="15" cy="31" rx="14" ry="2.5" fill="#c0c0c0" filter="url(#ib)"/><path d="M1 10C6 8 9 4 13 1C16 3 18 3 20 5C24 7 28 8 30 10C24 13 20 13 15 14C10 13 5 12 1 10Z" fill="url(#ggold)"/><path d="M1 29C8 27 11 22 15 17C19 22 22 27 29 29C22 32 8 32 1 29Z" fill="url(#ggold)"/><path d="M15 13V24" stroke="#333" stroke-width="1.1"/><path d="M13 22L15 25.5L17 22Z" fill="#333"/></g><g transform="translate(184 875)"><ellipse cx="14" cy="33" rx="13" ry="2.5" fill="#c0c0c0" filter="url(#ib)"/><ellipse cx="13.5" cy="7.5" rx="12" ry="7.5" fill="url(#ggoldr)"/><path d="M13.5 14V24" stroke="#333" stroke-width="1.1"/><path d="M11.5 22L13.5 25.5L15.5 22Z" fill="#333"/><path d="M2 26C2 20 8 18 13 21C18 17 25 20 25 26C26 31 20 34 13 33C6 34 1 31 2 26Z" fill="url(#ggoldr)"/><path d="M8 24C10 28 14 29 18 25" stroke="#a87018" stroke-width="1.1" fill="none"/></g><g transform="translate(234 874.5)"><ellipse cx="16" cy="34" rx="14" ry="2.5" fill="#c0c0c0" filter="url(#ib)"/><path d="M2 8C2 3 8 1 12 4C15 0 21 0 24 3C29 2 31 7 28 10C26 14 20 16 15 15C8 17 2 13 2 8Z" fill="url(#ggoldr)"/><path d="M9 9C12 12 17 11 20 7" stroke="#a87018" stroke-width="1.1" fill="none"/><path d="M3 27C3 22 9 20 13 23C16 19 22 19 25 22C30 21 32 26 29 29C27 33 21 35 16 34C9 36 3 32 3 27Z" fill="#e4d4b0" stroke="#c4b48c" stroke-width=".6"/><path d="M10 28C13 31 18 30 21 26" stroke="#b8a880" stroke-width="1.1" fill="none"/><path d="M15.5 14V28" stroke="#222" stroke-width="1.1"/><path d="M13.5 17L15.5 13.5L17.5 17ZM13.5 25L15.5 28.5L17.5 25Z" fill="#222"/></g><text x="26" y="952.5" font-family="Liberation Serif,serif" font-style="italic" font-size="43" fill="#ececec" stroke="#c4c4c4" stroke-width="1.1">S</text><clipPath id="knc"><ellipse cx="92" cy="937" rx="17.5" ry="15"/></clipPath><g clip-path="url(#knc)"><g transform="translate(74 921)"><ellipse cx="18" cy="16" rx="17.5" ry="15" fill="#ececec" stroke="#c4c4c4" stroke-width="1.2"/><path d="M-7.0 30L13.0 2M-7.0 2L13.0 30" stroke="#c8c8c8" stroke-width="1.1"/><path d="M-2.0 30L18.0 2M-2.0 2L18.0 30" stroke="#c8c8c8" stroke-width="1.1"/><path d="M3.0 30L23.0 2M3.0 2L23.0 30" stroke="#c8c8c8" stroke-width="1.1"/><path d="M8.0 30L28.0 2M8.0 2L28.0 30" stroke="#c8c8c8" stroke-width="1.1"/><path d="M13.0 30L33.0 2M13.0 2L33.0 30" stroke="#c8c8c8" stroke-width="1.1"/><path d="M18.0 30L38.0 2M18.0 2L38.0 30" stroke="#c8c8c8" stroke-width="1.1"/><path d="M23.0 30L43.0 2M23.0 2L43.0 30" stroke="#c8c8c8" stroke-width="1.1"/></g></g><ellipse cx="92" cy="937" rx="17.5" ry="15" fill="none" stroke="#c0c0c0" stroke-width="1.3"/><g transform="translate(130 919.5)"><ellipse cx="14" cy="33" rx="12" ry="2.5" fill="#b8b8b8" filter="url(#ib)"/><path d="M4 3L8 1L12 5L18 4L20 8L12 11Z" fill="#f0d838" stroke="#b89c18" stroke-width=".6"/><circle cx="13.5" cy="6.5" r="1.3" fill="#c02020"/><path d="M1 22L12 15L26 23L14 31Z" fill="#384888"/><path d="M1 22L14 31V34L1 25Z" fill="#283468"/><path d="M14 31L26 23V26L14 34Z" fill="#1c2450"/><path d="M10 19L13 24C16 26 19 24 18 22C17 20 14 21 12 22" stroke="#f0d838" stroke-width="1.8" fill="none"/></g><g transform="translate(166 933.5)"><path d="M0 0L5 5.5L0 11Z" fill="#000"/></g><g transform="translate(183.5 921)"><ellipse cx="14" cy="33" rx="12" ry="2.5" fill="#b8b8b8" filter="url(#ib)"/><path d="M1 7L13 1L26 7L13 13Z" fill="#f8d820"/><path d="M1 7L13 13V15L1 9Z" fill="#d0a810"/><path d="M13 13L26 7V9L13 15Z" fill="#b89008"/><ellipse cx="13" cy="6" rx="3.5" ry="1.8" fill="#e02818"/><path d="M13 13V22" stroke="#333" stroke-width="1.1"/><path d="M11 20L13 23.5L15 20Z" fill="#333"/><path d="M1 25L13 19L26 25L13 32Z" fill="#f8d820"/><path d="M1 25L13 32V34L1 27Z" fill="#d0a810"/><path d="M13 32L26 25V27L13 34Z" fill="#b89008"/><ellipse cx="13" cy="25.5" rx="3.5" ry="2" fill="#a01808"/></g><g transform="translate(218 933.5)"><path d="M0 0L5 5.5L0 11Z" fill="#000"/></g><g transform="translate(230 920)"><path d="M2 3H35L37 30V35H0V30Z" fill="#b4b4f0"/><path d="M2 3H12L10 30H0Z" fill="#9c9ce8"/><rect x="0" y="30" width="37" height="5" fill="#8888e0"/><rect x="18" y="15" width="19" height="16" fill="#c8c8d8"/><path d="M12 3H20V30H10Z" fill="#e0e0ff" opacity=".7"/><path d="M5 14C5 4 12 0 18 0C26 0 30 5 30 12" stroke="#e8d020" stroke-width="4" fill="none"/><path d="M5 14C5 4 12 0 18 0C26 0 30 5 30 12" stroke="#a89010" stroke-width=".7" fill="none" transform="translate(0 -2)"/><path d="M24 11H36L30 18Z" fill="#e8d020" stroke="#a89010" stroke-width=".6"/></g><g transform="translate(20 965.5)"><ellipse cx="18" cy="30" rx="16" ry="3" fill="#c0c0c0" filter="url(#ib)"/><path d="M18 0L23 11L36 12L27 21L30 34L18 27L6 34L9 21L0 12L13 11Z" fill="url(#gbluer)"/><path d="M18 14L30 34L18 27L6 34Z" fill="#6868c8" opacity=".55"/><circle cx="18" cy="13" r="5.5" fill="#d8d8ff"/></g><g transform="translate(72.5 965)"><ellipse cx="22" cy="31" rx="15" ry="2.5" fill="#c0c0c0" filter="url(#ib)"/><path d="M1 14V10H8C8 -1 28 -1 28 10H36V14" stroke="#222" stroke-width="1.6" fill="none"/><path d="M5 20L24 11C30 10 36 16 34 22L16 33C8 32 4 26 5 20Z" fill="url(#gblue)"/><ellipse cx="10.5" cy="25.5" rx="5" ry="7" fill="#b8b8f0" transform="rotate(-25 10.5 25.5)"/><path d="M2 23L22 34" stroke="#c0c0f0" stroke-width="4"/><path d="M14 17C18 13 24 13 27 17M8 26L16 31" stroke="#d02020" stroke-width="1.4" fill="none"/></g><g transform="translate(125 972)"><path d="M14 22L36 20" stroke="#c8c8c8" stroke-width="3" filter="url(#ib)"/><path d="M0 7C8 0 22 -2 30 6C35 11 36 17 35 22L27 24C27 18 24 13 18 12C14 12 10 14 8 15Z" fill="#d05848"/><path d="M4 5C12 1 22 1 29 7" stroke="#f09080" stroke-width="1.6" fill="none"/><path d="M0 7L8 15L5 17L-1 10Z" fill="#f8e8c0"/><path d="M27 24L18 17C21 15 25 17 27 24Z" fill="#f8e8c0"/><path d="M10 6L16 12M18 3L21 12M26 5L25 14" stroke="#a83828" stroke-width=".9"/></g><g transform="translate(166 978.5)"><path d="M0 0L5 5.5L0 11Z" fill="#000"/></g><g transform="translate(179.5 967)"><path d="M26 32H34L32 24Z" fill="#b0b0b0"/><rect width="31.5" height="32" fill="#6878a8"/><rect x="1" y="1" width="29.5" height="30" fill="#8898c8"/><path d="M16 3C8 6 5 14 6 22C8 27 14 30 20 29C26 27 28 20 26 13C24 7 20 4 16 3Z" fill="#c8d4f0" stroke="#e8f0ff" stroke-width=".8"/><path d="M10 12C14 8 20 9 22 14C23 19 19 24 14 24M9 20C12 23 18 22 20 18M12 15C14 13 17 13 18 16" stroke="#8090c0" stroke-width="1.2" fill="none"/></g><g transform="translate(230 968)"><path d="M6 27L20 31L35 24" stroke="#c0c0c0" stroke-width="2.5" fill="none" filter="url(#ib)"/><path d="M0 21L17 13L37 21L19 29Z" fill="#c0c0f0" stroke="#9898d8" stroke-width=".6"/><path d="M3 18L19 26L34 18" stroke="#a8a8e8" stroke-width="1.2" fill="none"/><path d="M8 8L22 0L30 6L28 20L12 24L6 18Z" fill="#f4e858" stroke="#d0c030" stroke-width=".7"/><path d="M22 0L24 8L28 20M8 8L24 8" stroke="#d8c838" stroke-width=".8" fill="none"/></g><clipPath id="r4c"><rect x="0" y="1000" width="300" height="21"/></clipPath><g clip-path="url(#r4c)"><g transform="translate(23 1012)"><path d="M0 10C4 4 10 0 15 1C20 0 24 4 26 10Z" fill="#d01818"/><path d="M4 8C8 3 13 2 17 3" stroke="#ff7070" stroke-width="1.2" fill="none"/></g><g transform="translate(74 1010)"><path d="M0 1H35L32 14H4Z" fill="#eaeaea" stroke="#8c8c8c" stroke-width="1.3"/><path d="M9 1L11 14M18 1V14M27 1L25 14M1 6H34" stroke="#8c8c8c" stroke-width="1.2"/><path d="M8 8C12 5 24 5 28 8V14H8Z" fill="#b0b0b0"/></g><g transform="translate(130.5 1008)"><path d="M0 14C4 6 10 0 16 0C22 0 28 6 32 14Z" fill="url(#gblue)"/></g><g transform="translate(178 1009.5)"><path d="M0 13C3 4 10 0 16 0C22 0 29 4 32 13Z" fill="#2868d0"/><path d="M4 12C8 4 12 2 16 1C20 2 24 4 28 12M10 12C12 6 14 3 16 1C18 3 20 6 22 12M2 9H30M6 5H26" stroke="#a8d0f8" stroke-width=".9" fill="none"/></g><g transform="translate(229.5 1011)"><path d="M0 11C3 4 8 1 13 2L17 11Z" fill="#f0d828"/><path d="M14 0L18 6L24 2L22 11H12Z" fill="#3868c8"/><path d="M20 5L27 4L25 11H19Z" fill="#f0d828"/></g></g></svg>
</body></html>
